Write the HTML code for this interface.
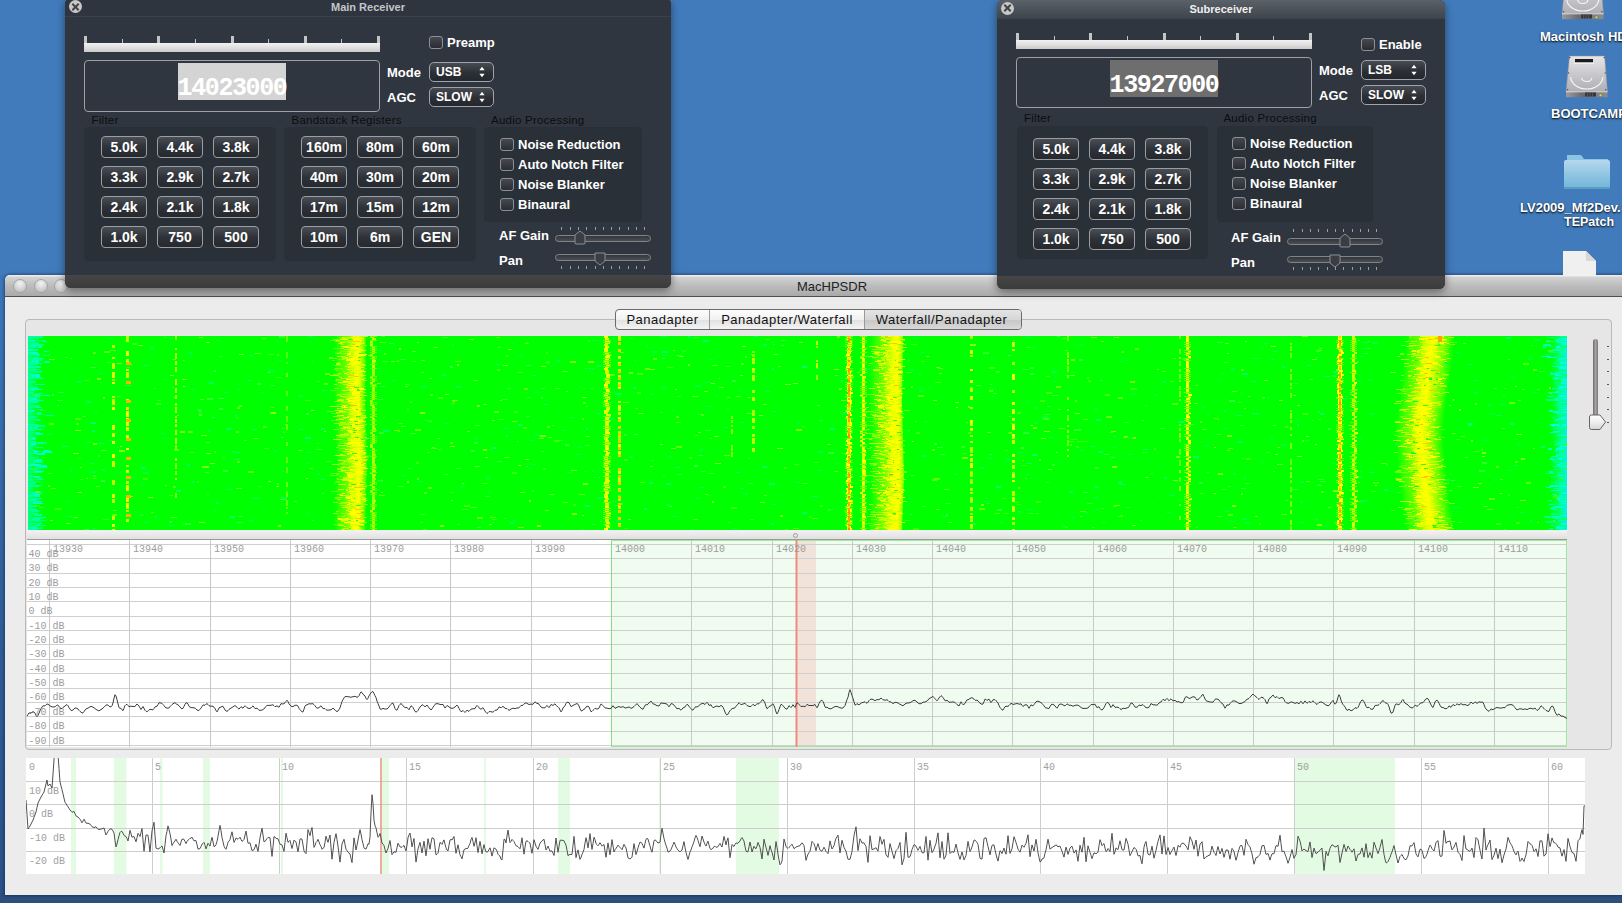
<!DOCTYPE html><html><head><meta charset="utf-8"><style>
*{box-sizing:border-box}
body{margin:0;width:1622px;height:903px;overflow:hidden;position:relative;background:#417bbb;font-family:"Liberation Sans",sans-serif}
.a{position:absolute}
.hud{position:absolute;background:#30363f;border-radius:6px;overflow:hidden;box-shadow:0 3px 8px rgba(0,0,0,.45)}
.hud .tb{position:absolute;left:0;right:0;top:0;height:19px;border-bottom:1px solid #3b424b}
.hud .ttl{position:absolute;left:0;right:0;top:2px;text-align:center;font-size:11px;font-weight:bold;color:#c9ccd0}
.hud .bstrip{position:absolute;left:0;right:0;bottom:0;height:13px;background:linear-gradient(#464646,#3b3b3b)}
.cls{position:absolute;width:13px;height:13px;border-radius:50%;background:#c8c8c8;}
.cls:before,.cls:after{content:"";position:absolute;left:2px;top:5.5px;width:9px;height:2px;background:#444;transform:rotate(45deg)}
.cls:after{transform:rotate(-45deg)}
.lbl{position:absolute;font-size:11.5px;color:#0b0d10;white-space:nowrap;letter-spacing:0.25px}
.grp{position:absolute;background:#2a3038;border-radius:4px;border:1px solid #283037}
.btn{position:absolute;width:46px;height:22px;border:1px solid #9a9ea3;border-radius:4px;background:linear-gradient(#4a4e55,#2f3339 50%,#25282d);color:#fff;font-weight:bold;font-size:14px;text-align:center;line-height:20px}
.chk{position:absolute;width:14px;height:13px;border:1px solid #8c9096;border-radius:3px;background:linear-gradient(#45494f,#2a2d32)}
.ctext{position:absolute;font-size:13px;font-weight:bold;color:#fff;white-space:nowrap}
.pop{position:absolute;border:1px solid #a0a4a9;border-radius:5px;background:linear-gradient(#474b52,#2c3036 55%,#24272c);color:#fff;font-weight:bold;font-size:12px;}
.freq{position:absolute;border:1px solid #9da1a6;border-radius:4px;}
.track{position:absolute;height:9px;background:linear-gradient(#f2f2f2,#dcdcdc 60%,#c9c9c9)}
.tick{position:absolute;background:#c4c4c4}
.strk{position:absolute;height:7px;border:1px solid #80848a;border-radius:4px;background:linear-gradient(#33363b,#4a4d52)}
.stick{position:absolute;width:1px;height:3px;background:#9a9ea3}
</style></head><body>

<div class="a" style="left:0;top:275px;width:6px;height:628px;background:linear-gradient(#3d77b8,#2f5c95 60%,#2b5289)"></div>
<div class="a" style="left:0;top:893px;width:1622px;height:10px;background:#2c4f7d"></div>
<div class="a" style="left:5px;top:275px;width:1625px;height:620px;background:#ececec;border-radius:5px 5px 0 0;overflow:hidden;box-shadow:0 0 3px 1px rgba(0,20,60,.45)">
<div class="a" style="left:0;top:0;width:1625px;height:22px;background:linear-gradient(#f0ecec,#f0ecec 1px,#d3d3d3 2px,#bdbdbd 50%,#a9a9a9);border-bottom:1px solid #4f4f4f"></div>
<div class="a" style="left:8px;top:4px;width:14px;height:14px;border-radius:50%;border:1px solid #a5a5a5;background:radial-gradient(circle at 50% 30%,#f4f4f4,#c9c9c9 70%,#b9b9b9)"></div>
<div class="a" style="left:29px;top:4px;width:14px;height:14px;border-radius:50%;border:1px solid #a5a5a5;background:radial-gradient(circle at 50% 30%,#f4f4f4,#c9c9c9 70%,#b9b9b9)"></div>
<div class="a" style="left:49px;top:4px;width:14px;height:14px;border-radius:50%;border:1px solid #a5a5a5;background:radial-gradient(circle at 50% 30%,#f4f4f4,#c9c9c9 70%,#b9b9b9)"></div>
<div class="a" style="left:0;width:1617px;top:4px;text-align:center;font-size:13px;color:#222;padding-left:37px">MacHPSDR</div>
</div>
<div class="a" style="left:25px;top:319px;width:1587px;height:431px;border:1px solid #b9b9b9;border-radius:4px;background:#e6e6e6"></div>
<div class="a" style="left:615px;top:309px;width:407px;height:21px;border:1px solid #6b6b6b;border-radius:4px;overflow:hidden;background:linear-gradient(#fdfdfd,#f1f1f1 50%,#e2e2e2 55%,#f4f4f4);font-size:13px;color:#111;letter-spacing:0.5px">
<div class="a" style="left:0;top:0;width:93px;height:19px;text-align:center;line-height:19px">Panadapter</div>
<div class="a" style="left:93px;top:0;width:1px;height:19px;background:#9a9a9a"></div>
<div class="a" style="left:94px;top:0;width:154px;height:19px;text-align:center;line-height:19px">Panadapter/Waterfall</div>
<div class="a" style="left:248px;top:0;width:1px;height:19px;background:#9a9a9a"></div>
<div class="a" style="left:249px;top:0;width:157px;height:19px;text-align:center;line-height:19px;padding-right:4px;background:linear-gradient(#e4e4e4,#d6d6d6 50%,#c8c8c8 55%,#d8d8d8)">Waterfall/Panadapter</div>
</div>
<div class="a" style="left:1593px;top:339px;width:5px;height:82px;border-radius:3px;background:linear-gradient(90deg,#6f6a6a,#a9a3a3 50%,#777)"></div>
<div class="a" style="left:1607px;top:346px;width:2px;height:1px;background:#555"></div>
<div class="a" style="left:1607px;top:359px;width:2px;height:1px;background:#555"></div>
<div class="a" style="left:1607px;top:371px;width:2px;height:1px;background:#555"></div>
<div class="a" style="left:1607px;top:384px;width:2px;height:1px;background:#555"></div>
<div class="a" style="left:1607px;top:397px;width:2px;height:1px;background:#555"></div>
<div class="a" style="left:1607px;top:409px;width:2px;height:1px;background:#555"></div>
<div class="a" style="left:1607px;top:422px;width:2px;height:1px;background:#555"></div>
<svg class="a" style="left:1588px;top:414px" width="20" height="17"><path d="M1.5 3 Q1.5 1 3.5 1 L12 1 L17.5 8 L12 15.5 L3.5 15.5 Q1.5 15.5 1.5 13.5 Z" fill="url(#thg)" stroke="#666" stroke-width="1"/><defs><linearGradient id="thg" x1="0" y1="0" x2="0" y2="1"><stop offset="0" stop-color="#fff"/><stop offset=".5" stop-color="#eee"/><stop offset="1" stop-color="#d5d5d5"/></linearGradient></defs></svg>
<div class="a" style="left:27px;top:530px;width:1540px;height:10px;background:linear-gradient(#f3f3f3,#dedede)"></div>
<div class="a" style="left:793px;top:533px;width:5px;height:5px;border-radius:50%;border:1px solid #999"></div>
<svg class="a" style="left:28px;top:336px" width="1539" height="194"><defs><linearGradient id="cyl" x1="0" x2="1" y1="0" y2="0"><stop offset="0" stop-color="#00ffc0" stop-opacity=".75"/><stop offset=".35" stop-color="#00ff90" stop-opacity=".4"/><stop offset="1" stop-color="#00ff00" stop-opacity="0"/></linearGradient><linearGradient id="cyr" x1="0" x2="1" y1="0" y2="0"><stop offset="0" stop-color="#00ff00" stop-opacity="0"/><stop offset=".6" stop-color="#00ffa0" stop-opacity=".6"/><stop offset="1" stop-color="#00f0ff"/></linearGradient><linearGradient id="bnd" x1="0" x2="1" y1="0" y2="0"><stop offset="0" stop-color="#ffff00" stop-opacity="0"/><stop offset=".5" stop-color="#ffff00" stop-opacity=".85"/><stop offset="1" stop-color="#ffff00" stop-opacity="0"/></linearGradient></defs><rect width="1539" height="194" fill="#00ff00"/><rect width="14" height="194" fill="url(#cyl)"/><rect x="1519" width="20" height="194" fill="url(#cyr)"/><defs><linearGradient id="bg0" x1="0" x2="1" y1="0" y2="0"><stop offset="0" stop-color="#ffff00" stop-opacity="0"/><stop offset="0.39" stop-color="#c8ff00" stop-opacity=".5"/><stop offset="0.62" stop-color="#f0ff00" stop-opacity=".9"/><stop offset="0.77" stop-color="#ffff00" stop-opacity="1"/><stop offset="1" stop-color="#ffff00" stop-opacity="0.2"/></linearGradient><linearGradient id="bg1" x1="0" x2="1" y1="0" y2="0"><stop offset="0" stop-color="#ffff00" stop-opacity="0"/><stop offset="0.42" stop-color="#c8ff00" stop-opacity=".5"/><stop offset="0.68" stop-color="#f0ff00" stop-opacity=".9"/><stop offset="0.85" stop-color="#ffff00" stop-opacity="1"/><stop offset="1" stop-color="#ffff00" stop-opacity="0.5"/></linearGradient><linearGradient id="bg2" x1="0" x2="1" y1="0" y2="0"><stop offset="0" stop-color="#ffff00" stop-opacity="0"/><stop offset="0.27" stop-color="#c8ff00" stop-opacity=".5"/><stop offset="0.43" stop-color="#f0ff00" stop-opacity=".9"/><stop offset="0.54" stop-color="#ffff00" stop-opacity="1"/><stop offset="1" stop-color="#ffff00" stop-opacity="0.0"/></linearGradient></defs><rect x="307.0" y="0" width="31" height="4" fill="url(#bg0)"/><rect x="306.9" y="4" width="31" height="4" fill="url(#bg0)"/><rect x="306.8" y="8" width="31" height="4" fill="url(#bg0)"/><rect x="306.8" y="12" width="31" height="4" fill="url(#bg0)"/><rect x="306.7" y="16" width="31" height="4" fill="url(#bg0)"/><rect x="306.6" y="20" width="31" height="4" fill="url(#bg0)"/><rect x="306.6" y="24" width="31" height="4" fill="url(#bg0)"/><rect x="306.5" y="28" width="31" height="4" fill="url(#bg0)"/><rect x="306.4" y="32" width="31" height="4" fill="url(#bg0)"/><rect x="306.4" y="36" width="31" height="4" fill="url(#bg0)"/><rect x="306.3" y="40" width="31" height="4" fill="url(#bg0)"/><rect x="306.2" y="44" width="31" height="4" fill="url(#bg0)"/><rect x="306.2" y="48" width="31" height="4" fill="url(#bg0)"/><rect x="306.1" y="52" width="31" height="4" fill="url(#bg0)"/><rect x="306.0" y="56" width="31" height="4" fill="url(#bg0)"/><rect x="306.1" y="60" width="31" height="4" fill="url(#bg0)"/><rect x="306.2" y="64" width="31" height="4" fill="url(#bg0)"/><rect x="306.3" y="68" width="31" height="4" fill="url(#bg0)"/><rect x="306.4" y="72" width="31" height="4" fill="url(#bg0)"/><rect x="306.5" y="76" width="31" height="4" fill="url(#bg0)"/><rect x="306.6" y="80" width="31" height="4" fill="url(#bg0)"/><rect x="306.7" y="84" width="31" height="4" fill="url(#bg0)"/><rect x="306.9" y="88" width="31" height="4" fill="url(#bg0)"/><rect x="307.0" y="92" width="31" height="4" fill="url(#bg0)"/><rect x="307.1" y="96" width="31" height="4" fill="url(#bg0)"/><rect x="307.2" y="100" width="31" height="4" fill="url(#bg0)"/><rect x="307.3" y="104" width="31" height="4" fill="url(#bg0)"/><rect x="307.4" y="108" width="31" height="4" fill="url(#bg0)"/><rect x="307.5" y="112" width="31" height="4" fill="url(#bg0)"/><rect x="307.7" y="116" width="31" height="4" fill="url(#bg0)"/><rect x="307.8" y="120" width="31" height="4" fill="url(#bg0)"/><rect x="307.9" y="124" width="31" height="4" fill="url(#bg0)"/><rect x="308.0" y="128" width="31" height="4" fill="url(#bg0)"/><rect x="307.9" y="132" width="31" height="4" fill="url(#bg0)"/><rect x="307.8" y="136" width="31" height="4" fill="url(#bg0)"/><rect x="307.6" y="140" width="31" height="4" fill="url(#bg0)"/><rect x="307.5" y="144" width="31" height="4" fill="url(#bg0)"/><rect x="307.4" y="148" width="31" height="4" fill="url(#bg0)"/><rect x="307.2" y="152" width="31" height="4" fill="url(#bg0)"/><rect x="307.1" y="156" width="31" height="4" fill="url(#bg0)"/><rect x="307.0" y="160" width="31" height="4" fill="url(#bg0)"/><rect x="306.9" y="164" width="31" height="4" fill="url(#bg0)"/><rect x="306.8" y="168" width="31" height="4" fill="url(#bg0)"/><rect x="306.6" y="172" width="31" height="4" fill="url(#bg0)"/><rect x="306.5" y="176" width="31" height="4" fill="url(#bg0)"/><rect x="306.4" y="180" width="31" height="4" fill="url(#bg0)"/><rect x="306.2" y="184" width="31" height="4" fill="url(#bg0)"/><rect x="306.1" y="188" width="31" height="4" fill="url(#bg0)"/><rect x="306.0" y="192" width="31" height="4" fill="url(#bg0)"/><rect x="842.0" y="0" width="33" height="4" fill="url(#bg1)"/><rect x="841.9" y="4" width="33" height="4" fill="url(#bg1)"/><rect x="841.9" y="8" width="33" height="4" fill="url(#bg1)"/><rect x="841.8" y="12" width="33" height="4" fill="url(#bg1)"/><rect x="841.7" y="16" width="33" height="4" fill="url(#bg1)"/><rect x="841.7" y="20" width="33" height="4" fill="url(#bg1)"/><rect x="841.6" y="24" width="33" height="4" fill="url(#bg1)"/><rect x="841.6" y="28" width="33" height="4" fill="url(#bg1)"/><rect x="841.5" y="32" width="33" height="4" fill="url(#bg1)"/><rect x="841.5" y="36" width="33" height="4" fill="url(#bg1)"/><rect x="841.4" y="40" width="33" height="4" fill="url(#bg1)"/><rect x="841.3" y="44" width="33" height="4" fill="url(#bg1)"/><rect x="841.3" y="48" width="33" height="4" fill="url(#bg1)"/><rect x="841.2" y="52" width="33" height="4" fill="url(#bg1)"/><rect x="841.2" y="56" width="33" height="4" fill="url(#bg1)"/><rect x="841.1" y="60" width="33" height="4" fill="url(#bg1)"/><rect x="841.1" y="64" width="33" height="4" fill="url(#bg1)"/><rect x="841.0" y="68" width="33" height="4" fill="url(#bg1)"/><rect x="841.1" y="72" width="33" height="4" fill="url(#bg1)"/><rect x="841.2" y="76" width="33" height="4" fill="url(#bg1)"/><rect x="841.3" y="80" width="33" height="4" fill="url(#bg1)"/><rect x="841.5" y="84" width="33" height="4" fill="url(#bg1)"/><rect x="841.6" y="88" width="33" height="4" fill="url(#bg1)"/><rect x="841.7" y="92" width="33" height="4" fill="url(#bg1)"/><rect x="841.8" y="96" width="33" height="4" fill="url(#bg1)"/><rect x="841.9" y="100" width="33" height="4" fill="url(#bg1)"/><rect x="842.0" y="104" width="33" height="4" fill="url(#bg1)"/><rect x="842.1" y="108" width="33" height="4" fill="url(#bg1)"/><rect x="842.3" y="112" width="33" height="4" fill="url(#bg1)"/><rect x="842.4" y="116" width="33" height="4" fill="url(#bg1)"/><rect x="842.5" y="120" width="33" height="4" fill="url(#bg1)"/><rect x="842.6" y="124" width="33" height="4" fill="url(#bg1)"/><rect x="842.7" y="128" width="33" height="4" fill="url(#bg1)"/><rect x="842.8" y="132" width="33" height="4" fill="url(#bg1)"/><rect x="842.9" y="136" width="33" height="4" fill="url(#bg1)"/><rect x="842.9" y="140" width="33" height="4" fill="url(#bg1)"/><rect x="842.8" y="144" width="33" height="4" fill="url(#bg1)"/><rect x="842.6" y="148" width="33" height="4" fill="url(#bg1)"/><rect x="842.5" y="152" width="33" height="4" fill="url(#bg1)"/><rect x="842.3" y="156" width="33" height="4" fill="url(#bg1)"/><rect x="842.2" y="160" width="33" height="4" fill="url(#bg1)"/><rect x="842.0" y="164" width="33" height="4" fill="url(#bg1)"/><rect x="841.9" y="168" width="33" height="4" fill="url(#bg1)"/><rect x="841.7" y="172" width="33" height="4" fill="url(#bg1)"/><rect x="841.6" y="176" width="33" height="4" fill="url(#bg1)"/><rect x="841.4" y="180" width="33" height="4" fill="url(#bg1)"/><rect x="841.3" y="184" width="33" height="4" fill="url(#bg1)"/><rect x="841.1" y="188" width="33" height="4" fill="url(#bg1)"/><rect x="841.0" y="192" width="33" height="4" fill="url(#bg1)"/><rect x="1378.8" y="0" width="48" height="4" fill="url(#bg2)"/><rect x="1378.3" y="4" width="48" height="4" fill="url(#bg2)"/><rect x="1377.9" y="8" width="48" height="4" fill="url(#bg2)"/><rect x="1377.4" y="12" width="48" height="4" fill="url(#bg2)"/><rect x="1377.0" y="16" width="48" height="4" fill="url(#bg2)"/><rect x="1376.5" y="20" width="48" height="4" fill="url(#bg2)"/><rect x="1376.0" y="24" width="48" height="4" fill="url(#bg2)"/><rect x="1375.6" y="28" width="48" height="4" fill="url(#bg2)"/><rect x="1375.1" y="32" width="48" height="4" fill="url(#bg2)"/><rect x="1374.7" y="36" width="48" height="4" fill="url(#bg2)"/><rect x="1374.2" y="40" width="48" height="4" fill="url(#bg2)"/><rect x="1373.7" y="44" width="48" height="4" fill="url(#bg2)"/><rect x="1373.2" y="48" width="48" height="4" fill="url(#bg2)"/><rect x="1372.6" y="52" width="48" height="4" fill="url(#bg2)"/><rect x="1372.0" y="56" width="48" height="4" fill="url(#bg2)"/><rect x="1371.5" y="60" width="48" height="4" fill="url(#bg2)"/><rect x="1370.9" y="64" width="48" height="4" fill="url(#bg2)"/><rect x="1370.4" y="68" width="48" height="4" fill="url(#bg2)"/><rect x="1369.8" y="72" width="48" height="4" fill="url(#bg2)"/><rect x="1369.2" y="76" width="48" height="4" fill="url(#bg2)"/><rect x="1368.7" y="80" width="48" height="4" fill="url(#bg2)"/><rect x="1368.1" y="84" width="48" height="4" fill="url(#bg2)"/><rect x="1367.6" y="88" width="48" height="4" fill="url(#bg2)"/><rect x="1367.0" y="92" width="48" height="4" fill="url(#bg2)"/><rect x="1367.3" y="96" width="48" height="4" fill="url(#bg2)"/><rect x="1367.6" y="100" width="48" height="4" fill="url(#bg2)"/><rect x="1368.0" y="104" width="48" height="4" fill="url(#bg2)"/><rect x="1368.3" y="108" width="48" height="4" fill="url(#bg2)"/><rect x="1368.6" y="112" width="48" height="4" fill="url(#bg2)"/><rect x="1368.9" y="116" width="48" height="4" fill="url(#bg2)"/><rect x="1369.2" y="120" width="48" height="4" fill="url(#bg2)"/><rect x="1369.6" y="124" width="48" height="4" fill="url(#bg2)"/><rect x="1369.9" y="128" width="48" height="4" fill="url(#bg2)"/><rect x="1370.2" y="132" width="48" height="4" fill="url(#bg2)"/><rect x="1370.5" y="136" width="48" height="4" fill="url(#bg2)"/><rect x="1370.8" y="140" width="48" height="4" fill="url(#bg2)"/><rect x="1371.3" y="144" width="48" height="4" fill="url(#bg2)"/><rect x="1371.8" y="148" width="48" height="4" fill="url(#bg2)"/><rect x="1372.4" y="152" width="48" height="4" fill="url(#bg2)"/><rect x="1373.0" y="156" width="48" height="4" fill="url(#bg2)"/><rect x="1373.5" y="160" width="48" height="4" fill="url(#bg2)"/><rect x="1374.1" y="164" width="48" height="4" fill="url(#bg2)"/><rect x="1374.6" y="168" width="48" height="4" fill="url(#bg2)"/><rect x="1375.2" y="172" width="48" height="4" fill="url(#bg2)"/><rect x="1375.8" y="176" width="48" height="4" fill="url(#bg2)"/><rect x="1376.3" y="180" width="48" height="4" fill="url(#bg2)"/><rect x="1376.9" y="184" width="48" height="4" fill="url(#bg2)"/><rect x="1377.4" y="188" width="48" height="4" fill="url(#bg2)"/><rect x="1378.0" y="192" width="48" height="4" fill="url(#bg2)"/><path fill="#00ff80" d="M2 166h3v1h-3zM7 57h3v2h-3zM1 146h7v2h-7zM4 134h10v1h-10zM14 19h8v1h-8zM2 69h10v2h-10zM1 16h3v2h-3zM3 174h10v1h-10zM6 42h10v1h-10zM4 71h5v1h-5zM1 1h5v1h-5zM5 32h3v1h-3zM9 132h3v1h-3zM1 92h5v2h-5zM0 132h10v1h-10zM1 52h10v2h-10zM1 169h4v1h-4zM4 5h3v2h-3zM2 64h6v1h-6zM4 61h8v1h-8zM3 189h8v1h-8zM7 4h10v1h-10zM10 142h3v1h-3zM2 132h10v1h-10zM4 109h4v1h-4zM8 77h4v1h-4zM5 141h10v1h-10zM0 22h7v1h-7zM5 141h9v1h-9zM2 33h3v2h-3zM4 58h8v1h-8zM0 22h5v1h-5zM1 77h6v1h-6zM0 135h5v2h-5zM8 185h5v1h-5zM7 187h5v2h-5zM5 145h3v2h-3zM11 191h4v2h-4zM2 193h6v1h-6zM12 73h3v2h-3zM6 164h6v1h-6zM3 190h7v2h-7zM5 92h5v2h-5zM6 130h7v1h-7zM1 7h9v2h-9zM6 52h4v1h-4zM4 65h7v1h-7zM2 61h7v1h-7zM7 145h6v1h-6zM3 63h9v1h-9zM9 184h10v1h-10zM2 183h7v1h-7zM3 57h3v1h-3zM2 80h6v1h-6zM1 5h6v1h-6zM4 1h7v2h-7zM10 194h7v1h-7zM4 57h10v1h-10zM4 36h9v1h-9zM7 84h6v1h-6zM9 8h7v2h-7zM1 110h4v1h-4zM5 121h6v1h-6zM3 93h10v1h-10zM4 157h3v1h-3zM2 127h5v1h-5zM0 166h3v1h-3zM9 106h10v2h-10zM15 131h5v1h-5zM1 1h4v2h-4zM2 52h7v1h-7zM3 101h5v2h-5zM1 23h5v1h-5zM10 93h6v1h-6zM3 101h4v2h-4zM1 123h8v1h-8zM2 162h9v1h-9zM1 31h5v1h-5zM8 78h9v1h-9zM3 63h9v1h-9zM5 45h3v1h-3zM2 113h3v1h-3zM7 6h4v2h-4zM1531 65h10v1h-10zM1526 46h9v1h-9zM1526 133h4v1h-4zM1521 75h7v1h-7zM1534 74h9v1h-9zM1533 5h3v1h-3zM1524 90h7v1h-7zM1530 2h3v2h-3zM1531 89h10v2h-10zM1533 0h3v1h-3zM1526 26h3v2h-3zM1518 185h10v2h-10zM1518 1h9v1h-9zM1532 26h7v1h-7zM1532 68h9v2h-9zM1533 43h7v1h-7zM1530 153h6v1h-6zM1517 137h10v1h-10zM1529 78h6v1h-6zM1526 16h8v1h-8zM1521 192h4v2h-4zM1534 183h8v1h-8zM1528 128h10v1h-10zM1526 125h5v1h-5zM1529 28h4v1h-4zM1533 101h4v1h-4zM1529 67h9v2h-9zM1531 152h3v1h-3zM1533 83h5v1h-5zM1532 83h6v1h-6zM1534 38h5v1h-5zM1524 177h6v2h-6zM1533 1h6v1h-6zM1523 146h9v1h-9zM1526 105h10v1h-10zM1533 27h6v1h-6zM1524 42h5v1h-5zM1533 39h6v1h-6zM1528 42h4v2h-4zM1531 35h10v1h-10zM1531 165h3v1h-3zM1528 11h8v1h-8zM1522 36h3v1h-3zM1529 87h9v1h-9zM1532 182h7v1h-7zM1531 10h9v2h-9zM1532 121h3v2h-3zM1530 9h9v1h-9zM1532 81h3v1h-3zM1524 13h10v2h-10zM1521 10h4v1h-4zM1531 120h6v1h-6zM1531 120h3v1h-3zM1533 79h5v1h-5zM1528 147h10v1h-10zM1516 180h8v2h-8zM1517 63h9v1h-9zM1532 68h9v1h-9zM1528 10h7v1h-7zM1523 140h10v1h-10zM1523 173h9v1h-9zM1532 179h7v1h-7zM1530 144h8v1h-8zM1532 52h10v2h-10zM1521 16h9v1h-9zM1533 23h7v1h-7zM1531 40h8v1h-8zM1534 65h8v1h-8zM1532 7h3v1h-3zM1524 81h3v1h-3zM1529 112h6v1h-6zM1531 56h3v1h-3zM1533 39h3v1h-3zM1528 123h4v1h-4zM1529 36h3v1h-3zM1530 50h4v1h-4zM1533 44h6v1h-6zM1534 93h3v1h-3zM1525 95h3v1h-3zM1517 18h4v1h-4zM1527 114h3v2h-3zM1518 4h4v2h-4zM1528 49h7v1h-7zM1528 31h9v1h-9zM1528 144h8v1h-8zM1518 63h9v2h-9zM1530 2h8v1h-8zM1528 107h9v1h-9zM1515 10h3v2h-3zM1528 68h7v2h-7zM1533 25h7v1h-7zM1532 189h7v1h-7zM1528 14h3v1h-3z"/><path fill="#00ffd0" d="M3 24h8v2h-8zM4 22h9v1h-9zM3 101h3v1h-3zM3 107h5v2h-5zM3 163h6v1h-6zM7 140h4v2h-4zM1 91h9v1h-9zM6 21h5v1h-5zM5 102h3v1h-3zM4 53h10v1h-10zM1 0h5v2h-5zM2 93h3v1h-3zM7 123h7v1h-7zM1 128h8v2h-8zM9 93h4v1h-4zM2 192h6v1h-6zM3 190h4v2h-4zM2 38h10v2h-10zM6 26h5v1h-5zM2 149h9v2h-9zM1 1h5v1h-5zM14 115h10v2h-10zM4 66h6v1h-6zM4 64h5v1h-5zM5 159h7v2h-7zM1 28h6v1h-6zM2 173h7v1h-7zM2 14h5v1h-5zM1 56h4v1h-4zM0 41h7v1h-7zM1 4h7v1h-7zM12 129h7v2h-7zM0 88h3v1h-3zM3 18h7v1h-7zM8 97h7v2h-7zM4 140h8v1h-8zM3 177h6v1h-6zM6 115h3v2h-3zM0 16h10v1h-10zM4 34h3v1h-3zM3 140h6v1h-6zM6 115h7v1h-7zM3 53h4v2h-4zM5 124h9v1h-9zM0 30h6v2h-6zM7 35h7v1h-7zM1 164h5v1h-5zM3 128h10v2h-10zM5 194h10v1h-10zM2 140h6v1h-6zM6 135h10v1h-10zM0 27h6v1h-6zM1 10h3v1h-3zM1 64h9v2h-9zM1 94h6v1h-6zM5 17h6v1h-6zM0 14h5v1h-5zM10 187h4v1h-4zM2 16h3v1h-3zM10 162h4v1h-4zM6 64h9v1h-9zM9 117h8v2h-8zM6 40h6v1h-6zM1 159h4v1h-4zM16 114h5v1h-5zM0 63h5v1h-5zM4 39h7v2h-7zM3 62h6v2h-6zM5 167h10v1h-10zM12 59h10v1h-10zM0 75h6v1h-6zM10 181h8v1h-8zM5 158h7v1h-7zM2 170h7v1h-7zM4 117h5v1h-5zM7 192h6v1h-6zM8 157h6v1h-6zM1 13h9v2h-9zM1 33h10v1h-10z"/><path fill="#00ffa0" d="M2 61h4v2h-4zM5 136h9v1h-9zM5 149h10v1h-10zM0 62h4v2h-4zM8 18h4v2h-4zM3 42h8v1h-8zM7 89h10v2h-10zM7 98h8v1h-8zM5 126h3v1h-3zM6 33h6v1h-6zM1 150h5v1h-5zM6 143h9v1h-9zM3 64h8v2h-8zM2 121h4v1h-4zM0 26h8v2h-8zM9 76h4v2h-4zM5 132h8v1h-8zM7 156h6v1h-6zM4 7h3v1h-3zM1 88h10v2h-10zM4 0h10v2h-10zM8 22h9v1h-9zM3 156h10v2h-10zM4 10h4v2h-4zM1 143h3v1h-3zM7 155h6v2h-6zM12 106h4v1h-4zM4 191h4v1h-4zM5 57h5v2h-5zM8 131h9v1h-9zM2 184h8v1h-8zM0 46h7v1h-7zM7 126h8v1h-8zM3 51h7v2h-7zM4 114h5v1h-5zM7 48h10v1h-10zM1 27h9v2h-9zM3 177h7v1h-7zM2 0h7v1h-7zM5 91h5v1h-5zM1 97h4v1h-4zM4 129h3v1h-3zM2 83h10v1h-10zM9 10h5v2h-5zM1 160h6v1h-6zM4 166h10v1h-10zM16 25h6v2h-6zM1 74h7v1h-7zM1 121h3v1h-3zM5 0h10v2h-10zM8 106h8v1h-8zM5 30h8v1h-8zM11 189h7v1h-7zM5 150h4v1h-4zM2 193h7v1h-7zM9 73h5v1h-5zM7 111h8v1h-8zM4 140h5v1h-5zM3 81h6v1h-6zM4 190h6v1h-6zM4 86h3v1h-3zM5 175h6v1h-6zM14 5h5v1h-5zM5 181h10v2h-10zM4 149h6v1h-6zM6 60h6v1h-6zM5 165h9v1h-9zM6 178h8v2h-8zM4 59h10v1h-10zM16 15h5v1h-5zM4 96h8v1h-8zM0 71h4v1h-4zM0 31h6v1h-6zM2 105h6v2h-6zM0 191h4v2h-4zM4 183h8v1h-8zM0 27h10v2h-10zM3 38h6v1h-6zM3 109h4v1h-4zM1 170h4v1h-4zM7 71h7v1h-7zM6 149h6v1h-6zM2 187h6v1h-6zM3 8h10v2h-10zM18 79h8v1h-8zM1 103h6v1h-6zM5 23h9v2h-9zM1 94h5v1h-5zM2 17h4v1h-4zM8 41h6v2h-6zM2 132h5v1h-5zM2 143h3v2h-3zM4 30h9v2h-9zM5 125h10v1h-10zM1 117h5v1h-5zM10 27h4v1h-4zM1 33h4v2h-4zM3 175h6v1h-6z"/><path fill="#00ffe0" d="M1530 82h7v1h-7zM1533 81h8v1h-8zM1524 96h5v1h-5zM1513 20h10v1h-10zM1522 149h8v2h-8zM1531 149h7v2h-7zM1533 62h5v1h-5zM1529 6h9v1h-9zM1531 129h9v2h-9zM1532 167h10v1h-10zM1528 191h7v2h-7zM1528 55h4v2h-4zM1533 149h4v2h-4zM1533 27h5v1h-5zM1533 179h3v1h-3zM1528 10h4v2h-4zM1532 193h9v1h-9zM1532 52h6v1h-6zM1531 73h10v1h-10zM1534 7h9v2h-9zM1522 88h10v2h-10zM1533 0h6v1h-6zM1534 88h7v2h-7zM1533 179h6v1h-6zM1533 43h9v2h-9zM1531 193h5v2h-5zM1523 154h8v1h-8zM1532 27h4v1h-4zM1529 99h10v1h-10zM1527 75h10v1h-10zM1531 164h6v2h-6zM1534 2h9v1h-9zM1532 25h10v2h-10zM1531 31h8v2h-8zM1520 56h9v1h-9zM1527 39h7v1h-7zM1529 162h3v2h-3zM1533 75h7v2h-7zM1531 148h5v1h-5zM1531 50h10v2h-10zM1532 30h7v1h-7zM1532 109h9v2h-9zM1533 106h5v1h-5zM1533 156h9v2h-9zM1526 152h4v1h-4zM1526 170h10v2h-10zM1529 77h5v1h-5zM1533 3h9v1h-9zM1533 22h6v1h-6zM1531 191h5v2h-5zM1525 13h3v1h-3zM1519 21h10v1h-10zM1531 59h7v2h-7zM1529 122h6v1h-6zM1530 161h10v1h-10zM1533 71h3v1h-3zM1518 151h5v1h-5zM1522 96h4v1h-4zM1531 123h3v1h-3zM1525 95h7v1h-7zM1529 3h10v2h-10zM1530 191h5v1h-5zM1531 82h6v1h-6zM1531 115h5v1h-5zM1531 66h6v1h-6zM1531 111h3v1h-3zM1533 46h6v2h-6zM1533 187h9v2h-9zM1531 22h6v2h-6zM1528 128h7v1h-7zM1531 154h3v1h-3zM1525 92h8v1h-8zM1525 13h8v2h-8zM1532 51h3v1h-3zM1532 3h9v1h-9zM1533 165h5v1h-5zM1520 112h4v2h-4zM1523 120h7v1h-7zM1530 3h8v1h-8zM1528 112h8v2h-8z"/><path fill="#00ffb0" d="M1530 135h3v2h-3zM1532 161h9v2h-9zM1532 147h5v1h-5zM1529 93h3v1h-3zM1530 52h8v2h-8zM1533 16h5v2h-5zM1521 168h6v1h-6zM1525 130h7v1h-7zM1533 83h6v1h-6zM1525 178h3v1h-3zM1524 52h7v1h-7zM1527 108h7v1h-7zM1529 23h7v1h-7zM1531 83h8v1h-8zM1528 118h10v2h-10zM1532 148h6v1h-6zM1520 60h6v1h-6zM1530 168h4v1h-4zM1520 164h4v1h-4zM1530 25h9v1h-9zM1525 182h5v1h-5zM1533 104h5v2h-5zM1525 41h6v2h-6zM1532 163h8v2h-8zM1526 64h7v1h-7zM1531 107h8v2h-8zM1530 184h6v1h-6zM1525 170h9v1h-9zM1533 120h8v1h-8zM1524 180h9v2h-9zM1524 123h3v2h-3zM1533 91h6v2h-6zM1531 159h4v2h-4zM1526 83h5v2h-5zM1521 135h4v2h-4zM1527 36h10v1h-10zM1531 42h3v1h-3zM1525 170h7v1h-7zM1530 121h6v1h-6zM1529 90h10v1h-10zM1532 128h7v2h-7zM1524 30h8v1h-8zM1533 103h3v1h-3zM1531 3h8v1h-8zM1532 17h3v2h-3zM1527 152h5v1h-5zM1527 190h5v1h-5zM1532 127h10v2h-10zM1524 158h4v1h-4zM1532 42h5v1h-5zM1530 106h10v1h-10zM1533 69h8v1h-8zM1527 3h5v2h-5zM1524 96h6v1h-6zM1533 192h3v1h-3zM1529 138h4v2h-4zM1533 148h7v2h-7zM1531 126h8v1h-8zM1530 71h9v1h-9zM1515 8h8v2h-8zM1534 171h9v1h-9zM1534 112h4v1h-4zM1533 56h4v2h-4zM1528 5h4v1h-4zM1527 75h8v1h-8zM1534 14h6v2h-6zM1532 193h6v1h-6zM1528 41h3v2h-3zM1532 0h7v1h-7zM1522 171h6v2h-6zM1532 132h8v1h-8zM1526 126h4v1h-4zM1522 122h5v2h-5zM1526 62h8v2h-8zM1521 74h4v2h-4zM1530 42h4v1h-4zM1529 61h10v1h-10zM1528 24h5v1h-5zM1522 37h10v2h-10zM1526 42h3v2h-3zM1528 152h7v1h-7zM1525 75h9v2h-9zM1523 177h6v2h-6zM1531 117h7v2h-7zM1532 139h9v2h-9zM1531 69h7v1h-7zM1521 112h3v2h-3z"/><path fill="#00ff60" d="M802 173h3v1h-3zM1066 73h4v1h-4zM998 1h5v1h-5zM1271 186h5v1h-5zM170 75h4v2h-4zM1367 107h3v2h-3zM634 15h6v2h-6zM164 145h2v2h-2zM943 15h2v2h-2zM1239 61h3v1h-3zM478 99h2v2h-2zM348 32h5v1h-5zM548 118h3v1h-3zM271 93h4v1h-4zM39 180h5v1h-5zM1425 171h6v1h-6zM1440 28h4v1h-4zM774 176h5v2h-5zM634 51h4v1h-4zM1440 89h4v1h-4zM1279 29h4v1h-4zM468 28h4v1h-4zM944 187h4v2h-4zM379 35h2v1h-2zM1481 134h3v1h-3zM1208 79h6v1h-6zM738 55h4v1h-4zM1025 45h3v1h-3zM709 136h3v1h-3zM1041 155h4v2h-4zM1332 135h2v1h-2zM817 64h5v1h-5zM853 74h5v1h-5zM955 165h6v1h-6zM1297 40h5v1h-5zM971 186h3v1h-3zM1482 87h4v2h-4zM625 15h4v2h-4zM964 60h2v1h-2zM290 137h2v2h-2zM1335 6h5v1h-5zM1225 22h6v1h-6zM735 8h4v2h-4zM1135 45h3v2h-3zM1242 102h4v1h-4zM891 53h4v1h-4zM1531 76h2v1h-2zM901 51h2v1h-2zM832 162h6v2h-6zM1068 83h5v2h-5zM1037 39h5v1h-5zM1070 115h5v2h-5zM893 16h3v1h-3zM809 127h2v1h-2zM1328 140h5v2h-5zM1004 118h5v2h-5zM1415 142h2v2h-2zM89 111h2v1h-2zM340 184h4v1h-4zM653 14h3v1h-3zM504 39h4v1h-4zM117 186h3v1h-3zM1214 37h6v2h-6zM1398 175h2v1h-2zM1021 101h4v1h-4zM186 174h2v1h-2zM557 169h5v2h-5zM1245 15h5v1h-5zM999 173h5v1h-5zM1196 92h3v1h-3zM1165 120h6v2h-6zM148 154h5v2h-5zM1341 136h6v1h-6zM621 146h4v2h-4zM1383 190h5v1h-5zM202 180h5v2h-5zM476 92h6v1h-6zM744 75h4v1h-4zM206 116h6v1h-6zM1290 75h2v2h-2zM316 3h6v1h-6zM880 162h5v1h-5zM616 172h3v2h-3zM1213 57h2v1h-2zM1310 142h2v2h-2zM188 166h3v2h-3zM115 29h6v1h-6zM998 194h2v1h-2zM1288 183h2v2h-2zM817 166h6v1h-6zM1057 176h4v1h-4zM203 115h4v1h-4zM784 160h6v1h-6zM990 175h2v2h-2zM998 127h6v1h-6zM64 94h3v2h-3zM1292 77h4v2h-4zM734 130h5v2h-5zM390 145h3v1h-3zM1473 68h5v1h-5zM815 76h6v2h-6zM1141 159h5v1h-5zM1043 181h3v1h-3zM196 56h3v1h-3zM1067 173h3v1h-3zM314 63h6v1h-6zM568 77h4v1h-4zM1288 21h3v1h-3zM803 84h2v1h-2zM325 183h5v2h-5zM712 86h4v1h-4zM364 44h3v1h-3zM802 92h5v2h-5zM606 24h2v1h-2zM1177 109h4v1h-4zM141 189h5v1h-5zM605 51h3v2h-3zM482 186h4v2h-4zM1400 105h6v1h-6zM1305 35h6v2h-6zM947 127h2v1h-2zM1468 79h6v1h-6zM490 88h4v2h-4zM558 92h2v2h-2zM1387 182h3v2h-3zM647 131h5v1h-5zM1502 184h2v2h-2zM712 152h3v1h-3zM1085 100h3v1h-3zM459 141h2v2h-2zM224 93h5v1h-5zM846 103h3v1h-3zM61 127h5v1h-5zM743 6h3v1h-3zM1356 153h4v2h-4zM219 44h5v1h-5zM294 54h6v1h-6zM1329 102h5v1h-5zM71 37h4v1h-4zM926 138h3v1h-3zM1254 30h3v2h-3zM1197 175h4v1h-4zM1487 103h2v1h-2zM1523 188h3v2h-3zM74 133h3v2h-3zM622 58h3v1h-3zM5 57h5v1h-5zM516 68h4v1h-4zM58 106h5v1h-5zM744 32h2v2h-2zM1277 104h4v1h-4zM1243 23h3v1h-3zM34 110h6v1h-6zM447 102h2v1h-2zM743 187h3v2h-3zM696 91h4v1h-4zM1513 110h4v2h-4zM519 27h3v1h-3zM584 2h4v1h-4zM711 54h2v1h-2zM535 94h3v1h-3zM504 84h2v1h-2zM704 95h2v1h-2zM580 82h5v2h-5zM206 123h6v1h-6zM850 144h3v2h-3zM1196 74h2v2h-2zM670 78h6v1h-6zM1446 44h4v1h-4zM161 16h3v2h-3zM112 131h5v2h-5zM1331 20h4v1h-4zM668 162h3v1h-3zM277 101h6v2h-6zM233 56h2v1h-2zM1067 150h4v2h-4zM1092 148h6v1h-6zM968 150h5v2h-5zM1090 146h4v2h-4zM59 65h4v2h-4zM1322 125h5v1h-5zM19 98h4v1h-4zM70 107h6v1h-6zM587 57h6v2h-6zM81 104h5v1h-5zM644 74h2v1h-2zM159 128h3v2h-3zM638 147h5v2h-5zM1325 103h4v1h-4zM279 116h4v1h-4zM293 92h4v2h-4zM1063 110h4v1h-4zM768 146h3v1h-3zM1066 161h4v1h-4zM726 0h4v1h-4zM1024 35h5v2h-5zM1363 155h2v1h-2zM1325 95h2v1h-2zM813 44h2v2h-2zM774 30h5v2h-5zM293 143h4v1h-4zM127 180h2v2h-2zM210 53h3v1h-3zM225 162h6v1h-6zM745 168h3v1h-3zM464 186h3v1h-3zM1151 85h6v2h-6zM891 37h2v2h-2zM914 180h5v1h-5zM1490 108h3v1h-3zM1115 113h6v1h-6zM677 46h6v1h-6zM1052 114h3v1h-3zM198 92h5v2h-5zM1269 88h2v2h-2zM1147 144h2v2h-2zM253 161h6v2h-6zM1486 129h3v1h-3zM998 138h4v1h-4zM1091 25h4v1h-4zM1416 26h3v2h-3zM680 159h2v1h-2zM80 2h3v1h-3zM560 32h6v1h-6zM199 153h6v1h-6zM1478 1h5v2h-5zM1324 7h5v1h-5zM355 94h6v2h-6zM221 19h5v1h-5zM1223 45h6v1h-6zM1440 87h5v2h-5zM660 0h2v2h-2zM284 25h2v1h-2zM343 161h3v1h-3zM181 46h5v2h-5zM42 134h3v1h-3zM460 156h2v1h-2zM675 4h6v2h-6zM254 135h2v1h-2zM317 115h3v1h-3zM63 86h5v2h-5zM414 38h4v2h-4zM741 147h6v2h-6zM1528 188h3v1h-3zM1203 56h2v1h-2zM1210 105h4v2h-4zM464 111h4v2h-4zM1030 126h2v1h-2z"/><path fill="#60ff00" d="M519 90h3v2h-3zM1090 180h5v1h-5zM612 146h5v1h-5zM864 146h3v1h-3zM446 130h6v1h-6zM1028 50h5v2h-5zM1186 82h3v1h-3zM677 158h3v1h-3zM68 150h4v1h-4zM302 139h6v1h-6zM719 61h4v1h-4zM1321 172h4v2h-4zM622 130h3v1h-3zM84 178h5v2h-5zM252 163h6v1h-6zM384 15h4v1h-4zM876 74h6v1h-6zM123 176h3v1h-3zM402 58h3v2h-3zM867 23h4v2h-4zM23 152h5v1h-5zM373 90h5v1h-5zM21 87h5v2h-5zM961 54h4v2h-4zM1220 60h2v1h-2zM1245 89h3v1h-3zM610 77h6v1h-6zM73 114h6v1h-6zM497 7h4v1h-4zM938 86h2v1h-2zM1114 84h2v1h-2zM906 142h6v2h-6zM45 181h5v1h-5zM404 111h3v1h-3zM1353 127h6v1h-6zM735 68h4v1h-4zM1200 112h5v1h-5zM234 2h4v1h-4zM208 152h6v1h-6zM809 0h3v2h-3zM538 55h2v1h-2zM940 96h3v2h-3zM841 97h5v1h-5zM806 135h4v1h-4zM389 142h2v2h-2zM400 151h4v2h-4zM765 192h6v1h-6zM85 174h4v1h-4zM449 181h6v2h-6zM823 40h3v2h-3zM155 24h2v1h-2zM1455 170h5v1h-5zM832 22h3v1h-3zM313 32h6v2h-6zM1145 22h3v1h-3zM890 59h6v2h-6zM1094 15h2v2h-2zM257 88h3v1h-3zM1490 64h3v1h-3zM904 143h5v2h-5zM625 22h4v2h-4zM1474 92h3v1h-3zM211 69h3v2h-3zM534 35h6v1h-6zM476 121h6v1h-6zM1447 67h2v2h-2zM171 78h3v2h-3zM1030 73h3v1h-3zM1311 170h6v1h-6zM1213 33h3v2h-3zM1291 83h2v1h-2zM817 58h6v1h-6zM294 157h2v1h-2zM255 194h2v2h-2zM1144 67h6v2h-6zM858 160h6v2h-6zM1249 111h3v1h-3zM910 32h5v1h-5zM75 61h2v2h-2zM220 135h6v2h-6zM466 75h5v2h-5zM887 85h2v1h-2zM146 113h5v2h-5zM990 151h2v2h-2zM405 11h5v1h-5zM137 149h2v1h-2zM455 68h4v1h-4zM834 45h4v2h-4zM387 93h6v2h-6zM172 63h4v1h-4zM1435 7h3v1h-3zM1174 93h5v1h-5zM1526 159h3v1h-3zM1274 0h6v1h-6zM595 66h6v1h-6zM422 106h3v2h-3zM445 44h5v1h-5zM835 102h3v1h-3zM174 130h5v2h-5zM145 150h3v2h-3zM696 119h6v1h-6zM20 149h2v2h-2zM352 6h6v1h-6zM296 47h4v2h-4zM1383 33h2v1h-2zM58 142h2v1h-2zM443 171h6v1h-6zM1078 80h6v2h-6zM1282 43h3v1h-3zM1253 178h6v1h-6zM1384 83h4v1h-4zM673 78h3v2h-3zM1205 191h4v1h-4zM1390 6h4v1h-4zM641 170h3v1h-3zM665 183h5v1h-5zM1472 143h3v1h-3zM82 14h6v1h-6zM377 50h3v1h-3zM908 173h4v1h-4zM581 19h3v1h-3zM1134 35h4v1h-4zM1495 27h6v2h-6zM1419 22h5v1h-5zM143 181h6v1h-6zM713 27h3v2h-3zM1471 157h4v1h-4zM980 96h4v2h-4zM1310 8h5v2h-5zM1293 155h3v2h-3zM401 42h3v1h-3zM1481 66h6v2h-6zM1461 162h6v2h-6zM1031 92h6v1h-6zM462 181h6v1h-6zM1373 131h5v1h-5zM1117 141h4v1h-4zM393 36h3v1h-3zM1421 154h3v1h-3zM1199 114h3v1h-3zM1047 64h2v2h-2zM1437 121h3v1h-3zM1505 112h2v1h-2zM648 80h3v2h-3zM1172 85h2v2h-2zM1090 61h5v2h-5zM708 60h5v1h-5zM511 102h5v1h-5zM351 159h6v1h-6zM844 99h2v1h-2zM144 23h4v1h-4zM1325 53h5v1h-5zM6 169h6v1h-6zM555 66h3v2h-3zM266 165h3v1h-3zM1249 128h6v1h-6zM1498 146h5v2h-5zM1278 145h4v1h-4zM227 17h6v1h-6zM699 61h3v1h-3zM1107 12h4v2h-4zM1468 130h3v2h-3zM470 11h2v1h-2zM1494 53h3v1h-3zM1380 81h5v1h-5zM427 25h6v1h-6zM1291 12h3v1h-3zM1073 5h3v1h-3zM1433 100h4v1h-4zM1274 104h2v2h-2zM332 147h6v2h-6zM356 17h2v2h-2zM1424 97h4v1h-4zM691 51h5v1h-5zM799 108h4v1h-4zM916 153h5v1h-5zM396 156h3v2h-3zM717 20h2v2h-2zM1300 171h3v1h-3zM379 73h2v1h-2zM225 102h6v1h-6zM409 102h3v1h-3zM1052 180h3v1h-3zM1289 14h5v1h-5zM934 110h3v1h-3zM750 30h3v1h-3zM1505 33h4v2h-4zM1052 175h6v1h-6zM208 95h3v2h-3zM617 32h5v2h-5zM48 87h3v2h-3zM736 159h3v1h-3zM1204 55h5v1h-5zM65 16h3v2h-3zM920 186h4v1h-4zM297 37h5v2h-5zM789 69h3v1h-3zM959 96h4v1h-4zM520 101h4v1h-4zM1487 125h3v2h-3zM1042 108h2v2h-2zM209 125h3v2h-3zM282 132h3v1h-3zM65 142h4v1h-4zM648 110h6v2h-6zM557 100h5v1h-5zM1037 14h3v1h-3zM1213 157h2v2h-2zM496 52h4v2h-4zM403 112h6v1h-6zM904 113h3v2h-3zM811 52h3v2h-3zM1480 23h2v1h-2zM270 114h5v1h-5zM393 24h4v1h-4zM535 166h5v1h-5zM558 70h2v1h-2zM967 177h5v1h-5zM581 38h6v2h-6zM784 182h6v1h-6zM1415 170h3v1h-3zM160 95h5v2h-5zM76 15h6v2h-6zM1326 183h2v1h-2zM664 60h6v1h-6zM370 94h2v2h-2zM1531 142h4v1h-4zM829 36h3v1h-3zM551 158h6v1h-6zM311 1h4v2h-4zM271 59h3v1h-3zM468 1h4v1h-4zM317 184h6v2h-6zM718 77h6v1h-6zM1509 186h2v1h-2zM1055 83h5v1h-5zM554 82h2v2h-2zM1011 123h2v2h-2zM951 172h6v2h-6zM684 29h6v1h-6zM178 106h4v1h-4zM209 71h3v2h-3zM1200 178h5v2h-5zM1466 52h3v1h-3zM862 177h6v2h-6zM745 18h5v1h-5zM521 158h5v1h-5zM306 147h2v1h-2zM1381 1h8v1h-8zM1420 6h9v1h-9zM258 176h2v2h-2z"/><path fill="#80ff00" d="M940 70h2v2h-2zM7 140h2v1h-2zM543 134h6v1h-6zM683 47h4v1h-4zM670 96h3v1h-3zM1190 137h5v2h-5zM714 10h4v1h-4zM152 95h5v2h-5zM749 112h6v1h-6zM873 165h6v1h-6zM884 105h2v1h-2zM241 194h2v1h-2zM154 43h5v1h-5zM600 183h3v1h-3zM457 121h3v1h-3zM1043 23h4v2h-4zM1372 17h4v2h-4zM449 69h3v2h-3zM1347 149h2v1h-2zM1086 1h5v1h-5zM1362 36h6v1h-6zM513 30h5v1h-5zM1042 39h5v1h-5zM1104 189h4v1h-4zM89 27h5v1h-5zM242 76h6v2h-6zM49 156h5v1h-5zM455 113h4v2h-4zM301 21h4v2h-4zM1016 95h6v1h-6zM554 61h5v1h-5zM853 57h6v2h-6zM174 131h6v1h-6zM1329 140h2v2h-2zM1525 184h2v1h-2zM1278 100h3v1h-3zM1521 51h2v2h-2zM905 64h4v1h-4zM353 156h2v1h-2zM484 85h5v1h-5zM592 16h4v1h-4zM876 135h3v2h-3zM497 123h4v1h-4zM898 20h3v1h-3zM425 65h2v1h-2zM1129 33h2v1h-2zM240 36h2v1h-2zM509 189h4v2h-4zM492 156h5v1h-5zM1487 50h2v1h-2zM8 155h4v2h-4zM1028 116h2v1h-2zM1148 120h4v2h-4zM1096 100h4v2h-4zM1320 89h6v1h-6zM1020 133h4v1h-4zM1229 194h3v1h-3zM366 94h4v1h-4zM1284 23h5v1h-5zM1308 33h3v2h-3zM340 19h2v1h-2zM392 76h5v2h-5zM211 18h5v1h-5zM22 184h3v1h-3zM1227 180h3v1h-3zM1403 83h3v1h-3zM1421 167h6v1h-6zM417 58h4v1h-4zM52 131h2v1h-2zM379 145h2v2h-2zM752 179h3v2h-3zM1247 118h3v1h-3zM1199 17h2v1h-2zM1002 89h3v1h-3zM1151 151h2v1h-2zM490 129h3v1h-3zM1454 116h4v2h-4zM542 25h6v2h-6zM580 79h3v2h-3zM250 189h3v2h-3zM480 13h4v1h-4zM1104 101h4v2h-4zM1308 61h2v1h-2zM1269 69h3v1h-3zM554 179h2v1h-2zM91 114h6v2h-6zM1243 10h5v1h-5zM434 147h2v1h-2zM1197 7h4v1h-4zM173 99h6v1h-6zM813 64h5v1h-5zM171 186h6v1h-6zM182 127h5v1h-5zM864 156h6v1h-6zM1086 169h6v1h-6zM321 47h5v1h-5zM660 28h2v2h-2zM1369 20h3v1h-3zM1443 104h2v2h-2zM1102 45h5v2h-5zM1204 169h4v2h-4zM178 117h5v1h-5zM854 18h3v1h-3zM1145 144h5v1h-5zM92 110h2v1h-2zM934 121h6v2h-6zM651 20h5v1h-5zM1046 94h6v1h-6zM1450 147h4v1h-4zM305 3h6v1h-6zM723 18h4v1h-4zM757 48h6v1h-6zM1269 120h5v1h-5zM1186 111h2v1h-2zM349 47h4v1h-4zM1251 64h4v1h-4zM283 74h4v1h-4zM342 190h2v1h-2zM464 84h3v1h-3zM712 39h3v1h-3zM927 66h4v1h-4zM1265 59h3v1h-3zM1287 108h2v1h-2zM908 31h4v1h-4zM643 112h5v1h-5zM1454 120h3v1h-3zM911 37h3v1h-3zM1330 146h2v1h-2zM178 6h4v1h-4zM512 99h6v2h-6zM103 160h2v1h-2zM1063 1h6v1h-6zM1166 67h4v1h-4zM1488 98h6v1h-6zM647 53h2v1h-2zM412 189h4v2h-4zM1216 72h2v1h-2zM305 22h4v1h-4zM490 191h6v1h-6zM1492 164h6v1h-6zM575 130h6v1h-6zM953 168h3v2h-3zM1083 95h5v1h-5zM1084 130h5v2h-5zM296 95h2v1h-2zM1389 112h5v2h-5zM501 164h2v2h-2zM1305 154h6v2h-6zM942 8h6v2h-6zM1383 86h2v1h-2zM928 71h2v1h-2zM850 156h3v1h-3zM771 6h4v1h-4zM248 150h3v1h-3zM684 165h2v2h-2zM472 64h2v1h-2zM429 28h2v2h-2zM851 154h2v1h-2zM371 12h2v2h-2zM765 47h5v1h-5zM423 164h2v1h-2zM177 130h4v2h-4zM732 166h5v1h-5zM577 178h4v1h-4zM1013 102h5v1h-5zM601 36h4v2h-4zM731 79h4v1h-4zM240 145h3v1h-3zM518 26h3v1h-3zM389 6h2v1h-2zM422 110h5v1h-5zM711 194h4v1h-4zM38 187h5v1h-5zM45 117h6v1h-6zM1185 157h3v1h-3zM1236 44h4v1h-4zM424 64h6v1h-6zM579 31h2v1h-2zM475 29h5v1h-5zM1445 151h6v1h-6zM687 127h6v1h-6zM142 39h4v1h-4zM363 25h4v1h-4zM320 166h6v1h-6zM439 95h3v1h-3zM467 194h5v1h-5zM768 93h6v2h-6zM65 107h4v2h-4zM806 33h5v1h-5zM1421 69h2v1h-2zM645 14h2v1h-2zM622 33h5v1h-5zM560 25h6v2h-6zM676 55h4v1h-4zM517 174h4v1h-4zM846 83h3v1h-3zM69 42h4v2h-4zM120 161h5v1h-5zM1005 91h4v2h-4zM155 50h4v1h-4zM47 94h6v1h-6zM853 160h2v2h-2zM1330 4h2v1h-2zM544 177h5v2h-5zM1326 194h6v2h-6zM278 142h2v1h-2zM1047 77h5v1h-5zM441 3h5v1h-5zM461 188h3v1h-3zM171 1h4v1h-4zM1217 5h2v1h-2zM555 147h5v2h-5zM1431 73h2v2h-2zM686 100h5v1h-5zM110 9h5v1h-5zM1199 99h5v2h-5zM1390 1h5v1h-5zM21 23h6v1h-6zM149 79h2v1h-2zM1289 188h5v2h-5zM632 108h3v1h-3zM1493 122h4v2h-4zM845 114h8v1h-8zM1380 45h9v1h-9zM1151 63h2v2h-2z"/><path fill="#30ff30" d="M1318 194h4v2h-4zM1476 52h2v1h-2zM73 144h4v2h-4zM97 49h6v1h-6zM30 56h6v1h-6zM476 182h2v1h-2zM12 74h6v1h-6zM177 136h4v1h-4zM1002 31h4v2h-4zM377 48h4v1h-4zM333 103h6v1h-6zM1292 145h6v1h-6zM1154 22h5v2h-5zM537 108h4v2h-4zM788 32h3v1h-3zM210 180h5v1h-5zM70 119h2v2h-2zM993 111h3v2h-3zM1454 126h5v2h-5zM879 94h3v1h-3zM342 189h2v1h-2zM186 34h2v2h-2zM1290 148h2v1h-2zM720 147h5v1h-5zM349 63h6v1h-6zM11 171h5v1h-5zM1336 17h4v1h-4zM1194 153h4v1h-4zM1520 14h6v2h-6zM1189 180h6v1h-6zM1523 58h2v1h-2zM328 88h5v1h-5zM351 96h5v2h-5zM313 194h4v1h-4zM136 1h3v1h-3zM1051 23h4v2h-4zM1414 183h4v1h-4zM1059 167h6v1h-6zM845 176h4v1h-4zM649 138h5v1h-5zM596 98h3v2h-3zM1019 70h4v1h-4zM1047 93h6v2h-6zM1417 183h5v1h-5zM1324 20h5v1h-5zM912 118h5v1h-5zM508 99h2v1h-2zM382 97h6v1h-6zM700 186h3v1h-3zM229 47h4v2h-4zM513 115h3v1h-3zM1213 152h5v1h-5zM995 33h6v1h-6zM1536 108h6v2h-6zM489 105h2v1h-2zM1035 190h3v1h-3zM909 111h6v1h-6zM632 76h3v1h-3zM288 113h6v1h-6zM1266 47h4v1h-4zM1369 156h4v1h-4zM791 84h4v1h-4zM1189 6h6v1h-6zM249 147h2v2h-2zM606 98h4v1h-4zM314 159h6v1h-6zM968 35h4v2h-4zM1381 4h3v2h-3zM1321 93h5v1h-5zM1403 81h3v1h-3zM428 132h5v1h-5zM42 22h2v1h-2zM961 118h3v1h-3zM375 90h2v1h-2zM1000 177h6v1h-6zM498 130h2v1h-2zM800 116h6v2h-6zM54 80h4v1h-4zM99 31h3v1h-3zM1072 44h2v1h-2zM1288 14h4v2h-4zM361 7h5v1h-5zM623 124h3v1h-3zM410 113h3v1h-3zM128 67h5v2h-5zM1083 121h4v1h-4zM1002 37h4v2h-4zM349 153h2v1h-2zM307 16h2v2h-2zM254 92h3v1h-3zM179 62h6v2h-6zM1034 2h5v1h-5zM1475 59h2v1h-2zM1132 92h5v1h-5zM648 19h6v1h-6zM1264 153h6v1h-6zM449 191h4v1h-4zM1156 177h5v1h-5zM190 62h6v1h-6zM1402 140h4v1h-4zM1323 163h4v1h-4zM1407 8h6v2h-6zM564 188h3v1h-3zM980 19h3v1h-3zM113 179h2v1h-2zM155 187h4v1h-4zM1307 186h4v2h-4zM969 173h5v2h-5zM1372 73h3v2h-3zM1300 92h3v2h-3zM586 169h4v1h-4zM883 139h4v1h-4zM1171 146h4v2h-4zM1196 26h4v1h-4zM933 111h4v1h-4zM1451 134h6v2h-6zM590 159h3v1h-3zM590 167h5v2h-5zM184 81h3v1h-3zM1383 120h4v2h-4zM566 141h6v1h-6zM1511 35h6v1h-6zM191 72h4v2h-4zM1067 131h4v2h-4zM918 178h2v2h-2zM959 167h3v1h-3zM372 23h6v1h-6zM1528 12h6v1h-6zM1423 144h4v1h-4zM141 185h3v2h-3zM479 52h4v1h-4zM1096 86h5v1h-5zM1521 5h5v1h-5zM513 61h2v2h-2zM1168 191h2v1h-2zM666 129h4v2h-4zM65 139h3v2h-3zM24 58h2v2h-2zM1076 118h5v1h-5zM677 94h6v1h-6zM323 88h5v1h-5zM807 39h3v1h-3zM670 119h5v1h-5zM1305 39h3v2h-3zM572 185h2v1h-2zM56 193h5v2h-5zM673 135h4v1h-4zM243 49h3v1h-3zM462 113h2v1h-2zM995 96h6v2h-6zM189 4h2v1h-2zM446 106h4v2h-4zM1329 25h2v2h-2zM474 63h6v1h-6zM948 49h5v1h-5zM1379 100h5v1h-5zM126 52h2v1h-2zM1534 114h2v2h-2zM634 22h3v1h-3zM1200 150h3v1h-3zM469 125h5v1h-5zM1288 149h6v1h-6zM955 16h6v2h-6zM157 187h6v2h-6zM1029 0h3v1h-3zM836 145h6v2h-6zM380 132h4v1h-4zM29 69h2v1h-2zM251 0h6v2h-6zM62 31h6v1h-6zM1383 46h6v1h-6zM434 173h6v1h-6zM557 32h2v1h-2zM1224 77h6v1h-6zM1327 65h4v1h-4zM666 1h5v1h-5zM1016 78h6v1h-6zM443 114h4v2h-4zM985 4h2v1h-2zM1158 119h3v2h-3zM1018 146h3v1h-3zM680 137h6v1h-6zM191 20h4v1h-4zM917 167h6v1h-6zM882 178h2v1h-2zM753 9h3v1h-3zM353 50h4v1h-4zM1024 59h6v1h-6zM422 30h3v2h-3zM897 85h2v1h-2zM457 160h5v1h-5zM195 134h5v2h-5zM854 152h5v1h-5zM414 1h6v1h-6zM498 29h5v1h-5zM392 178h5v1h-5zM906 107h3v2h-3zM29 64h6v1h-6zM513 52h4v1h-4zM1037 191h3v1h-3zM209 186h6v1h-6zM278 77h3v2h-3zM499 61h4v1h-4zM815 155h2v2h-2zM1290 143h6v1h-6zM1415 143h6v2h-6zM699 73h2v1h-2zM1201 64h6v2h-6zM529 104h6v1h-6zM354 25h6v1h-6zM499 80h3v1h-3zM1041 105h5v1h-5zM1055 156h5v1h-5zM1489 171h2v1h-2zM1163 88h4v1h-4zM1179 136h2v1h-2zM3 132h6v2h-6zM1024 128h3v2h-3zM353 145h2v1h-2zM350 144h5v1h-5zM704 44h4v2h-4zM563 52h2v1h-2zM370 150h6v1h-6zM576 186h6v1h-6zM253 101h3v1h-3z"/><path fill="#40ff00" d="M1343 155h5v1h-5zM1459 173h6v1h-6zM1064 191h3v1h-3zM1411 101h6v1h-6zM388 126h3v2h-3zM1188 98h6v1h-6zM1167 49h4v1h-4zM1043 103h6v1h-6zM555 52h2v1h-2zM495 91h4v2h-4zM682 102h2v1h-2zM436 169h6v2h-6zM648 86h5v1h-5zM1480 158h2v2h-2zM1311 173h5v1h-5zM89 60h4v1h-4zM1047 65h3v1h-3zM1257 90h4v2h-4zM504 154h2v2h-2zM745 8h2v1h-2zM52 143h3v1h-3zM974 162h4v1h-4zM1330 165h3v1h-3zM14 121h4v1h-4zM961 31h6v2h-6zM498 6h2v1h-2zM965 57h4v1h-4zM774 90h3v1h-3zM1075 186h2v1h-2zM99 28h5v1h-5zM179 158h2v1h-2zM1015 82h6v2h-6zM878 36h6v1h-6zM986 166h4v1h-4zM557 109h5v1h-5zM1081 96h4v1h-4zM1531 45h5v1h-5zM756 131h3v2h-3zM308 138h4v2h-4zM216 104h3v1h-3zM515 132h3v2h-3zM423 67h4v1h-4zM1363 174h4v1h-4zM469 33h3v2h-3zM484 136h5v2h-5zM1008 177h3v1h-3zM447 89h5v1h-5zM893 25h4v1h-4zM1142 45h4v1h-4zM1114 116h6v1h-6zM145 61h3v1h-3zM416 138h4v1h-4zM369 24h2v1h-2zM169 145h2v2h-2zM519 25h3v2h-3zM1218 122h5v2h-5zM1275 77h5v2h-5zM753 4h5v1h-5zM602 2h3v1h-3zM560 4h2v2h-2zM934 117h4v1h-4zM1413 130h5v1h-5zM1428 103h4v1h-4zM981 80h3v1h-3zM186 115h2v2h-2zM976 177h5v1h-5zM1049 105h6v1h-6zM1379 182h6v2h-6zM1012 64h5v2h-5zM1112 184h2v1h-2zM1238 116h4v1h-4zM545 168h3v2h-3zM1368 136h4v1h-4zM877 184h5v1h-5zM1077 58h5v2h-5zM144 51h2v1h-2zM720 122h2v1h-2zM703 171h6v2h-6zM800 173h2v2h-2zM368 25h4v1h-4zM1048 110h3v2h-3zM1212 89h4v1h-4zM20 137h4v1h-4zM327 73h4v1h-4zM382 65h2v2h-2zM1123 137h2v1h-2zM115 142h5v2h-5zM527 52h5v1h-5zM962 48h2v1h-2zM1338 12h5v1h-5zM655 15h3v1h-3zM208 82h3v1h-3zM79 26h4v1h-4zM1117 69h2v1h-2zM37 21h3v1h-3zM141 159h4v1h-4zM486 75h4v2h-4zM47 82h6v2h-6zM478 19h2v2h-2zM596 123h4v2h-4zM162 116h4v1h-4zM298 125h6v1h-6zM289 107h2v1h-2zM607 72h3v1h-3zM1257 164h3v1h-3zM1098 171h4v1h-4zM384 25h4v1h-4zM1345 146h6v2h-6zM1536 132h5v1h-5zM842 128h3v2h-3zM1401 141h6v1h-6zM236 112h5v1h-5zM1453 113h2v2h-2zM977 114h3v1h-3zM1210 66h4v1h-4zM1503 9h2v1h-2zM816 174h5v2h-5zM1217 147h5v1h-5zM609 37h6v2h-6zM757 193h3v1h-3zM781 180h2v2h-2zM51 122h2v1h-2zM722 183h4v1h-4zM792 169h3v2h-3zM170 73h3v2h-3zM894 170h4v1h-4zM907 46h6v1h-6zM1521 57h3v1h-3zM1340 5h2v1h-2zM230 150h3v1h-3zM774 147h6v1h-6zM635 139h2v1h-2zM650 60h3v1h-3zM661 121h3v2h-3zM400 84h4v2h-4zM470 83h6v1h-6zM1429 150h5v1h-5zM399 116h3v1h-3zM240 18h6v1h-6zM1525 160h5v2h-5zM284 184h2v1h-2zM1234 61h3v2h-3zM235 90h4v2h-4zM526 104h5v2h-5zM243 71h3v1h-3zM56 44h5v1h-5zM1103 52h6v2h-6zM1189 82h2v2h-2zM1528 92h3v1h-3zM737 3h5v1h-5zM786 126h4v1h-4zM422 194h6v2h-6zM690 42h2v1h-2zM518 16h2v2h-2zM429 188h3v1h-3zM994 124h2v1h-2zM129 64h4v1h-4zM989 168h4v1h-4zM1059 41h2v2h-2zM989 76h4v2h-4zM639 31h6v1h-6zM1093 16h2v1h-2zM464 183h5v1h-5zM195 121h2v1h-2zM997 142h2v1h-2zM338 119h5v2h-5zM577 0h3v1h-3zM883 8h6v1h-6zM1060 44h3v2h-3zM104 7h5v2h-5zM994 129h4v1h-4zM1519 6h2v1h-2zM578 125h5v2h-5zM888 96h4v2h-4zM1172 157h4v1h-4zM1085 170h3v1h-3zM1092 179h3v1h-3zM353 0h4v1h-4zM1073 172h3v1h-3zM249 18h2v2h-2zM1446 115h6v1h-6zM1231 187h2v2h-2zM667 99h3v1h-3zM1018 40h4v1h-4zM355 81h2v1h-2zM885 192h6v2h-6zM392 186h3v1h-3zM277 64h6v1h-6zM1424 63h3v2h-3zM1054 105h6v1h-6zM289 45h3v1h-3zM1468 187h5v2h-5zM410 61h5v2h-5zM72 46h2v1h-2zM1126 112h2v2h-2zM572 155h5v1h-5zM870 38h4v1h-4zM1429 186h6v1h-6zM1488 186h4v2h-4zM982 87h5v1h-5zM422 156h3v1h-3zM454 147h6v1h-6zM255 95h2v2h-2zM489 36h6v1h-6zM1308 38h4v1h-4zM998 11h5v1h-5zM1008 165h5v2h-5zM334 110h5v1h-5zM370 87h5v1h-5zM596 192h4v1h-4zM395 193h4v1h-4zM814 117h6v1h-6zM883 50h2v2h-2zM827 147h3v1h-3zM1509 53h3v1h-3zM864 126h2v2h-2zM1284 84h2v1h-2zM1358 128h2v2h-2zM695 150h3v2h-3zM524 89h2v1h-2zM1214 122h2v1h-2zM609 56h4v2h-4zM1536 100h4v1h-4zM75 183h6v1h-6zM248 41h6v1h-6zM4 59h5v1h-5zM698 30h4v1h-4zM1245 135h2v1h-2zM1289 76h2v1h-2zM1018 56h6v2h-6zM27 172h6v2h-6zM1476 193h2v1h-2zM766 128h5v1h-5z"/><path fill="#00ff40" d="M1265 84h6v1h-6zM490 19h6v1h-6zM633 0h6v1h-6zM424 8h2v2h-2zM1383 116h5v2h-5zM135 43h5v1h-5zM365 8h2v1h-2zM1385 150h6v1h-6zM272 59h3v2h-3zM1539 102h2v1h-2zM663 193h3v1h-3zM1136 141h3v2h-3zM1048 9h3v1h-3zM947 56h6v1h-6zM1466 143h3v2h-3zM1482 41h5v1h-5zM1192 37h4v1h-4zM584 165h4v1h-4zM567 141h4v1h-4zM1154 56h2v1h-2zM1340 43h4v2h-4zM790 134h5v1h-5zM751 18h3v1h-3zM507 55h3v2h-3zM1313 62h6v2h-6zM221 184h4v2h-4zM880 168h2v1h-2zM893 119h5v2h-5zM113 147h3v1h-3zM1344 6h6v2h-6zM1253 108h6v2h-6zM556 135h3v1h-3zM315 46h6v1h-6zM1529 135h5v1h-5zM1083 3h4v1h-4zM1215 92h2v1h-2zM344 156h4v1h-4zM838 82h3v1h-3zM310 108h6v1h-6zM64 192h5v1h-5zM998 65h3v1h-3zM898 93h3v1h-3zM1267 9h3v1h-3zM638 168h5v2h-5zM246 114h3v2h-3zM618 9h2v2h-2zM309 71h6v2h-6zM1453 168h2v1h-2zM261 23h2v2h-2zM1344 122h3v1h-3zM394 50h5v2h-5zM1189 44h4v1h-4zM1423 175h2v1h-2zM1334 12h5v1h-5zM915 109h2v1h-2zM839 21h5v1h-5zM953 74h2v1h-2zM580 192h5v1h-5zM1150 164h3v1h-3zM1482 181h4v1h-4zM634 19h5v1h-5zM1272 145h4v2h-4zM1295 190h5v1h-5zM769 86h3v2h-3zM576 161h2v2h-2zM348 14h6v1h-6zM486 90h2v1h-2zM1138 176h5v1h-5zM983 105h2v1h-2zM1451 113h3v1h-3zM1288 192h4v1h-4zM837 91h2v1h-2zM1333 164h6v2h-6zM105 100h2v1h-2zM1492 176h5v1h-5zM1385 65h5v1h-5zM164 53h4v1h-4zM803 130h3v1h-3zM316 169h2v1h-2zM334 9h5v1h-5zM311 116h3v1h-3zM49 45h5v2h-5zM1091 145h3v1h-3zM671 151h6v1h-6zM279 177h3v1h-3zM564 134h2v2h-2zM1084 111h3v1h-3zM569 161h6v2h-6zM267 44h3v1h-3zM85 21h3v1h-3zM1218 186h4v2h-4zM1103 58h2v1h-2zM704 192h6v1h-6zM485 184h2v2h-2zM790 115h5v2h-5zM644 180h6v1h-6zM1200 185h6v1h-6zM1053 8h2v2h-2zM1235 7h6v1h-6zM885 2h6v1h-6zM1461 77h6v1h-6zM142 1h3v2h-3zM1205 137h3v2h-3zM1043 36h5v1h-5zM983 139h5v2h-5zM549 111h4v1h-4zM678 70h6v1h-6zM538 136h5v1h-5zM337 111h2v2h-2zM191 5h3v1h-3zM551 50h2v1h-2zM501 104h5v1h-5zM277 38h2v1h-2zM1525 176h4v2h-4zM1124 166h2v1h-2zM760 184h3v1h-3zM1007 71h3v2h-3zM1244 194h5v2h-5zM1320 57h4v1h-4zM340 156h2v2h-2zM641 120h2v2h-2zM250 24h5v1h-5zM483 7h3v1h-3zM1500 22h4v2h-4zM121 193h2v2h-2zM1460 68h3v2h-3zM1396 168h2v1h-2zM67 75h2v2h-2zM553 193h3v1h-3zM564 4h6v1h-6zM808 171h3v1h-3zM157 50h5v1h-5zM881 59h2v1h-2zM1226 77h5v2h-5zM568 29h6v2h-6zM248 5h3v1h-3zM1014 80h6v2h-6zM207 79h3v2h-3zM1127 58h2v2h-2zM1446 56h4v2h-4zM879 24h4v1h-4zM978 123h5v2h-5zM891 55h5v1h-5zM1343 77h3v2h-3zM281 0h5v1h-5zM1329 29h2v1h-2zM1506 3h5v2h-5zM588 184h6v2h-6zM122 11h4v2h-4zM1174 70h3v2h-3zM945 169h6v1h-6zM1454 104h6v1h-6zM433 149h4v2h-4zM1233 126h3v1h-3zM1329 44h4v2h-4zM1098 24h2v1h-2zM859 44h4v1h-4zM1104 57h4v1h-4zM667 49h6v2h-6zM502 128h6v1h-6zM322 170h3v1h-3zM959 122h6v1h-6zM1401 42h3v2h-3zM1428 16h4v1h-4zM240 34h6v2h-6zM1179 78h2v2h-2zM681 23h5v1h-5zM1214 182h5v2h-5zM672 113h3v2h-3zM1305 127h3v1h-3zM1505 56h5v1h-5zM507 98h5v2h-5zM103 141h5v1h-5zM686 59h3v1h-3zM321 162h6v1h-6zM961 52h6v1h-6zM528 24h4v2h-4zM989 116h6v1h-6zM37 165h4v1h-4zM180 94h2v2h-2zM279 127h3v1h-3zM289 182h2v1h-2zM345 25h3v1h-3zM416 87h6v1h-6zM1017 64h2v1h-2zM202 105h2v1h-2zM142 59h3v1h-3zM881 33h5v2h-5zM269 30h2v1h-2zM180 47h2v1h-2zM952 131h4v2h-4zM511 101h5v1h-5zM1509 39h2v1h-2zM1272 165h3v2h-3zM373 139h5v1h-5zM1306 78h2v1h-2zM131 97h6v1h-6zM1007 86h3v2h-3zM1203 32h4v2h-4zM277 107h4v1h-4zM224 194h2v1h-2zM1004 11h4v1h-4zM62 135h6v2h-6zM887 122h2v1h-2zM1099 101h6v1h-6zM136 102h3v1h-3zM816 138h5v2h-5zM717 157h3v2h-3zM1398 84h3v1h-3zM836 187h3v2h-3zM397 84h6v1h-6zM115 136h6v2h-6zM38 75h2v1h-2zM110 178h4v1h-4zM838 32h5v2h-5zM922 93h2v1h-2zM725 40h5v1h-5zM1099 118h6v1h-6zM1216 141h2v2h-2zM428 50h5v2h-5zM601 120h4v2h-4zM1233 11h3v1h-3zM819 78h2v1h-2zM963 22h4v1h-4zM541 81h5v1h-5z"/><path fill="#e9ff00" d="M327 0h2v1h-2zM331 4h5v1h-5zM323 11h8v1h-8zM330 56h4v1h-4zM324 73h4v1h-4zM309 79h7v1h-7zM330 85h8v1h-8zM331 124h8v1h-8zM856 20h9v1h-9zM869 47h3v1h-3zM866 83h5v1h-5zM865 94h3v1h-3zM847 110h4v1h-4zM868 192h3v1h-3zM1384 17h4v1h-4zM1388 122h5v1h-5zM1402 137h4v1h-4zM84 188h3v3h-3zM577 88h4v2h-4zM1324 128h3v2h-3zM1326 140h4v2h-4zM1324 148h3v2h-3z"/><path fill="#e6ff00" d="M331 0h5v1h-5zM323 6h3v1h-3zM309 17h9v1h-9zM322 62h6v1h-6zM320 173h8v1h-8zM330 184h7v1h-7zM861 32h7v1h-7zM854 105h2v1h-2zM863 164h7v1h-7zM1392 46h2v1h-2zM1387 79h6v1h-6zM1408 103h5v1h-5zM1377 104h8v1h-8zM1388 105h9v1h-9zM1385 113h7v1h-7zM1402 191h6v1h-6zM577 10h4v2h-4zM577 82h4v2h-4zM577 142h4v2h-4zM590 115h3v6h-3zM834 50h3v2h-3zM834 78h4v2h-4zM834 162h3v2h-3zM1324 108h3v2h-3z"/><path fill="#cbff00" d="M331 0h9v1h-9zM335 6h2v1h-2zM318 23h7v1h-7zM332 68h3v1h-3zM320 144h3v1h-3zM328 176h8v1h-8zM857 58h6v1h-6zM861 58h6v1h-6zM870 128h5v1h-5zM1381 9h6v1h-6zM1405 40h6v1h-6zM1377 65h7v1h-7zM1373 96h8v1h-8zM1407 101h5v1h-5zM1396 106h5v1h-5zM1380 150h6v1h-6zM1403 160h3v1h-3zM1410 176h4v1h-4zM98 183h3v3h-3zM984 6h3v5h-3zM984 104h3v4h-3zM1324 38h3v2h-3zM1324 40h3v2h-3zM1324 62h3v2h-3z"/><path fill="#ffff00" d="M325 0h2v1h-2zM320 1h2v1h-2zM324 2h3v1h-3zM328 2h8v1h-8zM322 3h6v1h-6zM326 4h3v1h-3zM331 5h2v1h-2zM331 7h5v1h-5zM324 8h3v1h-3zM330 8h3v1h-3zM326 9h9v1h-9zM327 9h2v1h-2zM326 11h2v1h-2zM323 12h9v1h-9zM329 14h6v1h-6zM323 15h9v1h-9zM328 15h3v1h-3zM326 16h2v1h-2zM319 17h4v1h-4zM327 17h5v1h-5zM330 18h9v1h-9zM319 18h4v1h-4zM330 18h4v1h-4zM326 18h5v1h-5zM329 20h2v1h-2zM321 20h5v1h-5zM327 20h4v1h-4zM325 21h2v1h-2zM329 21h4v1h-4zM323 22h6v1h-6zM324 23h3v1h-3zM319 23h6v1h-6zM324 24h8v1h-8zM318 24h7v1h-7zM327 25h2v1h-2zM323 25h4v1h-4zM329 25h4v1h-4zM329 26h4v1h-4zM327 26h4v1h-4zM321 27h9v1h-9zM322 27h9v1h-9zM324 27h3v1h-3zM323 28h3v1h-3zM319 28h8v1h-8zM331 29h5v1h-5zM326 30h6v1h-6zM320 31h9v1h-9zM330 32h3v1h-3zM330 32h9v1h-9zM319 33h6v1h-6zM319 33h8v1h-8zM329 34h6v1h-6zM327 35h2v1h-2zM326 36h8v1h-8zM316 37h3v1h-3zM327 38h3v1h-3zM326 39h9v1h-9zM327 41h3v1h-3zM326 41h3v1h-3zM328 41h4v1h-4zM320 42h5v1h-5zM327 43h9v1h-9zM318 43h6v1h-6zM325 45h4v1h-4zM315 45h9v1h-9zM324 45h2v1h-2zM326 46h7v1h-7zM328 47h4v1h-4zM326 47h5v1h-5zM329 49h3v1h-3zM319 49h5v1h-5zM329 49h2v1h-2zM320 50h9v1h-9zM323 50h6v1h-6zM318 51h2v1h-2zM328 51h3v1h-3zM321 51h6v1h-6zM321 51h4v1h-4zM330 52h3v1h-3zM329 52h7v1h-7zM324 52h8v1h-8zM328 53h6v1h-6zM325 53h2v1h-2zM315 54h8v1h-8zM320 54h7v1h-7zM326 55h7v1h-7zM328 55h2v1h-2zM325 55h7v1h-7zM326 55h9v1h-9zM324 56h3v1h-3zM330 56h2v1h-2zM324 57h7v1h-7zM328 57h3v1h-3zM327 57h3v1h-3zM325 57h7v1h-7zM324 58h2v1h-2zM329 59h7v1h-7zM324 59h4v1h-4zM331 60h2v1h-2zM322 61h8v1h-8zM329 61h5v1h-5zM319 62h8v1h-8zM326 62h5v1h-5zM328 62h2v1h-2zM331 63h2v1h-2zM317 63h5v1h-5zM319 65h8v1h-8zM325 66h5v1h-5zM319 66h2v1h-2zM314 66h6v1h-6zM321 67h4v1h-4zM327 67h5v1h-5zM327 67h4v1h-4zM327 68h5v1h-5zM324 69h4v1h-4zM321 71h9v1h-9zM326 72h8v1h-8zM324 72h9v1h-9zM326 73h4v1h-4zM326 73h6v1h-6zM316 73h8v1h-8zM325 74h3v1h-3zM322 75h8v1h-8zM325 77h2v1h-2zM322 77h7v1h-7zM329 78h4v1h-4zM322 78h6v1h-6zM329 79h2v1h-2zM326 79h3v1h-3zM322 82h7v1h-7zM321 83h8v1h-8zM324 83h4v1h-4zM329 84h3v1h-3zM322 84h5v1h-5zM328 85h7v1h-7zM330 85h3v1h-3zM327 85h3v1h-3zM324 86h4v1h-4zM322 88h5v1h-5zM334 89h2v1h-2zM329 89h6v1h-6zM324 89h7v1h-7zM326 90h5v1h-5zM323 90h6v1h-6zM325 91h8v1h-8zM330 91h6v1h-6zM320 92h3v1h-3zM326 92h4v1h-4zM319 94h5v1h-5zM326 94h4v1h-4zM325 95h2v1h-2zM324 95h7v1h-7zM320 95h6v1h-6zM321 96h7v1h-7zM326 96h8v1h-8zM327 96h3v1h-3zM323 97h7v1h-7zM326 97h3v1h-3zM323 97h6v1h-6zM323 99h6v1h-6zM327 101h7v1h-7zM329 103h4v1h-4zM326 104h7v1h-7zM328 104h9v1h-9zM326 104h9v1h-9zM329 105h3v1h-3zM323 105h2v1h-2zM324 105h5v1h-5zM327 106h8v1h-8zM325 106h4v1h-4zM322 106h7v1h-7zM320 106h9v1h-9zM324 108h5v1h-5zM329 108h7v1h-7zM324 109h6v1h-6zM327 109h9v1h-9zM324 111h8v1h-8zM325 112h4v1h-4zM331 112h4v1h-4zM328 113h4v1h-4zM319 113h6v1h-6zM328 113h4v1h-4zM332 114h2v1h-2zM325 114h7v1h-7zM322 114h8v1h-8zM315 115h7v1h-7zM326 115h9v1h-9zM323 116h5v1h-5zM322 116h8v1h-8zM325 116h9v1h-9zM319 117h9v1h-9zM319 117h2v1h-2zM321 117h3v1h-3zM326 118h9v1h-9zM328 119h5v1h-5zM324 120h2v1h-2zM323 121h7v1h-7zM327 121h9v1h-9zM326 122h3v1h-3zM320 122h9v1h-9zM326 123h8v1h-8zM319 124h6v1h-6zM321 125h5v1h-5zM323 125h4v1h-4zM330 126h4v1h-4zM324 127h9v1h-9zM329 127h9v1h-9zM327 128h9v1h-9zM329 128h3v1h-3zM327 129h7v1h-7zM327 129h6v1h-6zM323 130h4v1h-4zM331 131h5v1h-5zM329 131h9v1h-9zM331 132h9v1h-9zM324 133h5v1h-5zM327 133h2v1h-2zM322 133h8v1h-8zM321 134h7v1h-7zM327 135h3v1h-3zM327 135h9v1h-9zM328 136h4v1h-4zM318 136h4v1h-4zM332 136h3v1h-3zM332 137h4v1h-4zM325 137h4v1h-4zM326 138h3v1h-3zM328 138h7v1h-7zM319 138h9v1h-9zM328 139h6v1h-6zM329 139h2v1h-2zM319 140h4v1h-4zM321 140h5v1h-5zM320 141h5v1h-5zM329 142h5v1h-5zM319 143h5v1h-5zM319 144h9v1h-9zM325 145h9v1h-9zM321 145h6v1h-6zM325 146h6v1h-6zM325 147h6v1h-6zM328 148h8v1h-8zM320 149h5v1h-5zM322 149h7v1h-7zM324 150h5v1h-5zM328 150h2v1h-2zM320 151h3v1h-3zM320 151h8v1h-8zM320 151h5v1h-5zM331 152h2v1h-2zM328 152h9v1h-9zM325 153h9v1h-9zM323 153h6v1h-6zM316 154h9v1h-9zM330 154h2v1h-2zM326 155h3v1h-3zM320 155h9v1h-9zM320 155h2v1h-2zM319 156h4v1h-4zM324 156h4v1h-4zM327 157h7v1h-7zM329 158h5v1h-5zM328 158h3v1h-3zM322 159h4v1h-4zM328 159h6v1h-6zM322 160h5v1h-5zM320 161h4v1h-4zM317 161h4v1h-4zM318 162h7v1h-7zM325 164h9v1h-9zM328 164h8v1h-8zM326 165h5v1h-5zM325 165h6v1h-6zM316 166h6v1h-6zM326 167h7v1h-7zM321 167h5v1h-5zM324 168h5v1h-5zM319 168h3v1h-3zM329 170h6v1h-6zM329 172h2v1h-2zM325 173h5v1h-5zM329 173h4v1h-4zM324 174h5v1h-5zM318 174h2v1h-2zM328 174h8v1h-8zM320 175h8v1h-8zM324 175h5v1h-5zM325 176h9v1h-9zM330 176h8v1h-8zM322 176h8v1h-8zM319 177h8v1h-8zM328 178h5v1h-5zM320 178h5v1h-5zM325 178h5v1h-5zM326 178h8v1h-8zM323 179h7v1h-7zM330 180h3v1h-3zM328 181h5v1h-5zM327 181h7v1h-7zM317 182h4v1h-4zM325 183h6v1h-6zM330 184h2v1h-2zM323 184h5v1h-5zM331 185h5v1h-5zM320 185h2v1h-2zM327 186h5v1h-5zM316 186h8v1h-8zM324 186h7v1h-7zM325 187h7v1h-7zM321 187h9v1h-9zM331 188h5v1h-5zM323 189h8v1h-8zM328 190h6v1h-6zM325 190h9v1h-9zM325 190h4v1h-4zM330 191h2v1h-2zM322 191h9v1h-9zM322 192h3v1h-3zM320 192h9v1h-9zM325 192h5v1h-5zM326 193h5v1h-5zM860 0h7v1h-7zM863 0h8v1h-8zM852 1h8v1h-8zM857 1h2v1h-2zM864 2h5v1h-5zM853 3h3v1h-3zM867 4h3v1h-3zM853 4h7v1h-7zM858 5h9v1h-9zM867 5h6v1h-6zM869 5h3v1h-3zM866 6h5v1h-5zM868 6h5v1h-5zM860 6h6v1h-6zM855 7h4v1h-4zM867 7h9v1h-9zM865 7h3v1h-3zM855 8h4v1h-4zM862 8h3v1h-3zM861 9h3v1h-3zM858 9h8v1h-8zM856 9h6v1h-6zM864 10h8v1h-8zM862 10h9v1h-9zM864 11h8v1h-8zM861 12h8v1h-8zM852 13h3v1h-3zM857 14h7v1h-7zM860 14h7v1h-7zM867 17h5v1h-5zM858 18h2v1h-2zM857 19h2v1h-2zM859 19h3v1h-3zM864 22h2v1h-2zM857 23h6v1h-6zM868 24h3v1h-3zM867 25h2v1h-2zM856 26h8v1h-8zM864 26h4v1h-4zM850 27h8v1h-8zM854 28h4v1h-4zM862 29h4v1h-4zM869 29h3v1h-3zM868 30h4v1h-4zM868 30h3v1h-3zM864 31h8v1h-8zM854 32h2v1h-2zM867 33h4v1h-4zM863 35h4v1h-4zM868 36h7v1h-7zM858 36h8v1h-8zM863 37h6v1h-6zM857 38h5v1h-5zM858 38h5v1h-5zM867 39h4v1h-4zM865 39h4v1h-4zM867 39h5v1h-5zM855 39h7v1h-7zM868 40h3v1h-3zM862 40h5v1h-5zM867 41h5v1h-5zM863 41h6v1h-6zM865 42h5v1h-5zM870 42h2v1h-2zM865 42h2v1h-2zM856 42h3v1h-3zM862 43h4v1h-4zM870 44h2v1h-2zM864 45h8v1h-8zM859 45h7v1h-7zM864 45h2v1h-2zM865 46h7v1h-7zM863 48h5v1h-5zM867 49h4v1h-4zM859 49h8v1h-8zM858 50h7v1h-7zM859 51h6v1h-6zM858 52h7v1h-7zM862 53h8v1h-8zM867 53h2v1h-2zM868 54h5v1h-5zM866 55h4v1h-4zM867 55h6v1h-6zM863 55h6v1h-6zM853 56h5v1h-5zM864 57h5v1h-5zM866 57h9v1h-9zM862 57h2v1h-2zM858 58h9v1h-9zM862 59h3v1h-3zM866 59h2v1h-2zM867 60h3v1h-3zM855 60h8v1h-8zM857 61h9v1h-9zM865 61h9v1h-9zM862 61h7v1h-7zM859 62h4v1h-4zM864 62h2v1h-2zM865 62h7v1h-7zM867 62h6v1h-6zM859 63h7v1h-7zM860 64h5v1h-5zM858 65h5v1h-5zM867 66h6v1h-6zM862 67h6v1h-6zM861 67h6v1h-6zM867 68h2v1h-2zM857 69h4v1h-4zM863 69h7v1h-7zM867 70h5v1h-5zM864 70h9v1h-9zM857 71h8v1h-8zM863 71h5v1h-5zM863 72h8v1h-8zM855 73h2v1h-2zM868 73h4v1h-4zM862 73h9v1h-9zM866 74h4v1h-4zM865 74h8v1h-8zM866 74h2v1h-2zM865 75h6v1h-6zM866 75h9v1h-9zM860 76h4v1h-4zM853 77h9v1h-9zM868 78h5v1h-5zM860 78h5v1h-5zM857 79h8v1h-8zM868 79h2v1h-2zM868 80h5v1h-5zM856 81h2v1h-2zM865 83h3v1h-3zM866 83h8v1h-8zM870 84h2v1h-2zM867 84h6v1h-6zM862 84h4v1h-4zM858 84h9v1h-9zM868 85h4v1h-4zM861 85h8v1h-8zM860 86h2v1h-2zM864 86h4v1h-4zM863 86h3v1h-3zM858 87h5v1h-5zM862 87h5v1h-5zM866 88h7v1h-7zM862 89h5v1h-5zM850 90h8v1h-8zM857 91h7v1h-7zM857 91h8v1h-8zM859 92h9v1h-9zM857 92h5v1h-5zM864 92h4v1h-4zM867 92h6v1h-6zM857 93h6v1h-6zM857 93h9v1h-9zM858 94h7v1h-7zM861 94h7v1h-7zM861 95h9v1h-9zM861 95h8v1h-8zM863 96h8v1h-8zM862 96h4v1h-4zM862 97h5v1h-5zM855 97h3v1h-3zM861 98h5v1h-5zM855 100h8v1h-8zM859 102h5v1h-5zM858 103h2v1h-2zM867 103h5v1h-5zM860 104h6v1h-6zM862 104h2v1h-2zM865 104h8v1h-8zM857 105h9v1h-9zM863 106h3v1h-3zM865 106h9v1h-9zM867 106h8v1h-8zM855 107h8v1h-8zM854 107h5v1h-5zM862 108h8v1h-8zM864 108h3v1h-3zM859 108h6v1h-6zM862 109h3v1h-3zM859 110h4v1h-4zM862 112h9v1h-9zM868 112h6v1h-6zM870 112h4v1h-4zM867 113h7v1h-7zM866 113h9v1h-9zM863 113h9v1h-9zM856 114h4v1h-4zM863 115h5v1h-5zM868 116h7v1h-7zM865 116h6v1h-6zM864 117h3v1h-3zM866 117h6v1h-6zM860 117h7v1h-7zM862 119h2v1h-2zM865 119h2v1h-2zM859 120h4v1h-4zM860 120h7v1h-7zM870 122h4v1h-4zM862 122h4v1h-4zM869 122h3v1h-3zM868 123h4v1h-4zM864 123h5v1h-5zM863 124h9v1h-9zM859 124h7v1h-7zM865 125h7v1h-7zM868 126h3v1h-3zM862 127h9v1h-9zM860 129h8v1h-8zM854 129h6v1h-6zM867 130h2v1h-2zM860 131h9v1h-9zM866 131h6v1h-6zM850 131h9v1h-9zM866 132h9v1h-9zM868 132h6v1h-6zM864 133h5v1h-5zM870 133h3v1h-3zM867 133h6v1h-6zM863 134h5v1h-5zM851 136h6v1h-6zM860 138h4v1h-4zM863 139h9v1h-9zM868 140h5v1h-5zM862 141h8v1h-8zM865 141h5v1h-5zM863 141h9v1h-9zM858 142h6v1h-6zM864 142h6v1h-6zM860 143h8v1h-8zM863 144h2v1h-2zM859 144h5v1h-5zM864 145h3v1h-3zM872 146h2v1h-2zM867 146h2v1h-2zM868 147h2v1h-2zM863 147h2v1h-2zM868 147h4v1h-4zM865 148h3v1h-3zM854 149h4v1h-4zM869 149h5v1h-5zM866 150h3v1h-3zM865 150h8v1h-8zM867 150h2v1h-2zM868 151h2v1h-2zM859 151h8v1h-8zM864 152h7v1h-7zM858 152h7v1h-7zM865 153h9v1h-9zM860 153h5v1h-5zM862 154h5v1h-5zM867 154h5v1h-5zM864 155h4v1h-4zM857 155h5v1h-5zM866 155h9v1h-9zM869 156h2v1h-2zM855 156h9v1h-9zM865 157h9v1h-9zM854 158h8v1h-8zM871 158h3v1h-3zM865 159h9v1h-9zM866 159h3v1h-3zM865 160h8v1h-8zM862 160h8v1h-8zM859 161h2v1h-2zM868 161h9v1h-9zM863 163h9v1h-9zM851 163h7v1h-7zM860 164h9v1h-9zM852 164h5v1h-5zM869 166h3v1h-3zM870 166h4v1h-4zM862 166h6v1h-6zM865 166h7v1h-7zM856 168h5v1h-5zM849 169h8v1h-8zM857 169h4v1h-4zM858 169h2v1h-2zM853 169h9v1h-9zM863 170h6v1h-6zM862 170h8v1h-8zM859 171h4v1h-4zM857 172h7v1h-7zM859 172h4v1h-4zM859 173h2v1h-2zM865 173h3v1h-3zM865 175h3v1h-3zM865 175h7v1h-7zM868 176h5v1h-5zM868 177h7v1h-7zM860 178h5v1h-5zM861 179h9v1h-9zM864 179h3v1h-3zM858 179h8v1h-8zM864 180h8v1h-8zM865 180h5v1h-5zM868 181h3v1h-3zM851 182h8v1h-8zM865 185h4v1h-4zM864 185h8v1h-8zM857 186h8v1h-8zM866 186h5v1h-5zM868 188h5v1h-5zM865 188h8v1h-8zM859 189h6v1h-6zM861 190h6v1h-6zM857 191h3v1h-3zM866 191h4v1h-4zM858 192h9v1h-9zM860 193h8v1h-8zM868 193h2v1h-2zM1406 1h3v1h-3zM1391 2h9v1h-9zM1411 3h8v1h-8zM1391 3h5v1h-5zM1406 4h6v1h-6zM1408 4h6v1h-6zM1407 5h2v1h-2zM1398 5h7v1h-7zM1412 7h4v1h-4zM1396 10h8v1h-8zM1407 10h3v1h-3zM1399 11h5v1h-5zM1400 11h8v1h-8zM1404 12h4v1h-4zM1392 13h6v1h-6zM1393 13h8v1h-8zM1399 13h2v1h-2zM1400 14h5v1h-5zM1402 15h9v1h-9zM1398 16h7v1h-7zM1389 16h5v1h-5zM1393 17h9v1h-9zM1398 18h9v1h-9zM1407 19h2v1h-2zM1397 19h6v1h-6zM1400 20h3v1h-3zM1407 21h6v1h-6zM1393 21h7v1h-7zM1398 22h3v1h-3zM1394 23h7v1h-7zM1389 24h8v1h-8zM1405 24h9v1h-9zM1402 26h8v1h-8zM1400 26h2v1h-2zM1393 26h4v1h-4zM1407 27h2v1h-2zM1401 27h9v1h-9zM1395 29h4v1h-4zM1396 30h4v1h-4zM1396 31h8v1h-8zM1397 31h9v1h-9zM1388 32h8v1h-8zM1392 34h5v1h-5zM1400 34h2v1h-2zM1396 35h4v1h-4zM1410 36h2v1h-2zM1392 36h8v1h-8zM1394 37h4v1h-4zM1392 37h7v1h-7zM1398 38h2v1h-2zM1401 39h4v1h-4zM1385 40h2v1h-2zM1397 41h7v1h-7zM1391 41h6v1h-6zM1407 43h7v1h-7zM1388 43h5v1h-5zM1388 44h7v1h-7zM1397 44h5v1h-5zM1404 45h9v1h-9zM1390 46h2v1h-2zM1404 46h5v1h-5zM1394 48h7v1h-7zM1398 48h8v1h-8zM1396 49h2v1h-2zM1393 50h5v1h-5zM1386 51h3v1h-3zM1388 51h8v1h-8zM1397 52h6v1h-6zM1396 54h5v1h-5zM1393 55h8v1h-8zM1394 57h5v1h-5zM1395 58h5v1h-5zM1395 58h3v1h-3zM1386 59h2v1h-2zM1385 59h4v1h-4zM1405 60h4v1h-4zM1394 61h8v1h-8zM1394 61h5v1h-5zM1386 62h9v1h-9zM1385 63h6v1h-6zM1398 64h5v1h-5zM1395 64h3v1h-3zM1392 65h8v1h-8zM1399 66h3v1h-3zM1400 67h7v1h-7zM1390 68h7v1h-7zM1391 68h4v1h-4zM1395 69h5v1h-5zM1401 69h7v1h-7zM1388 70h3v1h-3zM1388 71h7v1h-7zM1389 71h7v1h-7zM1396 72h5v1h-5zM1396 72h8v1h-8zM1387 72h7v1h-7zM1384 72h3v1h-3zM1390 73h9v1h-9zM1394 73h9v1h-9zM1395 73h7v1h-7zM1390 74h9v1h-9zM1391 74h7v1h-7zM1393 74h3v1h-3zM1383 75h7v1h-7zM1387 76h4v1h-4zM1390 76h3v1h-3zM1391 76h6v1h-6zM1395 76h6v1h-6zM1391 77h7v1h-7zM1390 77h2v1h-2zM1395 77h7v1h-7zM1400 77h4v1h-4zM1383 78h8v1h-8zM1392 78h6v1h-6zM1396 79h6v1h-6zM1399 80h6v1h-6zM1384 80h9v1h-9zM1384 83h9v1h-9zM1397 84h2v1h-2zM1381 84h7v1h-7zM1386 85h6v1h-6zM1386 86h8v1h-8zM1393 87h6v1h-6zM1393 87h6v1h-6zM1381 89h4v1h-4zM1394 89h7v1h-7zM1387 89h7v1h-7zM1385 91h8v1h-8zM1393 92h5v1h-5zM1387 93h4v1h-4zM1391 93h5v1h-5zM1384 94h3v1h-3zM1388 94h5v1h-5zM1393 95h5v1h-5zM1389 95h7v1h-7zM1397 96h4v1h-4zM1388 96h5v1h-5zM1399 97h2v1h-2zM1392 97h2v1h-2zM1400 97h3v1h-3zM1397 98h4v1h-4zM1387 100h9v1h-9zM1398 101h4v1h-4zM1387 101h7v1h-7zM1394 102h5v1h-5zM1397 102h6v1h-6zM1388 103h3v1h-3zM1396 104h6v1h-6zM1396 104h2v1h-2zM1387 105h2v1h-2zM1398 105h7v1h-7zM1379 106h8v1h-8zM1385 106h3v1h-3zM1386 108h5v1h-5zM1390 108h9v1h-9zM1384 108h2v1h-2zM1388 109h8v1h-8zM1390 109h3v1h-3zM1397 111h7v1h-7zM1391 112h8v1h-8zM1388 112h8v1h-8zM1392 112h7v1h-7zM1387 112h4v1h-4zM1391 113h8v1h-8zM1395 114h2v1h-2zM1388 114h6v1h-6zM1387 114h6v1h-6zM1393 115h6v1h-6zM1392 115h3v1h-3zM1394 115h6v1h-6zM1399 116h6v1h-6zM1386 116h6v1h-6zM1398 117h4v1h-4zM1403 119h2v1h-2zM1400 119h3v1h-3zM1394 119h5v1h-5zM1385 120h4v1h-4zM1403 120h9v1h-9zM1381 121h5v1h-5zM1396 121h8v1h-8zM1402 121h6v1h-6zM1398 121h2v1h-2zM1400 122h2v1h-2zM1392 124h7v1h-7zM1389 124h5v1h-5zM1390 124h6v1h-6zM1396 125h2v1h-2zM1396 126h7v1h-7zM1390 126h6v1h-6zM1387 127h9v1h-9zM1389 127h4v1h-4zM1385 127h9v1h-9zM1393 128h3v1h-3zM1400 128h7v1h-7zM1393 129h8v1h-8zM1395 130h2v1h-2zM1395 131h5v1h-5zM1397 131h3v1h-3zM1402 132h4v1h-4zM1398 133h3v1h-3zM1388 134h8v1h-8zM1393 134h3v1h-3zM1398 134h5v1h-5zM1403 135h3v1h-3zM1391 135h4v1h-4zM1392 136h7v1h-7zM1386 137h3v1h-3zM1392 137h9v1h-9zM1395 137h2v1h-2zM1399 138h7v1h-7zM1392 138h9v1h-9zM1389 138h2v1h-2zM1397 139h7v1h-7zM1385 139h7v1h-7zM1401 139h2v1h-2zM1401 140h6v1h-6zM1392 140h4v1h-4zM1393 140h7v1h-7zM1381 141h9v1h-9zM1399 141h4v1h-4zM1391 142h8v1h-8zM1397 145h9v1h-9zM1406 147h2v1h-2zM1393 147h3v1h-3zM1383 147h9v1h-9zM1387 148h4v1h-4zM1394 149h6v1h-6zM1402 151h7v1h-7zM1387 151h8v1h-8zM1397 151h9v1h-9zM1399 152h5v1h-5zM1395 152h9v1h-9zM1386 153h3v1h-3zM1386 154h8v1h-8zM1395 154h5v1h-5zM1397 155h8v1h-8zM1393 156h6v1h-6zM1405 156h5v1h-5zM1393 157h6v1h-6zM1389 158h8v1h-8zM1389 159h9v1h-9zM1397 159h4v1h-4zM1399 159h2v1h-2zM1388 160h7v1h-7zM1395 160h5v1h-5zM1401 160h4v1h-4zM1388 161h9v1h-9zM1386 161h6v1h-6zM1393 161h3v1h-3zM1389 161h3v1h-3zM1402 162h4v1h-4zM1397 162h9v1h-9zM1394 163h8v1h-8zM1396 164h6v1h-6zM1388 166h9v1h-9zM1393 167h6v1h-6zM1398 167h2v1h-2zM1396 168h4v1h-4zM1396 168h7v1h-7zM1394 169h3v1h-3zM1404 170h2v1h-2zM1390 170h6v1h-6zM1401 170h3v1h-3zM1392 172h2v1h-2zM1399 173h2v1h-2zM1404 173h2v1h-2zM1392 174h5v1h-5zM1403 175h9v1h-9zM1395 175h8v1h-8zM1400 175h3v1h-3zM1398 176h8v1h-8zM1392 176h2v1h-2zM1407 177h7v1h-7zM1401 178h4v1h-4zM1388 178h5v1h-5zM1403 179h5v1h-5zM1396 179h4v1h-4zM1392 179h3v1h-3zM1412 181h3v1h-3zM1400 182h8v1h-8zM1397 182h4v1h-4zM1403 183h6v1h-6zM1388 183h5v1h-5zM1398 183h3v1h-3zM1401 184h5v1h-5zM1398 185h8v1h-8zM1393 186h7v1h-7zM1400 187h2v1h-2zM1387 187h8v1h-8zM1392 188h8v1h-8zM1385 189h5v1h-5zM1402 189h4v1h-4zM1403 190h7v1h-7zM1405 191h3v1h-3zM1402 192h9v1h-9zM576 0h4v2h-4zM578 18h4v2h-4zM577 30h4v2h-4zM576 32h4v2h-4zM576 48h4v2h-4zM576 58h4v2h-4zM577 96h5v2h-5zM577 108h4v2h-4zM577 112h4v2h-4zM576 126h5v2h-5zM577 132h4v2h-4zM577 150h5v2h-5zM577 156h4v2h-4zM577 170h4v2h-4zM577 174h4v2h-4zM576 192h4v2h-4zM819 0h4v2h-4zM818 2h4v2h-4zM820 4h4v2h-4zM820 6h4v2h-4zM819 8h5v2h-5zM820 10h4v2h-4zM819 12h4v2h-4zM819 14h5v2h-5zM819 16h4v2h-4zM818 18h4v2h-4zM819 20h4v2h-4zM819 22h4v2h-4zM819 24h5v2h-5zM819 26h4v2h-4zM819 28h4v2h-4zM818 30h4v2h-4zM818 32h4v2h-4zM820 38h5v2h-5zM819 40h4v2h-4zM820 42h4v2h-4zM820 44h4v2h-4zM819 46h4v2h-4zM819 48h4v2h-4zM819 50h4v2h-4zM819 52h5v2h-5zM819 54h4v2h-4zM820 56h5v2h-5zM819 60h4v2h-4zM819 62h4v2h-4zM819 64h5v2h-5zM819 68h4v2h-4zM819 70h4v2h-4zM819 72h4v2h-4zM819 76h4v2h-4zM820 78h4v2h-4zM819 82h4v2h-4zM819 84h4v2h-4zM819 86h5v2h-5zM819 90h4v2h-4zM819 92h4v2h-4zM820 94h4v2h-4zM819 96h4v2h-4zM820 100h4v2h-4zM819 102h4v2h-4zM818 104h4v2h-4zM818 108h4v2h-4zM820 110h4v2h-4zM819 114h5v2h-5zM818 116h5v2h-5zM819 118h4v2h-4zM819 120h4v2h-4zM818 122h4v2h-4zM819 124h4v2h-4zM818 126h4v2h-4zM818 128h4v2h-4zM818 130h4v2h-4zM819 132h5v2h-5zM819 134h4v2h-4zM819 136h4v2h-4zM819 138h4v2h-4zM820 140h4v2h-4zM819 142h4v2h-4zM818 144h5v2h-5zM818 146h4v2h-4zM819 148h4v2h-4zM820 150h5v2h-5zM818 152h4v2h-4zM819 154h5v2h-5zM818 156h5v2h-5zM819 158h4v2h-4zM819 160h4v2h-4zM818 162h4v2h-4zM820 164h5v2h-5zM820 166h5v2h-5zM819 168h4v2h-4zM818 170h4v2h-4zM819 172h5v2h-5zM819 174h5v2h-5zM819 178h5v2h-5zM819 180h5v2h-5zM818 182h4v2h-4zM820 184h4v2h-4zM818 188h4v2h-4zM819 190h4v2h-4zM819 192h5v2h-5zM834 4h3v2h-3zM834 10h3v2h-3zM832 58h3v2h-3zM834 64h3v2h-3zM834 72h4v2h-4zM834 92h3v2h-3zM834 102h3v2h-3zM834 106h3v2h-3zM834 112h3v2h-3zM834 124h4v2h-4zM834 132h3v2h-3zM834 134h4v2h-4zM834 180h4v2h-4zM834 192h3v2h-3zM1158 0h3v2h-3zM1158 2h3v2h-3zM1158 4h3v2h-3zM1158 6h3v2h-3zM1158 8h3v2h-3zM1158 10h4v2h-4zM1158 12h3v2h-3zM1160 14h3v2h-3zM1158 16h4v2h-4zM1158 22h3v2h-3zM1158 24h3v2h-3zM1158 26h3v2h-3zM1158 28h3v2h-3zM1158 30h3v2h-3zM1158 32h3v2h-3zM1158 36h3v2h-3zM1158 38h3v2h-3zM1158 40h3v2h-3zM1158 42h3v2h-3zM1158 44h4v2h-4zM1158 48h3v2h-3zM1158 52h3v2h-3zM1160 58h4v2h-4zM1160 60h3v2h-3zM1158 64h4v2h-4zM1160 76h3v2h-3zM1158 80h4v2h-4zM1158 82h3v2h-3zM1158 88h3v2h-3zM1158 92h3v2h-3zM1158 96h3v2h-3zM1158 100h3v2h-3zM1160 104h3v2h-3zM1158 110h3v2h-3zM1158 112h3v2h-3zM1158 114h3v2h-3zM1158 118h3v2h-3zM1160 130h3v2h-3zM1160 134h3v2h-3zM1160 142h3v2h-3zM1158 146h3v2h-3zM1158 148h3v2h-3zM1158 154h3v2h-3zM1158 158h3v2h-3zM1158 164h3v2h-3zM1158 170h3v2h-3zM1158 176h3v2h-3zM1158 178h3v2h-3zM1158 186h3v2h-3zM1158 190h3v2h-3zM1158 192h3v2h-3zM1310 0h4v2h-4zM1310 2h4v2h-4zM1310 4h4v2h-4zM1310 6h5v2h-5zM1309 10h4v2h-4zM1310 12h4v2h-4zM1311 14h4v2h-4zM1310 18h4v2h-4zM1309 20h4v2h-4zM1310 22h5v2h-5zM1309 24h5v2h-5zM1309 26h5v2h-5zM1310 28h4v2h-4zM1310 30h4v2h-4zM1310 32h4v2h-4zM1310 36h4v2h-4zM1311 38h5v2h-5zM1310 40h4v2h-4zM1309 42h4v2h-4zM1311 44h4v2h-4zM1309 48h4v2h-4zM1309 50h4v2h-4zM1310 52h4v2h-4zM1309 54h4v2h-4zM1310 60h5v2h-5zM1310 62h4v2h-4zM1310 64h4v2h-4zM1310 68h4v2h-4zM1310 70h4v2h-4zM1310 72h4v2h-4zM1311 74h4v2h-4zM1310 76h5v2h-5zM1310 78h4v2h-4zM1309 80h4v2h-4zM1310 82h4v2h-4zM1310 84h4v2h-4zM1310 86h4v2h-4zM1310 88h4v2h-4zM1310 90h4v2h-4zM1310 92h4v2h-4zM1309 94h4v2h-4zM1310 96h5v2h-5zM1310 98h4v2h-4zM1310 100h5v2h-5zM1311 102h5v2h-5zM1309 104h4v2h-4zM1311 106h4v2h-4zM1310 108h4v2h-4zM1310 110h4v2h-4zM1309 112h5v2h-5zM1311 114h4v2h-4zM1309 116h4v2h-4zM1310 118h4v2h-4zM1310 120h4v2h-4zM1309 122h4v2h-4zM1310 124h4v2h-4zM1310 126h4v2h-4zM1310 128h5v2h-5zM1309 132h4v2h-4zM1311 134h5v2h-5zM1310 136h4v2h-4zM1310 138h4v2h-4zM1310 140h4v2h-4zM1311 142h4v2h-4zM1310 146h4v2h-4zM1311 148h4v2h-4zM1310 150h4v2h-4zM1310 152h4v2h-4zM1311 156h5v2h-5zM1309 158h4v2h-4zM1309 160h4v2h-4zM1311 162h4v2h-4zM1311 164h4v2h-4zM1311 166h4v2h-4zM1309 168h4v2h-4zM1310 170h4v2h-4zM1310 174h4v2h-4zM1310 176h4v2h-4zM1310 178h5v2h-5zM1310 180h4v2h-4zM1311 182h4v2h-4zM1309 184h5v2h-5zM1309 186h4v2h-4zM1309 188h4v2h-4zM1310 190h4v2h-4zM1310 192h4v2h-4z"/><path fill="#f1ff00" d="M314 1h3v1h-3zM327 45h4v1h-4zM322 71h5v1h-5zM309 182h9v1h-9zM850 37h7v1h-7zM856 87h6v1h-6zM848 94h5v1h-5zM869 177h4v1h-4zM1385 55h5v1h-5zM1401 113h7v1h-7zM1390 120h9v1h-9zM1380 150h6v1h-6zM98 33h3v2h-3zM577 2h4v2h-4zM578 116h4v2h-4zM834 148h3v2h-3zM942 44h3v3h-3zM942 127h3v5h-3z"/><path fill="#f8ff00" d="M317 1h8v1h-8zM329 77h4v1h-4zM320 104h7v1h-7zM323 179h7v1h-7zM868 16h6v1h-6zM865 145h9v1h-9zM856 173h4v1h-4zM1413 30h2v1h-2zM1393 88h8v1h-8zM1379 103h2v1h-2zM1398 191h3v1h-3zM577 166h4v2h-4zM818 74h4v2h-4zM818 80h4v2h-4zM819 186h5v2h-5zM834 28h3v2h-3zM832 156h3v2h-3zM1160 20h3v2h-3zM1158 68h3v2h-3zM1158 116h3v2h-3zM1309 8h5v2h-5zM1309 56h4v2h-4z"/><path fill="#b3ff00" d="M316 1h7v1h-7zM319 36h7v1h-7zM320 103h2v1h-2zM329 189h7v1h-7zM854 11h8v1h-8zM845 33h7v1h-7zM870 138h6v1h-6zM847 149h2v1h-2zM1391 16h6v1h-6zM344 52h3v2h-3zM344 122h3v2h-3zM344 144h3v2h-3zM1324 82h3v2h-3zM1326 138h3v2h-3zM1326 154h4v2h-4z"/><path fill="#b1ff00" d="M314 2h9v1h-9zM318 19h8v1h-8zM330 29h8v1h-8zM318 93h9v1h-9zM334 138h5v1h-5zM869 99h5v1h-5zM852 123h9v1h-9zM869 175h5v1h-5zM1373 23h8v1h-8zM1406 56h6v1h-6zM1415 164h5v1h-5zM1381 175h6v1h-6zM344 20h3v2h-3zM942 177h3v2h-3z"/><path fill="#a1ff00" d="M318 2h3v1h-3zM315 35h2v1h-2zM317 86h7v1h-7zM311 89h4v1h-4zM851 28h8v1h-8zM853 44h9v1h-9zM852 68h5v1h-5zM1383 5h6v1h-6zM1405 66h7v1h-7zM1369 94h6v1h-6zM1378 133h2v1h-2zM344 76h3v2h-3zM342 80h4v2h-4zM344 180h3v2h-3zM1039 113h2v2h-2z"/><path fill="#eaff00" d="M319 3h5v1h-5zM328 146h9v1h-9zM323 163h8v1h-8zM320 164h5v1h-5zM314 171h4v1h-4zM323 180h3v1h-3zM310 183h5v1h-5zM324 189h6v1h-6zM870 41h4v1h-4zM869 96h6v1h-6zM857 115h2v1h-2zM859 177h7v1h-7zM1397 22h6v1h-6zM1393 25h6v1h-6zM1406 28h6v1h-6zM1381 193h8v1h-8zM577 6h5v2h-5zM576 64h4v2h-4zM577 86h4v2h-4zM577 124h5v2h-5zM834 186h3v2h-3zM984 66h3v3h-3zM984 124h3v3h-3zM1160 168h3v2h-3z"/><path fill="#cfff00" d="M312 3h4v1h-4zM333 59h6v1h-6zM841 10h9v1h-9zM852 148h4v1h-4zM851 174h7v1h-7zM1387 66h3v1h-3zM1410 130h2v1h-2zM577 184h4v2h-4zM590 39h3v4h-3zM590 187h3v4h-3zM834 82h3v2h-3zM942 171h3v4h-3zM1326 26h3v2h-3zM1326 146h3v2h-3z"/><path fill="#feff00" d="M313 3h9v1h-9zM323 12h5v1h-5zM325 30h7v1h-7zM329 53h9v1h-9zM323 61h9v1h-9zM329 69h3v1h-3zM323 102h9v1h-9zM866 25h4v1h-4zM863 40h4v1h-4zM858 52h7v1h-7zM865 134h8v1h-8zM861 137h9v1h-9zM861 163h9v1h-9zM860 193h5v1h-5zM1392 0h8v1h-8zM1397 3h5v1h-5zM1397 34h2v1h-2zM1391 61h5v1h-5zM1388 164h9v1h-9zM576 12h4v2h-4zM576 160h4v2h-4zM819 36h4v2h-4zM834 86h3v2h-3zM1160 144h3v2h-3z"/><path fill="#30ff00" d="M320 3h5v1h-5zM329 5h2v1h-2zM324 8h2v1h-2zM323 9h3v1h-3zM328 10h4v1h-4zM320 11h3v1h-3zM316 12h3v1h-3zM319 15h2v1h-2zM331 17h5v1h-5zM330 21h3v1h-3zM313 22h2v1h-2zM327 24h5v1h-5zM326 35h2v1h-2zM323 37h3v1h-3zM310 41h5v1h-5zM314 43h4v1h-4zM309 49h2v1h-2zM326 51h5v1h-5zM329 53h2v1h-2zM329 54h3v1h-3zM319 55h2v1h-2zM332 60h2v1h-2zM319 69h4v1h-4zM328 73h2v1h-2zM333 75h3v1h-3zM328 80h5v1h-5zM313 83h4v1h-4zM326 85h4v1h-4zM315 86h4v1h-4zM322 89h2v1h-2zM325 92h2v1h-2zM325 94h4v1h-4zM325 96h3v1h-3zM327 101h4v1h-4zM315 102h4v1h-4zM317 103h2v1h-2zM316 112h3v1h-3zM324 117h5v1h-5zM327 124h3v1h-3zM330 144h4v1h-4zM323 148h5v1h-5zM316 154h5v1h-5zM332 155h2v1h-2zM328 169h5v1h-5zM333 176h5v1h-5zM307 184h5v1h-5zM331 190h5v1h-5zM318 192h5v1h-5zM855 0h2v1h-2zM858 4h4v1h-4zM857 5h2v1h-2zM855 7h4v1h-4zM843 9h3v1h-3zM854 14h3v1h-3zM857 16h2v1h-2zM856 23h2v1h-2zM853 25h3v1h-3zM870 26h4v1h-4zM870 33h4v1h-4zM863 34h3v1h-3zM847 36h2v1h-2zM848 37h3v1h-3zM842 38h3v1h-3zM849 40h3v1h-3zM852 47h4v1h-4zM844 50h2v1h-2zM872 51h4v1h-4zM849 55h2v1h-2zM849 56h4v1h-4zM865 61h4v1h-4zM846 63h4v1h-4zM870 68h3v1h-3zM842 77h2v1h-2zM872 78h5v1h-5zM847 80h3v1h-3zM868 81h4v1h-4zM865 84h4v1h-4zM868 89h4v1h-4zM856 91h3v1h-3zM845 93h3v1h-3zM862 95h3v1h-3zM869 96h5v1h-5zM846 98h5v1h-5zM861 100h3v1h-3zM869 113h2v1h-2zM861 114h2v1h-2zM846 118h4v1h-4zM857 122h3v1h-3zM865 124h4v1h-4zM869 133h2v1h-2zM861 138h4v1h-4zM846 140h5v1h-5zM848 141h5v1h-5zM869 143h5v1h-5zM869 147h3v1h-3zM867 148h2v1h-2zM860 151h4v1h-4zM866 154h4v1h-4zM844 155h4v1h-4zM843 156h3v1h-3zM856 157h2v1h-2zM855 158h3v1h-3zM853 161h2v1h-2zM869 162h2v1h-2zM848 165h4v1h-4zM856 169h2v1h-2zM850 171h2v1h-2zM851 174h2v1h-2zM864 177h4v1h-4zM842 191h3v1h-3zM1384 2h2v1h-2zM1381 3h3v1h-3zM1394 15h3v1h-3zM1385 18h3v1h-3zM1387 24h4v1h-4zM1396 32h5v1h-5zM1403 34h4v1h-4zM1400 35h2v1h-2zM1408 37h3v1h-3zM1383 39h3v1h-3zM1413 41h2v1h-2zM1395 42h2v1h-2zM1408 43h2v1h-2zM1381 44h3v1h-3zM1405 48h4v1h-4zM1396 49h2v1h-2zM1376 50h2v1h-2zM1380 51h3v1h-3zM1407 59h2v1h-2zM1409 65h3v1h-3zM1395 69h5v1h-5zM1389 83h3v1h-3zM1375 84h4v1h-4zM1382 86h4v1h-4zM1387 89h4v1h-4zM1388 90h2v1h-2zM1383 91h2v1h-2zM1378 99h5v1h-5zM1375 100h5v1h-5zM1406 101h5v1h-5zM1398 102h3v1h-3zM1398 103h5v1h-5zM1385 105h2v1h-2zM1385 106h5v1h-5zM1373 109h5v1h-5zM1389 112h3v1h-3zM1401 114h5v1h-5zM1370 121h2v1h-2zM1378 125h3v1h-3zM1393 128h5v1h-5zM1392 129h3v1h-3zM1395 132h5v1h-5zM1385 134h5v1h-5zM1379 135h4v1h-4zM1384 136h3v1h-3zM1377 138h5v1h-5zM1400 148h5v1h-5zM1409 152h2v1h-2zM1384 154h4v1h-4zM1391 171h5v1h-5zM1376 173h3v1h-3zM1381 175h3v1h-3zM1384 176h3v1h-3zM1410 177h4v1h-4zM1406 182h5v1h-5zM1392 183h2v1h-2zM1411 184h2v1h-2zM1409 186h2v1h-2zM1409 187h5v1h-5zM1404 189h5v1h-5zM1405 190h3v1h-3zM1405 191h5v1h-5z"/><path fill="#5fff00" d="M302 4h8v1h-8zM336 25h2v1h-2zM306 29h7v1h-7zM333 32h6v1h-6zM306 33h4v1h-4zM305 38h9v1h-9zM302 54h6v1h-6zM299 75h8v1h-8zM303 77h9v1h-9zM309 101h6v1h-6zM337 121h4v1h-4zM308 142h3v1h-3zM307 145h5v1h-5zM308 146h4v1h-4zM335 149h7v1h-7zM306 162h7v1h-7zM305 188h8v1h-8zM839 20h6v1h-6zM840 29h2v1h-2zM845 50h2v1h-2zM839 81h8v1h-8zM841 85h7v1h-7zM872 98h3v1h-3zM846 101h2v1h-2zM841 102h8v1h-8zM839 112h4v1h-4zM841 114h2v1h-2zM838 123h9v1h-9zM844 132h3v1h-3zM842 135h8v1h-8zM837 187h9v1h-9zM840 187h2v1h-2zM1381 2h2v1h-2zM1373 9h5v1h-5zM1372 54h5v1h-5zM1369 57h8v1h-8zM1410 93h7v1h-7zM1367 135h7v1h-7zM1414 139h4v1h-4zM1367 142h8v1h-8zM1415 147h6v1h-6zM1416 154h3v1h-3zM1377 174h3v1h-3zM1421 185h6v1h-6zM1376 187h8v1h-8zM1422 187h2v1h-2zM258 70h2v5h-2z"/><path fill="#cdff00" d="M308 4h4v1h-4zM315 142h8v1h-8zM323 171h2v1h-2zM312 182h6v1h-6zM322 193h3v1h-3zM860 144h8v1h-8zM1398 84h2v1h-2zM1382 133h8v1h-8zM578 70h4v2h-4zM590 142h3v6h-3zM832 38h3v2h-3zM1324 156h3v2h-3z"/><path fill="#ffc300" d="M323 5h9v1h-9zM324 8h3v1h-3zM321 39h5v1h-5zM326 40h8v1h-8zM320 50h7v1h-7zM322 69h7v1h-7zM328 81h9v1h-9zM333 127h2v1h-2zM326 151h8v1h-8zM322 152h2v1h-2zM325 156h3v1h-3zM319 160h6v1h-6zM319 170h7v1h-7zM327 173h6v1h-6zM329 177h7v1h-7zM327 182h8v1h-8zM857 1h6v1h-6zM864 7h5v1h-5zM866 31h5v1h-5zM869 37h3v1h-3zM866 49h5v1h-5zM862 63h3v1h-3zM860 139h5v1h-5zM861 151h9v1h-9zM1408 2h7v1h-7zM1406 2h5v1h-5zM1400 3h5v1h-5zM1392 21h9v1h-9zM1397 27h7v1h-7zM1399 28h4v1h-4zM1407 34h5v1h-5zM1396 37h4v1h-4zM1397 41h7v1h-7zM1386 54h7v1h-7zM1401 54h9v1h-9zM1395 79h3v1h-3zM1388 83h3v1h-3zM1389 86h2v1h-2zM1392 88h3v1h-3zM1391 96h2v1h-2zM1380 102h8v1h-8zM1395 107h6v1h-6zM1397 107h7v1h-7zM1396 113h8v1h-8zM1388 125h3v1h-3zM1396 140h8v1h-8zM1393 141h6v1h-6zM1393 170h5v1h-5zM1311 92h2v2h-2z"/><path fill="#b0ff00" d="M314 5h7v1h-7zM312 12h4v1h-4zM305 80h7v1h-7zM316 97h4v1h-4zM1415 18h3v1h-3zM1400 102h9v1h-9zM1384 157h7v1h-7zM1389 163h2v1h-2zM344 10h3v2h-3zM590 95h3v2h-3z"/><path fill="#78ff00" d="M307 5h8v1h-8zM310 16h4v1h-4zM841 67h7v1h-7zM1378 53h4v1h-4zM1373 92h3v1h-3zM1410 146h5v1h-5zM1262 74h2v2h-2z"/><path fill="#eeff00" d="M312 6h5v1h-5zM317 21h3v1h-3zM328 100h2v1h-2zM313 134h9v1h-9zM328 174h3v1h-3zM857 14h8v1h-8zM858 66h8v1h-8zM853 111h5v1h-5zM860 130h4v1h-4zM855 142h8v1h-8zM1401 45h5v1h-5zM1400 149h7v1h-7zM1413 190h3v1h-3zM834 48h3v2h-3zM834 90h3v2h-3zM834 136h4v2h-4zM1158 78h3v2h-3zM1160 98h3v2h-3zM1158 102h3v2h-3zM1158 140h3v2h-3zM1158 150h3v2h-3zM1160 184h3v2h-3z"/><path fill="#c6ff00" d="M320 6h4v1h-4zM309 72h5v1h-5zM310 148h8v1h-8zM857 100h5v1h-5zM849 101h3v1h-3zM1393 15h4v1h-4zM344 58h3v2h-3zM84 144h3v5h-3zM724 61h3v4h-3zM942 188h3v5h-3zM1324 66h3v2h-3z"/><path fill="#8fff00" d="M310 7h3v1h-3zM1379 100h2v1h-2zM1262 7h2v2h-2z"/><path fill="#69ff00" d="M311 7h5v1h-5zM841 27h4v1h-4zM1381 0h3v1h-3zM1414 56h5v1h-5zM1366 99h4v1h-4zM1372 109h3v1h-3z"/><path fill="#caff00" d="M311 7h3v1h-3zM308 27h4v1h-4zM330 64h8v1h-8zM321 102h5v1h-5zM321 154h8v1h-8zM855 12h9v1h-9zM855 17h7v1h-7zM858 46h9v1h-9zM841 107h9v1h-9zM1414 4h5v1h-5zM1381 62h8v1h-8zM1399 81h4v1h-4zM1376 82h8v1h-8zM1324 102h3v2h-3z"/><path fill="#99ff00" d="M313 8h3v1h-3zM333 164h7v1h-7zM1411 130h7v1h-7zM342 96h3v2h-3zM147 0h2v4h-2z"/><path fill="#85ff00" d="M332 9h7v1h-7zM313 101h4v1h-4zM316 112h3v1h-3zM1413 11h8v1h-8zM1411 173h6v1h-6zM1262 174h2v4h-2z"/><path fill="#dfff00" d="M322 9h5v1h-5zM312 46h7v1h-7zM312 86h6v1h-6zM312 98h9v1h-9zM325 105h8v1h-8zM327 167h4v1h-4zM861 46h4v1h-4zM868 97h6v1h-6zM1419 22h3v1h-3zM1383 110h9v1h-9zM1403 146h9v1h-9zM1395 193h9v1h-9zM578 134h4v2h-4zM590 81h3v5h-3zM984 13h3v2h-3zM1158 126h3v2h-3zM1324 18h3v2h-3zM1324 36h4v2h-4zM1324 180h3v2h-3z"/><path fill="#d3ff00" d="M331 10h3v1h-3zM324 10h3v1h-3zM315 42h9v1h-9zM310 109h9v1h-9zM332 116h6v1h-6zM319 123h4v1h-4zM857 3h5v1h-5zM857 41h8v1h-8zM858 53h4v1h-4zM859 59h6v1h-6zM858 65h4v1h-4zM868 68h6v1h-6zM860 153h4v1h-4zM870 181h2v1h-2zM1386 9h3v1h-3zM1416 25h3v1h-3zM1384 145h8v1h-8zM577 16h4v2h-4zM590 65h3v2h-3zM834 138h4v2h-4zM834 164h3v2h-3zM942 105h3v2h-3z"/><path fill="#a6ff00" d="M317 10h2v1h-2zM313 71h9v1h-9zM337 101h2v1h-2zM313 185h5v1h-5zM869 8h9v1h-9zM854 116h9v1h-9zM854 119h8v1h-8zM1379 119h4v1h-4zM1405 146h4v1h-4zM344 90h3v2h-3zM342 108h3v2h-3zM342 148h3v2h-3z"/><path fill="#efff00" d="M313 10h8v1h-8zM321 147h3v1h-3zM849 86h9v1h-9zM866 124h4v1h-4zM855 141h5v1h-5zM855 157h8v1h-8zM853 170h8v1h-8zM847 192h4v1h-4zM1384 24h2v1h-2zM1390 33h6v1h-6zM1393 92h7v1h-7zM1380 98h8v1h-8zM1406 144h4v1h-4zM577 68h4v2h-4zM834 176h3v2h-3zM984 144h3v2h-3zM1158 18h3v2h-3z"/><path fill="#ddff00" d="M315 11h8v1h-8zM319 118h2v1h-2zM852 70h4v1h-4zM866 118h4v1h-4zM1405 8h5v1h-5zM1408 69h3v1h-3zM1407 117h2v1h-2zM1407 117h5v1h-5zM1395 177h3v1h-3zM576 130h5v2h-5zM576 158h4v2h-4zM578 190h4v2h-4zM832 108h3v2h-3zM834 144h3v2h-3zM834 166h4v2h-4zM942 92h3v3h-3zM1158 34h4v2h-4zM1158 152h3v2h-3z"/><path fill="#faff00" d="M321 11h2v1h-2zM328 13h7v1h-7zM321 86h6v1h-6zM323 163h2v1h-2zM853 31h2v1h-2zM847 69h9v1h-9zM866 120h4v1h-4zM858 143h9v1h-9zM864 167h9v1h-9zM1389 188h2v1h-2zM578 176h5v2h-5zM819 106h5v2h-5zM1158 62h4v2h-4zM1160 138h3v2h-3zM1158 182h3v2h-3zM1310 58h4v2h-4zM1310 66h4v2h-4zM1310 144h4v2h-4z"/><path fill="#63ff00" d="M305 12h6v1h-6zM308 34h3v1h-3z"/><path fill="#dbff00" d="M327 13h2v1h-2zM324 31h6v1h-6zM310 74h3v1h-3zM332 108h4v1h-4zM334 129h3v1h-3zM320 149h9v1h-9zM310 180h7v1h-7zM869 101h5v1h-5zM863 118h2v1h-2zM860 140h4v1h-4zM1393 10h8v1h-8zM1389 31h7v1h-7zM1381 98h9v1h-9zM1406 148h6v1h-6zM577 118h4v2h-4zM576 122h4v2h-4zM834 16h3v2h-3zM834 118h4v2h-4zM834 158h4v2h-4zM1160 86h3v2h-3zM1160 162h4v2h-4zM1326 60h3v2h-3zM1324 152h3v2h-3zM1326 184h4v2h-4z"/><path fill="#c0ff00" d="M316 13h9v1h-9zM321 130h2v1h-2zM855 2h6v1h-6zM868 15h8v1h-8zM855 187h8v1h-8zM1380 39h4v1h-4zM1414 123h2v1h-2zM1402 149h6v1h-6zM1385 159h3v1h-3zM1387 165h8v1h-8zM1388 172h6v1h-6zM1377 172h9v1h-9zM1419 192h3v1h-3zM344 70h3v2h-3zM98 36h3v6h-3zM1324 70h3v2h-3zM1326 134h4v2h-4zM1324 166h4v2h-4z"/><path fill="#ceff00" d="M316 13h8v1h-8zM321 31h7v1h-7zM321 78h8v1h-8zM320 78h5v1h-5zM333 117h5v1h-5zM322 147h7v1h-7zM869 46h3v1h-3zM1395 8h9v1h-9zM1408 22h2v1h-2zM1402 46h5v1h-5zM1384 55h7v1h-7zM577 60h5v2h-5zM578 62h4v2h-4zM576 76h4v2h-4zM834 26h3v2h-3zM834 42h3v2h-3zM834 142h3v2h-3zM834 172h4v2h-4zM942 122h3v4h-3zM984 82h3v3h-3zM1324 6h3v2h-3z"/><path fill="#f0ff00" d="M327 14h3v1h-3zM324 29h3v1h-3zM327 36h2v1h-2zM317 58h4v1h-4zM310 70h8v1h-8zM324 122h4v1h-4zM319 139h9v1h-9zM853 9h2v1h-2zM869 35h6v1h-6zM857 172h4v1h-4zM1397 23h6v1h-6zM1375 82h6v1h-6zM1389 129h6v1h-6zM1383 144h3v1h-3zM1389 177h4v1h-4zM1402 192h4v1h-4zM98 86h3v4h-3zM577 26h4v2h-4zM576 74h5v2h-5zM577 84h5v2h-5zM984 98h3v5h-3zM1160 106h3v2h-3z"/><path fill="#e2ff00" d="M330 14h8v1h-8zM333 28h4v1h-4zM317 30h8v1h-8zM324 34h7v1h-7zM325 67h5v1h-5zM325 115h5v1h-5zM326 123h6v1h-6zM326 150h4v1h-4zM322 162h4v1h-4zM868 3h9v1h-9zM1410 42h8v1h-8zM1396 85h8v1h-8zM1377 88h4v1h-4zM1390 118h6v1h-6zM1401 155h8v1h-8zM1406 169h7v1h-7zM1389 190h9v1h-9zM577 42h4v2h-4zM590 69h3v6h-3zM834 12h4v2h-4zM1158 128h3v2h-3zM1324 58h3v2h-3z"/><path fill="#c9ff00" d="M323 14h6v1h-6zM330 40h5v1h-5zM312 92h6v1h-6zM320 125h3v1h-3zM314 144h6v1h-6zM310 153h6v1h-6zM317 169h2v1h-2zM856 28h5v1h-5zM853 33h2v1h-2zM850 83h5v1h-5zM861 174h3v1h-3zM1391 48h3v1h-3zM1405 136h3v1h-3zM1393 180h6v1h-6zM590 46h3v2h-3zM942 118h3v2h-3zM1324 24h3v2h-3zM1324 44h3v2h-3z"/><path fill="#e1ff00" d="M319 15h7v1h-7zM322 103h8v1h-8zM334 121h4v1h-4zM314 157h3v1h-3zM863 37h8v1h-8zM859 56h9v1h-9zM851 88h7v1h-7zM848 110h2v1h-2zM860 118h7v1h-7zM863 160h9v1h-9zM1401 32h5v1h-5zM1393 36h5v1h-5zM1407 49h9v1h-9zM577 56h4v2h-4zM577 144h5v2h-5zM834 126h4v2h-4zM834 128h3v2h-3zM942 84h3v6h-3zM1324 12h3v2h-3zM1324 158h3v2h-3z"/><path fill="#7aff00" d="M312 15h8v1h-8zM1374 53h8v1h-8zM1409 155h8v1h-8zM1039 0h2v5h-2zM1151 88h2v2h-2zM1262 33h2v3h-2zM1262 84h2v3h-2z"/><path fill="#fcff00" d="M330 16h3v1h-3zM320 47h7v1h-7zM320 64h8v1h-8zM853 22h5v1h-5zM863 27h6v1h-6zM856 43h4v1h-4zM849 51h3v1h-3zM863 91h7v1h-7zM869 105h3v1h-3zM864 125h7v1h-7zM859 126h6v1h-6zM857 130h8v1h-8zM851 136h2v1h-2zM868 148h4v1h-4zM861 161h7v1h-7zM1401 7h8v1h-8zM1403 20h9v1h-9zM1392 36h6v1h-6zM1392 58h2v1h-2zM1386 80h7v1h-7zM1386 163h7v1h-7zM577 94h4v2h-4zM834 22h3v2h-3zM834 68h3v2h-3zM834 146h3v2h-3zM1158 50h3v2h-3zM1158 136h3v2h-3zM1158 160h3v2h-3zM1311 34h4v2h-4zM1310 154h4v2h-4z"/><path fill="#ccff00" d="M321 16h4v1h-4zM331 34h5v1h-5zM330 48h4v1h-4zM331 74h7v1h-7zM333 110h7v1h-7zM321 143h2v1h-2zM864 135h2v1h-2zM870 186h7v1h-7zM1404 153h8v1h-8zM834 54h3v2h-3zM834 62h3v2h-3zM834 150h3v2h-3zM984 170h3v6h-3zM1324 64h4v2h-4z"/><path fill="#7dff00" d="M310 17h7v1h-7zM307 32h7v1h-7zM308 175h3v1h-3zM872 99h3v1h-3zM838 139h8v1h-8zM840 173h3v1h-3zM1366 116h4v1h-4zM1371 150h7v1h-7zM1039 39h2v3h-2zM1262 165h2v6h-2z"/><path fill="#fbff00" d="M327 19h5v1h-5zM315 81h6v1h-6zM865 36h4v1h-4zM859 38h2v1h-2zM867 48h3v1h-3zM863 66h2v1h-2zM850 88h9v1h-9zM859 127h6v1h-6zM861 181h5v1h-5zM1395 25h6v1h-6zM1377 98h7v1h-7zM1386 115h8v1h-8zM1399 186h3v1h-3zM577 52h4v2h-4zM576 114h4v2h-4zM577 180h4v2h-4zM819 98h4v2h-4zM834 160h3v2h-3zM1158 46h3v2h-3zM1158 156h3v2h-3zM1158 166h3v2h-3zM1310 46h4v2h-4zM1310 172h4v2h-4z"/><path fill="#edff00" d="M332 19h6v1h-6zM327 31h9v1h-9zM862 15h5v1h-5zM870 32h4v1h-4zM860 33h4v1h-4zM853 50h5v1h-5zM851 55h2v1h-2zM849 157h3v1h-3zM1388 33h6v1h-6zM1394 47h6v1h-6zM1389 81h3v1h-3zM1379 118h8v1h-8zM1394 132h2v1h-2zM1414 188h6v1h-6zM84 193h3v5h-3zM98 167h3v6h-3zM578 44h4v2h-4zM984 38h3v6h-3z"/><path fill="#e4ff00" d="M326 19h3v1h-3zM314 69h6v1h-6zM330 81h9v1h-9zM315 91h4v1h-4zM319 108h8v1h-8zM319 110h2v1h-2zM333 163h5v1h-5zM324 168h8v1h-8zM319 172h6v1h-6zM319 185h5v1h-5zM850 71h6v1h-6zM857 102h9v1h-9zM861 111h5v1h-5zM866 113h3v1h-3zM859 126h2v1h-2zM869 129h7v1h-7zM858 162h6v1h-6zM855 176h6v1h-6zM1390 14h3v1h-3zM1403 128h8v1h-8zM1383 142h2v1h-2zM1398 146h5v1h-5zM1394 174h9v1h-9zM1393 184h6v1h-6zM577 92h5v2h-5zM576 152h4v2h-4zM832 100h3v2h-3zM834 110h3v2h-3zM1160 120h3v2h-3zM1160 174h3v2h-3zM1158 180h3v2h-3zM1324 68h3v2h-3z"/><path fill="#adff00" d="M309 20h9v1h-9zM868 14h9v1h-9zM858 24h2v1h-2zM845 140h7v1h-7zM842 152h8v1h-8zM1415 38h6v1h-6zM1380 60h4v1h-4zM1379 123h7v1h-7zM1412 158h4v1h-4zM1387 171h9v1h-9zM344 60h3v2h-3zM344 118h4v2h-4zM344 134h4v2h-4zM344 162h3v2h-3zM942 135h3v6h-3zM942 156h3v2h-3z"/><path fill="#9eff00" d="M313 21h5v1h-5zM313 193h4v1h-4zM841 10h3v1h-3zM854 21h4v1h-4zM853 162h7v1h-7zM1374 100h9v1h-9zM1408 116h3v1h-3z"/><path fill="#c4ff00" d="M315 22h8v1h-8zM308 76h9v1h-9zM308 83h8v1h-8zM312 148h4v1h-4zM848 48h3v1h-3zM850 161h5v1h-5zM1390 19h6v1h-6zM1375 108h2v1h-2zM344 72h3v2h-3z"/><path fill="#c5ff00" d="M331 22h3v1h-3zM314 54h8v1h-8zM330 95h7v1h-7zM315 119h3v1h-3zM310 124h9v1h-9zM852 13h4v1h-4zM846 47h4v1h-4zM871 52h6v1h-6zM859 152h3v1h-3zM847 171h9v1h-9zM1389 40h5v1h-5zM1382 56h6v1h-6zM1382 70h6v1h-6zM1389 181h6v1h-6zM342 0h4v2h-4zM344 24h4v2h-4zM344 156h3v2h-3zM344 188h3v2h-3zM147 83h2v4h-2zM590 152h3v4h-3zM724 82h3v5h-3zM1324 162h4v2h-4zM1324 186h3v2h-3z"/><path fill="#b9ff00" d="M314 22h2v1h-2zM310 76h6v1h-6zM316 125h3v1h-3zM851 72h7v1h-7zM856 90h3v1h-3zM854 132h3v1h-3zM845 156h9v1h-9zM846 176h9v1h-9zM853 187h7v1h-7zM1401 126h6v1h-6zM1372 165h7v1h-7zM84 9h3v3h-3zM724 22h3v6h-3zM942 19h3v2h-3zM1324 30h3v2h-3zM1326 84h3v2h-3zM1324 130h3v2h-3z"/><path fill="#8cff00" d="M310 23h7v1h-7zM312 140h2v1h-2zM850 65h8v1h-8zM838 75h8v1h-8zM846 87h6v1h-6zM1386 29h3v1h-3zM1376 93h7v1h-7z"/><path fill="#dcff00" d="M325 24h5v1h-5zM323 48h3v1h-3zM863 0h2v1h-2zM847 99h5v1h-5zM870 124h3v1h-3zM1381 49h3v1h-3zM1377 123h6v1h-6zM1399 143h2v1h-2zM1404 178h6v1h-6zM577 98h4v2h-4zM577 138h4v2h-4zM576 148h5v2h-5zM834 122h3v2h-3zM834 140h3v2h-3zM834 182h3v2h-3zM1158 188h3v2h-3zM1326 96h4v2h-4zM1326 164h4v2h-4zM1324 172h3v2h-3z"/><path fill="#70ff00" d="M304 24h3v1h-3zM258 37h2v4h-2zM1151 50h2v4h-2z"/><path fill="#e8ff00" d="M322 26h5v1h-5zM326 98h7v1h-7zM861 27h5v1h-5zM868 30h4v1h-4zM852 47h8v1h-8zM861 82h8v1h-8zM846 114h5v1h-5zM852 115h6v1h-6zM867 192h6v1h-6zM1419 7h2v1h-2zM1411 23h7v1h-7zM1398 35h9v1h-9zM1388 43h4v1h-4zM1384 63h7v1h-7zM1395 83h3v1h-3zM1406 125h7v1h-7zM1403 167h3v1h-3zM577 136h4v2h-4zM834 24h3v2h-3zM834 56h3v2h-3zM1324 34h4v2h-4zM1326 46h3v2h-3zM1326 178h3v2h-3z"/><path fill="#91ff00" d="M310 26h2v1h-2zM311 88h9v1h-9zM311 112h6v1h-6zM312 169h9v1h-9zM846 16h4v1h-4zM851 40h7v1h-7zM1375 178h9v1h-9zM788 39h2v5h-2z"/><path fill="#b5ff00" d="M308 28h5v1h-5zM317 46h9v1h-9zM855 5h7v1h-7zM870 11h9v1h-9zM842 20h3v1h-3zM857 26h7v1h-7zM841 52h6v1h-6zM869 60h5v1h-5zM851 60h6v1h-6zM871 155h2v1h-2zM841 168h4v1h-4zM1385 19h6v1h-6zM1376 27h5v1h-5zM1409 49h9v1h-9zM1378 64h8v1h-8zM1400 110h4v1h-4zM344 130h4v2h-4zM344 164h4v2h-4zM724 74h3v6h-3zM984 186h3v3h-3zM1324 32h3v2h-3zM1324 52h3v2h-3zM1326 160h3v2h-3z"/><path fill="#d9ff00" d="M321 30h7v1h-7zM322 35h7v1h-7zM316 90h3v1h-3zM319 137h9v1h-9zM850 54h3v1h-3zM870 139h5v1h-5zM849 181h7v1h-7zM1401 50h7v1h-7zM1385 61h6v1h-6zM1378 123h3v1h-3zM578 78h5v2h-5zM577 168h4v2h-4zM834 60h3v2h-3zM834 120h3v2h-3zM834 184h3v2h-3zM942 14h3v4h-3zM984 73h3v5h-3zM1158 74h3v2h-3z"/><path fill="#d2ff00" d="M322 33h5v1h-5zM319 38h2v1h-2zM322 169h5v1h-5zM852 16h8v1h-8zM859 19h2v1h-2zM1418 17h3v1h-3zM1386 38h7v1h-7zM1385 153h9v1h-9zM1394 169h2v1h-2zM576 50h4v2h-4zM984 161h3v5h-3zM1324 76h3v2h-3zM1326 104h3v2h-3zM1326 116h3v2h-3z"/><path fill="#f5ff00" d="M330 35h8v1h-8zM320 40h3v1h-3zM869 69h5v1h-5zM850 70h7v1h-7zM1411 29h2v1h-2zM1386 47h6v1h-6zM1400 51h2v1h-2zM1384 92h8v1h-8zM1384 99h6v1h-6zM1380 131h8v1h-8zM577 110h4v2h-4zM1160 66h3v2h-3zM1158 94h3v2h-3z"/><path fill="#8bff00" d="M335 36h2v1h-2zM853 128h3v1h-3zM848 168h9v1h-9zM1411 13h9v1h-9zM1375 85h9v1h-9zM1403 97h7v1h-7z"/><path fill="#deff00" d="M326 37h4v1h-4zM323 37h2v1h-2zM317 63h5v1h-5zM851 47h2v1h-2zM857 65h4v1h-4zM852 89h8v1h-8zM1410 15h6v1h-6zM1405 99h3v1h-3zM1408 143h9v1h-9zM1394 162h4v1h-4zM1393 180h6v1h-6zM84 36h3v6h-3zM577 172h4v2h-4zM578 178h4v2h-4zM834 30h3v2h-3zM834 88h3v2h-3zM1326 56h3v2h-3z"/><path fill="#94ff00" d="M310 37h3v1h-3zM332 56h6v1h-6zM311 167h9v1h-9zM316 179h6v1h-6zM838 71h3v1h-3zM841 103h3v1h-3zM843 176h8v1h-8zM1376 30h5v1h-5zM1413 177h4v1h-4z"/><path fill="#daff00" d="M330 38h5v1h-5zM314 193h2v1h-2zM849 64h8v1h-8zM862 66h5v1h-5zM1399 87h4v1h-4zM98 134h3v3h-3zM577 46h5v2h-5zM832 94h3v2h-3zM1158 70h3v2h-3zM1160 124h3v2h-3zM1324 14h3v2h-3z"/><path fill="#d4ff00" d="M331 39h7v1h-7zM308 99h4v1h-4zM327 134h3v1h-3zM316 171h9v1h-9zM854 23h3v1h-3zM856 38h9v1h-9zM849 162h9v1h-9zM1383 15h9v1h-9zM1394 32h5v1h-5zM1376 57h2v1h-2zM1387 63h9v1h-9zM84 63h3v6h-3zM84 125h3v6h-3zM576 102h4v2h-4zM577 104h4v2h-4zM576 164h4v2h-4zM577 182h4v2h-4zM834 0h3v2h-3zM834 52h3v2h-3zM832 96h3v2h-3zM834 188h3v2h-3zM1324 0h3v2h-3zM1324 110h4v2h-4z"/><path fill="#aaff00" d="M302 39h9v1h-9zM306 70h7v1h-7zM315 90h9v1h-9zM334 130h3v1h-3zM314 169h8v1h-8zM317 170h2v1h-2zM333 181h3v1h-3zM850 184h9v1h-9zM1379 18h9v1h-9zM1407 69h6v1h-6zM344 38h3v2h-3zM344 168h3v2h-3zM942 143h3v5h-3zM984 26h3v3h-3z"/><path fill="#6cff00" d="M310 40h4v1h-4zM336 98h3v1h-3zM872 4h5v1h-5zM843 175h4v1h-4z"/><path fill="#acff00" d="M311 41h3v1h-3zM855 2h2v1h-2zM1390 9h2v1h-2zM1370 100h7v1h-7zM344 48h4v2h-4zM344 114h3v2h-3zM344 192h3v2h-3zM590 100h3v6h-3zM942 0h3v3h-3z"/><path fill="#d5ff00" d="M313 42h7v1h-7zM311 87h5v1h-5zM320 160h5v1h-5zM857 49h6v1h-6zM853 91h8v1h-8zM860 121h8v1h-8zM852 159h3v1h-3zM861 184h9v1h-9zM1380 59h9v1h-9zM1401 81h2v1h-2zM84 27h3v6h-3zM576 24h5v2h-5zM577 36h4v2h-4zM577 106h5v2h-5zM832 20h4v2h-4zM834 36h3v2h-3zM834 76h3v2h-3z"/><path fill="#a5ff00" d="M333 42h5v1h-5zM850 56h6v1h-6zM849 144h2v1h-2zM1386 18h6v1h-6zM344 88h3v2h-3zM344 104h3v2h-3zM344 112h3v2h-3zM344 158h3v2h-3zM724 90h3v3h-3z"/><path fill="#84ff00" d="M308 43h5v1h-5zM1151 92h2v3h-2zM1262 77h2v6h-2z"/><path fill="#e7ff00" d="M332 43h3v1h-3zM330 114h7v1h-7zM332 142h3v1h-3zM870 77h2v1h-2zM1379 89h8v1h-8zM1373 94h2v1h-2zM84 105h3v3h-3zM98 63h3v2h-3zM834 98h3v2h-3zM834 152h3v2h-3zM834 154h3v2h-3zM1324 98h3v2h-3zM1326 114h3v2h-3z"/><path fill="#95ff00" d="M313 44h6v1h-6zM309 58h9v1h-9zM312 94h3v1h-3zM1409 16h9v1h-9zM1377 111h5v1h-5zM1151 134h2v3h-2zM1151 150h2v5h-2z"/><path fill="#afff00" d="M334 44h5v1h-5zM854 67h3v1h-3zM852 178h8v1h-8zM851 182h6v1h-6zM856 184h7v1h-7zM1392 6h5v1h-5zM1380 40h3v1h-3zM1379 107h4v1h-4zM344 62h3v2h-3zM147 67h2v3h-2z"/><path fill="#c2ff00" d="M312 44h2v1h-2zM315 58h8v1h-8zM311 65h9v1h-9zM318 134h4v1h-4zM319 156h9v1h-9zM845 34h7v1h-7zM856 53h8v1h-8zM855 76h2v1h-2zM861 85h3v1h-3zM854 159h6v1h-6zM861 164h2v1h-2zM1403 32h8v1h-8zM1409 138h3v1h-3zM84 163h3v4h-3zM84 180h3v4h-3zM98 23h3v6h-3zM724 32h3v5h-3zM788 24h2v2h-2zM788 27h2v5h-2zM984 129h3v4h-3zM1324 22h3v2h-3zM1324 122h4v2h-4z"/><path fill="#89ff00" d="M307 44h9v1h-9zM314 93h9v1h-9zM313 128h7v1h-7zM309 132h7v1h-7zM1371 136h8v1h-8zM1374 141h6v1h-6z"/><path fill="#ebff00" d="M310 46h9v1h-9zM312 60h3v1h-3zM313 100h4v1h-4zM317 113h8v1h-8zM328 141h4v1h-4zM325 144h9v1h-9zM318 154h2v1h-2zM855 81h3v1h-3zM867 121h7v1h-7zM855 133h7v1h-7zM866 138h2v1h-2zM863 183h7v1h-7zM1400 66h9v1h-9zM1387 110h4v1h-4zM1401 169h2v1h-2zM1416 191h8v1h-8zM578 186h4v2h-4zM834 46h3v2h-3zM834 74h3v2h-3zM834 190h3v2h-3zM1158 56h3v2h-3z"/><path fill="#71ff00" d="M312 47h3v1h-3zM1039 99h2v4h-2zM1039 104h2v6h-2z"/><path fill="#b7ff00" d="M315 48h5v1h-5zM320 132h9v1h-9zM321 172h4v1h-4zM853 21h6v1h-6zM847 137h8v1h-8zM855 174h7v1h-7zM858 174h2v1h-2zM1400 71h7v1h-7zM1405 152h7v1h-7zM344 152h3v2h-3zM1324 28h3v2h-3zM1324 182h3v2h-3z"/><path fill="#a7ff00" d="M306 48h3v1h-3zM317 124h8v1h-8zM304 128h8v1h-8zM317 153h9v1h-9zM844 21h6v1h-6zM853 76h3v1h-3zM856 90h2v1h-2zM854 115h8v1h-8zM854 150h2v1h-2zM1380 62h9v1h-9zM344 106h3v2h-3zM344 190h3v2h-3zM147 17h2v6h-2zM147 71h2v6h-2z"/><path fill="#e5ff00" d="M323 49h6v1h-6zM319 92h4v1h-4zM318 160h6v1h-6zM850 18h2v1h-2zM856 100h6v1h-6zM846 117h8v1h-8zM852 126h4v1h-4zM855 128h2v1h-2zM1397 28h6v1h-6zM1389 82h8v1h-8zM1402 91h9v1h-9zM1387 189h9v1h-9zM577 22h4v2h-4zM578 28h4v2h-4zM577 90h4v2h-4zM577 154h4v2h-4zM590 49h3v4h-3zM590 108h3v3h-3zM834 174h4v2h-4zM1324 188h3v2h-3z"/><path fill="#6aff00" d="M334 50h4v1h-4zM309 68h6v1h-6zM1374 55h5v1h-5zM258 121h2v6h-2zM1262 51h2v2h-2z"/><path fill="#81ff00" d="M306 52h5v1h-5zM1369 134h4v1h-4zM703 109h2v6h-2zM1262 107h2v6h-2zM1262 159h2v3h-2z"/><path fill="#f9ff00" d="M320 53h7v1h-7zM325 64h7v1h-7zM314 71h6v1h-6zM315 91h7v1h-7zM328 157h3v1h-3zM866 17h5v1h-5zM861 34h9v1h-9zM1396 70h8v1h-8zM1380 70h9v1h-9zM1405 84h2v1h-2zM1391 114h7v1h-7zM1379 118h8v1h-8zM1407 181h8v1h-8zM1406 186h4v1h-4zM820 66h4v2h-4zM834 32h3v2h-3zM834 34h3v2h-3zM834 70h3v2h-3zM1158 122h3v2h-3zM1311 16h5v2h-5z"/><path fill="#72ff00" d="M308 59h5v1h-5zM306 119h5v1h-5zM847 74h6v1h-6zM841 89h3v1h-3zM844 98h9v1h-9zM258 146h2v5h-2zM1039 89h2v2h-2z"/><path fill="#9bff00" d="M315 60h6v1h-6zM318 140h2v1h-2zM1373 39h3v1h-3zM344 128h4v2h-4z"/><path fill="#b6ff00" d="M318 60h9v1h-9zM313 131h9v1h-9zM331 150h8v1h-8zM849 19h3v1h-3zM853 88h9v1h-9zM853 105h6v1h-6zM857 188h3v1h-3zM855 190h4v1h-4zM1412 8h5v1h-5zM1374 117h9v1h-9zM1407 148h7v1h-7zM342 8h3v2h-3zM344 94h4v2h-4zM342 110h3v2h-3zM344 120h4v2h-4zM344 138h4v2h-4zM344 166h3v2h-3zM84 43h3v2h-3zM942 111h3v6h-3zM984 54h3v3h-3z"/><path fill="#8dff00" d="M315 61h4v1h-4zM310 135h8v1h-8zM307 161h8v1h-8zM855 158h2v1h-2zM1404 133h8v1h-8zM1151 55h2v6h-2zM1262 98h2v2h-2z"/><path fill="#a3ff00" d="M310 63h6v1h-6zM314 66h8v1h-8zM344 14h3v2h-3zM344 36h3v2h-3zM344 100h3v2h-3zM344 116h3v2h-3z"/><path fill="#c8ff00" d="M309 64h7v1h-7zM319 80h8v1h-8zM319 102h7v1h-7zM305 103h9v1h-9zM315 141h6v1h-6zM318 183h3v1h-3zM310 189h6v1h-6zM850 107h7v1h-7zM868 116h9v1h-9zM851 118h7v1h-7zM872 154h5v1h-5zM1407 47h4v1h-4zM1384 52h4v1h-4zM344 146h3v2h-3zM344 172h3v2h-3zM590 134h3v4h-3zM1324 54h3v2h-3zM1326 112h3v2h-3z"/><path fill="#8eff00" d="M312 65h7v1h-7zM332 80h6v1h-6zM311 82h7v1h-7zM311 100h8v1h-8zM308 111h3v1h-3zM309 143h7v1h-7zM1368 53h7v1h-7zM1366 67h7v1h-7zM1381 168h2v1h-2zM703 93h2v5h-2z"/><path fill="#7eff00" d="M306 65h7v1h-7zM1416 17h2v1h-2zM1039 30h2v6h-2zM1262 144h2v3h-2z"/><path fill="#d0ff00" d="M333 68h4v1h-4zM329 81h9v1h-9zM317 98h2v1h-2zM324 111h8v1h-8zM868 30h9v1h-9zM869 44h7v1h-7zM862 130h6v1h-6zM859 137h3v1h-3zM1388 60h9v1h-9zM1377 75h2v1h-2zM1384 88h6v1h-6zM1404 144h7v1h-7zM1379 176h5v1h-5zM1402 181h9v1h-9zM1394 190h8v1h-8zM576 120h4v2h-4zM577 162h4v2h-4zM834 80h3v2h-3zM1324 48h4v2h-4z"/><path fill="#92ff00" d="M314 70h2v1h-2zM308 175h3v1h-3zM853 168h3v1h-3zM1379 58h2v1h-2zM1406 71h7v1h-7zM724 15h3v2h-3zM1262 131h2v3h-2z"/><path fill="#a9ff00" d="M302 70h7v1h-7zM330 94h8v1h-8zM322 120h2v1h-2zM851 12h5v1h-5zM846 80h7v1h-7zM850 162h7v1h-7zM872 165h4v1h-4zM842 178h8v1h-8zM1380 35h5v1h-5zM1409 65h6v1h-6zM344 98h3v2h-3zM147 31h2v5h-2z"/><path fill="#a0ff00" d="M311 72h4v1h-4zM317 99h6v1h-6zM847 18h9v1h-9zM855 61h3v1h-3zM871 134h5v1h-5zM1378 10h7v1h-7zM1375 132h9v1h-9zM1423 189h2v1h-2zM344 22h3v2h-3zM344 50h3v2h-3zM342 154h3v2h-3zM344 160h3v2h-3z"/><path fill="#beff00" d="M307 74h8v1h-8zM315 192h6v1h-6zM860 157h4v1h-4zM1407 1h8v1h-8zM1405 51h4v1h-4zM1413 129h2v1h-2zM342 4h3v2h-3zM344 42h3v2h-3zM342 174h3v2h-3zM98 0h3v6h-3zM147 25h2v4h-2zM147 142h2v2h-2zM724 98h3v3h-3zM984 155h3v5h-3zM1326 88h3v2h-3zM1324 126h4v2h-4zM1324 132h4v2h-4z"/><path fill="#e0ff00" d="M323 75h4v1h-4zM330 118h7v1h-7zM321 152h7v1h-7zM315 183h9v1h-9zM872 3h2v1h-2zM862 35h7v1h-7zM861 54h6v1h-6zM860 77h7v1h-7zM856 142h5v1h-5zM1384 14h4v1h-4zM1404 60h2v1h-2zM1383 128h5v1h-5zM578 40h4v2h-4zM578 72h4v2h-4zM576 128h4v2h-4zM590 26h3v3h-3zM834 2h3v2h-3zM834 18h3v2h-3zM834 130h4v2h-4zM984 118h3v3h-3zM1158 84h3v2h-3zM1326 86h3v2h-3zM1326 92h3v2h-3zM1324 174h3v2h-3z"/><path fill="#f7ff00" d="M311 75h7v1h-7zM323 100h3v1h-3zM320 126h2v1h-2zM329 132h7v1h-7zM847 16h6v1h-6zM861 25h6v1h-6zM864 43h6v1h-6zM846 63h7v1h-7zM849 80h7v1h-7zM861 125h4v1h-4zM866 131h6v1h-6zM864 147h8v1h-8zM868 153h8v1h-8zM855 167h3v1h-3zM863 185h6v1h-6zM1402 0h7v1h-7zM1399 28h2v1h-2zM1412 47h4v1h-4zM1390 106h8v1h-8zM1411 162h3v1h-3zM1396 167h4v1h-4zM577 20h5v2h-5zM819 34h5v2h-5zM834 116h3v2h-3zM834 168h3v2h-3zM834 178h3v2h-3z"/><path fill="#a4ff00" d="M318 76h5v1h-5zM309 163h4v1h-4zM857 6h3v1h-3zM849 73h2v1h-2zM1409 155h4v1h-4zM1386 179h8v1h-8zM344 16h3v2h-3zM342 136h3v2h-3zM147 59h2v4h-2z"/><path fill="#9fff00" d="M311 76h5v1h-5zM312 87h9v1h-9zM331 186h8v1h-8zM316 187h6v1h-6zM856 137h5v1h-5zM870 143h8v1h-8zM849 171h9v1h-9zM1410 31h2v1h-2zM1375 173h8v1h-8zM1386 184h7v1h-7zM344 54h3v2h-3zM344 56h3v2h-3z"/><path fill="#aeff00" d="M332 79h6v1h-6zM333 162h6v1h-6zM1404 63h2v1h-2zM1398 90h9v1h-9zM1403 148h6v1h-6zM1411 151h8v1h-8zM1410 153h5v1h-5zM344 184h3v2h-3zM942 71h3v2h-3z"/><path fill="#74ff00" d="M313 80h3v1h-3zM1368 144h6v1h-6zM1151 25h2v5h-2zM1262 17h2v5h-2z"/><path fill="#bcff00" d="M316 82h2v1h-2zM848 122h9v1h-9zM1381 78h9v1h-9zM344 124h3v2h-3zM147 122h2v3h-2zM724 112h3v4h-3z"/><path fill="#c3ff00" d="M331 82h6v1h-6zM329 96h7v1h-7zM334 110h5v1h-5zM315 115h5v1h-5zM334 123h6v1h-6zM870 20h4v1h-4zM850 82h4v1h-4zM851 82h7v1h-7zM853 98h7v1h-7zM1377 105h3v1h-3zM1407 131h7v1h-7zM1371 145h6v1h-6zM1410 180h7v1h-7zM344 28h3v2h-3zM344 82h3v2h-3zM590 76h3v3h-3zM984 136h3v6h-3zM1324 176h3v2h-3zM1324 190h3v2h-3z"/><path fill="#d6ff00" d="M328 83h7v1h-7zM324 139h6v1h-6zM313 143h7v1h-7zM849 24h8v1h-8zM859 26h5v1h-5zM861 44h6v1h-6zM843 78h5v1h-5zM856 109h5v1h-5zM1395 6h8v1h-8zM1397 12h2v1h-2zM1372 73h9v1h-9zM1387 101h6v1h-6zM1378 120h6v1h-6zM1379 165h4v1h-4zM98 99h3v5h-3zM576 8h4v2h-4zM577 140h4v2h-4zM1324 10h3v2h-3zM1324 106h3v2h-3zM1324 150h3v2h-3z"/><path fill="#ecff00" d="M333 84h2v1h-2zM321 148h2v1h-2zM323 179h2v1h-2zM865 2h2v1h-2zM868 18h2v1h-2zM863 57h3v1h-3zM852 75h2v1h-2zM863 90h2v1h-2zM856 191h9v1h-9zM1413 0h3v1h-3zM1385 62h4v1h-4zM1402 68h2v1h-2zM1401 95h5v1h-5zM1370 110h9v1h-9zM1411 188h4v1h-4zM98 15h3v5h-3zM576 14h4v2h-4z"/><path fill="#67ff00" d="M303 84h7v1h-7zM303 155h8v1h-8zM1372 44h5v1h-5zM258 155h2v6h-2zM258 164h2v6h-2zM1262 151h2v5h-2z"/><path fill="#87ff00" d="M306 87h9v1h-9zM330 88h9v1h-9zM309 133h6v1h-6zM846 13h7v1h-7zM872 80h3v1h-3zM843 145h4v1h-4zM1381 7h6v1h-6zM1410 59h4v1h-4zM1367 85h5v1h-5zM147 80h2v2h-2z"/><path fill="#f4ff00" d="M328 87h4v1h-4zM328 129h4v1h-4zM862 48h7v1h-7zM854 103h3v1h-3zM851 154h8v1h-8zM1389 168h4v1h-4zM1400 174h3v1h-3zM1399 185h8v1h-8zM84 46h3v2h-3zM578 54h4v2h-4zM834 84h3v2h-3zM834 114h4v2h-4zM1158 172h3v2h-3z"/><path fill="#bbff00" d="M316 88h5v1h-5zM319 172h5v1h-5zM870 146h6v1h-6zM344 2h4v2h-4zM724 102h3v6h-3zM984 181h3v3h-3zM1324 118h3v2h-3z"/><path fill="#7fff00" d="M305 93h6v1h-6zM332 102h9v1h-9zM848 190h3v1h-3zM1371 130h3v1h-3zM1417 166h4v1h-4zM703 84h2v3h-2zM1039 16h2v6h-2zM1151 113h2v6h-2z"/><path fill="#7bff00" d="M308 93h3v1h-3zM1151 0h2v3h-2z"/><path fill="#a2ff00" d="M312 99h5v1h-5zM315 141h4v1h-4zM332 181h7v1h-7zM853 51h2v1h-2zM1373 64h2v1h-2zM1378 182h7v1h-7zM342 64h3v2h-3zM342 66h3v2h-3z"/><path fill="#b2ff00" d="M316 107h2v1h-2zM322 111h4v1h-4zM841 127h6v1h-6zM845 135h3v1h-3zM1382 42h9v1h-9zM1412 50h7v1h-7zM342 46h3v2h-3zM344 182h3v2h-3zM147 52h2v5h-2zM590 33h3v2h-3zM942 99h3v2h-3zM942 152h3v3h-3zM942 161h3v6h-3zM1326 120h3v2h-3zM1324 144h4v2h-4z"/><path fill="#fdff00" d="M324 107h7v1h-7zM318 107h9v1h-9zM312 159h6v1h-6zM323 165h5v1h-5zM324 191h6v1h-6zM863 32h3v1h-3zM854 72h8v1h-8zM867 138h5v1h-5zM861 165h2v1h-2zM866 190h4v1h-4zM1386 33h6v1h-6zM1386 38h8v1h-8zM1398 48h7v1h-7zM1389 111h3v1h-3zM1396 156h6v1h-6zM1411 193h8v1h-8zM1402 193h5v1h-5zM577 4h5v2h-5zM577 188h4v2h-4zM819 58h4v2h-4zM819 88h5v2h-5zM819 112h4v2h-4zM819 176h4v2h-4zM1310 130h4v2h-4z"/><path fill="#64ff00" d="M311 107h5v1h-5zM842 193h9v1h-9zM1372 80h8v1h-8zM258 106h2v4h-2z"/><path fill="#c1ff00" d="M310 109h3v1h-3zM315 159h6v1h-6zM856 22h6v1h-6zM857 68h8v1h-8zM847 79h8v1h-8zM859 125h4v1h-4zM849 178h9v1h-9zM851 183h8v1h-8zM1383 20h3v1h-3zM1401 45h9v1h-9zM1416 56h5v1h-5zM1405 67h8v1h-8zM1375 118h5v1h-5zM1390 158h4v1h-4zM344 12h3v2h-3zM344 140h3v2h-3zM84 60h3v2h-3zM98 145h3v3h-3zM147 43h2v6h-2zM788 5h2v4h-2zM942 180h3v6h-3zM1326 80h3v2h-3zM1326 100h3v2h-3zM1326 168h3v2h-3z"/><path fill="#f6ff00" d="M319 110h6v1h-6zM322 157h5v1h-5zM330 158h8v1h-8zM861 146h8v1h-8zM1376 107h7v1h-7zM1384 142h3v1h-3zM1397 154h9v1h-9zM578 38h4v2h-4zM834 6h3v2h-3zM832 104h3v2h-3zM834 170h4v2h-4z"/><path fill="#d1ff00" d="M312 118h3v1h-3zM308 119h7v1h-7zM316 190h2v1h-2zM851 29h4v1h-4zM867 81h9v1h-9zM851 145h6v1h-6zM856 182h8v1h-8zM861 189h2v1h-2zM1405 83h3v1h-3zM1384 166h5v1h-5zM576 100h5v2h-5zM834 8h3v2h-3zM1324 2h4v2h-4zM1324 124h3v2h-3zM1326 170h3v2h-3z"/><path fill="#baff00" d="M322 120h2v1h-2zM858 24h4v1h-4zM849 63h2v1h-2zM849 135h2v1h-2zM1414 41h2v1h-2zM1368 65h5v1h-5zM1408 67h5v1h-5zM1380 135h5v1h-5zM342 40h3v2h-3zM344 132h3v2h-3zM147 94h2v5h-2zM724 39h3v6h-3zM1324 90h3v2h-3z"/><path fill="#abff00" d="M333 120h7v1h-7zM319 126h7v1h-7zM854 22h8v1h-8zM851 72h7v1h-7zM855 165h4v1h-4zM848 191h7v1h-7zM1380 42h3v1h-3zM1409 44h2v1h-2zM1406 164h4v1h-4zM1388 171h4v1h-4z"/><path fill="#b4ff00" d="M319 122h2v1h-2zM313 166h7v1h-7zM869 34h5v1h-5zM859 136h2v1h-2zM842 180h6v1h-6zM1406 24h9v1h-9zM344 74h3v2h-3zM344 86h3v2h-3zM344 170h3v2h-3zM344 176h3v2h-3zM147 102h2v6h-2zM590 160h3v5h-3zM1324 50h3v2h-3z"/><path fill="#97ff00" d="M314 126h3v1h-3zM1414 37h2v1h-2zM1409 57h7v1h-7zM1039 119h2v2h-2z"/><path fill="#98ff00" d="M311 127h6v1h-6zM854 189h5v1h-5zM1420 192h6v1h-6zM1039 61h2v3h-2z"/><path fill="#83ff00" d="M314 130h3v1h-3zM305 166h5v1h-5zM845 76h7v1h-7zM844 100h6v1h-6zM1410 53h7v1h-7zM1039 73h2v2h-2zM1151 168h2v2h-2zM1262 38h2v6h-2z"/><path fill="#d8ff00" d="M314 131h8v1h-8zM327 146h3v1h-3zM313 184h7v1h-7zM852 4h3v1h-3zM867 23h8v1h-8zM851 31h7v1h-7zM864 45h2v1h-2zM857 54h5v1h-5zM868 64h5v1h-5zM856 106h4v1h-4zM863 108h7v1h-7zM852 140h5v1h-5zM860 160h7v1h-7zM860 185h3v1h-3zM1401 125h6v1h-6zM1413 163h2v1h-2zM84 97h3v4h-3zM84 158h3v4h-3zM98 82h3v2h-3zM590 0h3v5h-3zM942 60h3v4h-3zM1324 78h3v2h-3z"/><path fill="#79ff00" d="M337 135h2v1h-2zM870 104h7v1h-7zM1151 33h2v3h-2z"/><path fill="#f3ff00" d="M317 136h7v1h-7zM326 145h2v1h-2zM859 21h2v1h-2zM866 43h6v1h-6zM861 51h7v1h-7zM861 95h9v1h-9zM857 110h8v1h-8zM865 134h7v1h-7zM856 167h2v1h-2zM1393 11h4v1h-4zM1389 14h3v1h-3zM1407 26h2v1h-2zM1385 78h5v1h-5zM1388 87h2v1h-2zM1397 99h8v1h-8zM1386 143h5v1h-5zM1389 156h7v1h-7zM1411 184h6v1h-6zM84 118h3v4h-3zM942 33h3v2h-3zM1158 72h3v2h-3z"/><path fill="#68ff00" d="M303 137h9v1h-9zM1380 42h3v1h-3zM1367 95h6v1h-6zM1262 10h2v5h-2z"/><path fill="#a8ff00" d="M309 158h6v1h-6zM844 79h4v1h-4zM1381 29h6v1h-6zM1382 52h7v1h-7zM1410 68h4v1h-4zM1414 172h2v1h-2zM342 18h3v2h-3zM344 26h3v2h-3zM344 178h4v2h-4zM942 51h3v5h-3z"/><path fill="#d7ff00" d="M334 161h3v1h-3zM322 188h7v1h-7zM853 0h4v1h-4zM848 11h9v1h-9zM859 15h5v1h-5zM853 93h5v1h-5zM853 165h6v1h-6zM858 171h2v1h-2zM1387 33h7v1h-7zM1403 79h6v1h-6zM1384 90h6v1h-6zM1387 122h6v1h-6zM1392 171h8v1h-8zM84 21h3v2h-3zM577 34h4v2h-4zM577 80h5v2h-5zM590 167h3v6h-3zM834 14h3v2h-3zM834 66h4v2h-4zM1324 4h4v2h-4z"/><path fill="#bfff00" d="M335 165h3v1h-3zM319 171h9v1h-9zM1368 143h6v1h-6zM1389 145h2v1h-2zM344 78h3v2h-3zM344 126h3v2h-3zM1324 8h3v2h-3zM1326 16h3v2h-3zM1324 42h4v2h-4zM1324 94h3v2h-3zM1324 142h3v2h-3z"/><path fill="#b8ff00" d="M315 166h4v1h-4zM858 56h3v1h-3zM849 96h5v1h-5zM1406 103h4v1h-4zM1398 109h9v1h-9zM1380 111h7v1h-7zM1405 132h3v1h-3zM1407 158h7v1h-7zM1381 166h7v1h-7zM344 150h3v2h-3zM344 186h3v2h-3zM724 54h3v3h-3zM1324 20h3v2h-3z"/><path fill="#90ff00" d="M333 168h7v1h-7zM313 177h7v1h-7zM841 127h8v1h-8zM1376 75h6v1h-6zM1412 124h3v1h-3zM1403 127h7v1h-7zM1151 180h2v4h-2z"/><path fill="#bdff00" d="M320 170h5v1h-5zM856 109h5v1h-5zM858 120h4v1h-4zM857 167h4v1h-4zM856 177h2v1h-2zM1420 1h6v1h-6zM1404 50h4v1h-4zM1402 82h5v1h-5zM1365 104h8v1h-8zM1385 152h2v1h-2zM1380 180h7v1h-7zM344 30h3v2h-3zM98 129h3v2h-3zM1326 72h4v2h-4zM1326 74h3v2h-3zM1324 136h4v2h-4zM1324 192h4v2h-4z"/><path fill="#9cff00" d="M305 177h5v1h-5zM850 163h6v1h-6zM1377 86h5v1h-5zM1377 149h2v1h-2zM1388 183h6v1h-6zM344 34h3v2h-3zM344 84h3v2h-3zM344 142h4v2h-4zM1039 94h2v3h-2z"/><path fill="#65ff00" d="M311 180h2v1h-2zM837 89h9v1h-9zM842 111h2v1h-2zM258 0h2v6h-2zM1151 141h2v5h-2z"/><path fill="#6dff00" d="M310 187h2v1h-2zM841 189h5v1h-5z"/><path fill="#96ff00" d="M312 188h3v1h-3zM845 128h4v1h-4zM1371 74h7v1h-7zM1404 122h5v1h-5zM1412 186h8v1h-8zM1151 97h2v5h-2z"/><path fill="#c7ff00" d="M321 191h3v1h-3zM844 17h7v1h-7zM868 156h8v1h-8zM847 183h2v1h-2zM1395 25h3v1h-3zM1367 86h9v1h-9zM1375 91h9v1h-9zM1416 157h3v1h-3zM344 44h3v2h-3zM342 68h4v2h-4zM344 102h3v2h-3zM98 174h3v2h-3zM147 12h2v2h-2zM147 88h2v3h-2zM590 20h3v3h-3zM984 193h3v5h-3z"/><path fill="#8aff00" d="M851 1h5v1h-5zM849 50h7v1h-7zM869 77h7v1h-7zM837 97h9v1h-9zM847 143h8v1h-8zM1381 12h5v1h-5zM724 19h3v2h-3zM1151 21h2v2h-2zM1262 136h2v6h-2zM1262 190h2v5h-2z"/><path fill="#77ff00" d="M871 8h6v1h-6zM839 58h8v1h-8zM844 99h6v1h-6zM1373 81h2v1h-2zM1151 103h2v3h-2z"/><path fill="#86ff00" d="M850 12h5v1h-5zM1377 5h4v1h-4zM147 109h2v5h-2zM147 157h2v5h-2zM703 80h2v3h-2zM703 116h2v5h-2z"/><path fill="#88ff00" d="M844 13h8v1h-8zM854 172h2v1h-2zM147 127h2v6h-2zM147 135h2v4h-2zM1262 184h2v5h-2z"/><path fill="#9aff00" d="M843 15h9v1h-9zM853 170h6v1h-6zM344 92h4v2h-4z"/><path fill="#f2ff00" d="M868 23h9v1h-9zM870 28h3v1h-3zM861 34h4v1h-4zM867 35h7v1h-7zM847 59h8v1h-8zM860 182h6v1h-6zM846 188h7v1h-7zM1412 6h7v1h-7zM1388 21h9v1h-9zM1403 75h3v1h-3zM1385 91h6v1h-6zM1400 185h2v1h-2zM98 149h3v6h-3zM577 66h4v2h-4zM984 88h3v6h-3zM1158 54h3v2h-3zM1158 90h3v2h-3zM1158 108h3v2h-3zM1158 132h3v2h-3z"/><path fill="#e3ff00" d="M847 25h6v1h-6zM851 64h4v1h-4zM867 151h4v1h-4zM856 184h6v1h-6zM1396 12h4v1h-4zM1398 20h6v1h-6zM1392 43h2v1h-2zM1410 150h7v1h-7zM1389 165h8v1h-8zM84 89h3v5h-3zM576 146h5v2h-5zM834 40h4v2h-4zM834 44h3v2h-3z"/><path fill="#66ff00" d="M837 36h3v1h-3zM873 109h4v1h-4zM844 148h2v1h-2zM845 179h2v1h-2zM258 89h2v5h-2zM1262 57h2v5h-2z"/><path fill="#62ff00" d="M842 78h5v1h-5zM258 80h2v6h-2z"/><path fill="#6eff00" d="M846 82h4v1h-4zM1262 91h2v3h-2z"/><path fill="#75ff00" d="M838 93h4v1h-4zM847 101h2v1h-2zM837 102h8v1h-8zM1421 8h6v1h-6zM1413 39h7v1h-7zM1262 47h2v3h-2z"/><path fill="#9dff00" d="M851 95h7v1h-7zM849 111h4v1h-4zM1418 4h3v1h-3zM1387 30h3v1h-3zM1384 35h3v1h-3zM1380 126h2v1h-2zM342 6h3v2h-3zM344 32h3v2h-3z"/><path fill="#93ff00" d="M844 119h6v1h-6zM788 10h2v2h-2zM1039 23h2v6h-2z"/><path fill="#7cff00" d="M845 121h8v1h-8zM852 136h3v1h-3zM839 180h8v1h-8zM1417 157h2v1h-2zM1370 171h5v1h-5zM703 89h2v2h-2zM1039 79h2v6h-2zM1151 38h2v5h-2z"/><path fill="#6bff00" d="M843 121h8v1h-8zM1367 136h5v1h-5zM1151 44h2v2h-2zM1151 124h2v6h-2z"/><path fill="#61ff00" d="M845 129h3v1h-3zM1409 90h5v1h-5z"/><path fill="#73ff00" d="M844 149h4v1h-4zM873 158h2v1h-2zM843 183h5v1h-5zM847 186h5v1h-5z"/><path fill="#82ff00" d="M1375 52h2v1h-2zM1408 90h4v1h-4z"/><path fill="#6fff00" d="M1374 129h5v1h-5zM342 0h7v1h-7zM342 4h7v1h-7zM342 10h7v1h-7zM342 12h7v1h-7zM342 14h7v1h-7zM342 16h7v1h-7zM342 20h7v1h-7zM342 22h7v1h-7zM342 28h7v1h-7zM342 32h7v1h-7zM342 40h7v1h-7zM342 42h7v1h-7zM342 44h7v1h-7zM342 48h7v1h-7zM342 50h7v1h-7zM342 56h7v1h-7zM342 58h7v1h-7zM342 60h7v1h-7zM342 62h7v1h-7zM342 66h7v1h-7zM342 68h7v1h-7zM342 72h7v1h-7zM342 74h7v1h-7zM342 78h7v1h-7zM342 80h7v1h-7zM342 84h7v1h-7zM342 88h7v1h-7zM342 94h7v1h-7zM342 100h7v1h-7zM342 102h7v1h-7zM342 104h7v1h-7zM342 106h7v1h-7zM342 114h7v1h-7zM342 120h7v1h-7zM342 130h7v1h-7zM342 132h7v1h-7zM342 136h7v1h-7zM342 146h7v1h-7zM342 148h7v1h-7zM342 152h7v1h-7zM342 154h7v1h-7zM342 156h7v1h-7zM342 158h7v1h-7zM342 168h7v1h-7zM342 170h7v1h-7zM342 176h7v1h-7zM342 178h7v1h-7zM342 180h7v1h-7zM342 182h7v1h-7zM342 184h7v1h-7zM342 188h7v1h-7zM342 192h7v1h-7zM258 171h2v2h-2zM575 4h8v1h-8zM575 6h8v1h-8zM575 16h8v1h-8zM575 18h8v1h-8zM575 22h8v1h-8zM575 24h8v1h-8zM575 26h8v1h-8zM575 28h8v1h-8zM575 30h8v1h-8zM575 42h8v1h-8zM575 44h8v1h-8zM575 52h8v1h-8zM575 56h8v1h-8zM575 58h8v1h-8zM575 60h8v1h-8zM575 62h8v1h-8zM575 66h8v1h-8zM575 68h8v1h-8zM575 70h8v1h-8zM575 80h8v1h-8zM575 84h8v1h-8zM575 90h8v1h-8zM575 92h8v1h-8zM575 98h8v1h-8zM575 100h8v1h-8zM575 106h8v1h-8zM575 108h8v1h-8zM575 114h8v1h-8zM575 120h8v1h-8zM575 122h8v1h-8zM575 124h8v1h-8zM575 126h8v1h-8zM575 128h8v1h-8zM575 130h8v1h-8zM575 134h8v1h-8zM575 136h8v1h-8zM575 140h8v1h-8zM575 148h8v1h-8zM575 150h8v1h-8zM575 152h8v1h-8zM575 154h8v1h-8zM575 166h8v1h-8zM575 172h8v1h-8zM575 174h8v1h-8zM575 176h8v1h-8zM575 178h8v1h-8zM575 180h8v1h-8zM575 182h8v1h-8zM575 188h8v1h-8zM817 0h8v1h-8zM817 2h8v1h-8zM817 4h8v1h-8zM817 6h8v1h-8zM817 8h8v1h-8zM817 10h8v1h-8zM817 14h8v1h-8zM817 20h8v1h-8zM817 24h8v1h-8zM817 26h8v1h-8zM817 32h8v1h-8zM817 34h8v1h-8zM817 38h8v1h-8zM817 42h8v1h-8zM817 46h8v1h-8zM817 48h8v1h-8zM817 50h8v1h-8zM817 54h8v1h-8zM817 60h8v1h-8zM817 70h8v1h-8zM817 74h8v1h-8zM817 82h8v1h-8zM817 90h8v1h-8zM817 92h8v1h-8zM817 94h8v1h-8zM817 96h8v1h-8zM817 102h8v1h-8zM817 108h8v1h-8zM817 112h8v1h-8zM817 118h8v1h-8zM817 124h8v1h-8zM817 126h8v1h-8zM817 130h8v1h-8zM817 132h8v1h-8zM817 134h8v1h-8zM817 138h8v1h-8zM817 140h8v1h-8zM817 146h8v1h-8zM817 158h8v1h-8zM817 160h8v1h-8zM817 166h8v1h-8zM817 170h8v1h-8zM817 172h8v1h-8zM817 176h8v1h-8zM817 178h8v1h-8zM817 180h8v1h-8zM817 184h8v1h-8zM817 186h8v1h-8zM817 188h8v1h-8zM832 0h7v1h-7zM832 4h7v1h-7zM832 6h7v1h-7zM832 12h7v1h-7zM832 16h7v1h-7zM832 20h7v1h-7zM832 26h7v1h-7zM832 32h7v1h-7zM832 34h7v1h-7zM832 46h7v1h-7zM832 50h7v1h-7zM832 52h7v1h-7zM832 54h7v1h-7zM832 56h7v1h-7zM832 58h7v1h-7zM832 60h7v1h-7zM832 66h7v1h-7zM832 72h7v1h-7zM832 76h7v1h-7zM832 80h7v1h-7zM832 86h7v1h-7zM832 88h7v1h-7zM832 90h7v1h-7zM832 94h7v1h-7zM832 96h7v1h-7zM832 102h7v1h-7zM832 108h7v1h-7zM832 110h7v1h-7zM832 116h7v1h-7zM832 128h7v1h-7zM832 132h7v1h-7zM832 140h7v1h-7zM832 144h7v1h-7zM832 150h7v1h-7zM832 152h7v1h-7zM832 162h7v1h-7zM832 166h7v1h-7zM832 170h7v1h-7zM832 172h7v1h-7zM832 174h7v1h-7zM832 176h7v1h-7zM832 182h7v1h-7zM832 184h7v1h-7zM832 192h7v1h-7zM1151 13h2v5h-2zM1156 6h7v1h-7zM1156 8h7v1h-7zM1156 10h7v1h-7zM1156 14h7v1h-7zM1156 16h7v1h-7zM1156 18h7v1h-7zM1156 22h7v1h-7zM1156 24h7v1h-7zM1156 32h7v1h-7zM1156 36h7v1h-7zM1156 38h7v1h-7zM1156 40h7v1h-7zM1156 42h7v1h-7zM1156 44h7v1h-7zM1156 52h7v1h-7zM1156 56h7v1h-7zM1156 60h7v1h-7zM1156 64h7v1h-7zM1156 66h7v1h-7zM1156 70h7v1h-7zM1156 72h7v1h-7zM1156 76h7v1h-7zM1156 82h7v1h-7zM1156 84h7v1h-7zM1156 88h7v1h-7zM1156 90h7v1h-7zM1156 94h7v1h-7zM1156 98h7v1h-7zM1156 100h7v1h-7zM1156 108h7v1h-7zM1156 110h7v1h-7zM1156 112h7v1h-7zM1156 114h7v1h-7zM1156 120h7v1h-7zM1156 130h7v1h-7zM1156 134h7v1h-7zM1156 136h7v1h-7zM1156 140h7v1h-7zM1156 144h7v1h-7zM1156 148h7v1h-7zM1156 158h7v1h-7zM1156 160h7v1h-7zM1156 162h7v1h-7zM1156 164h7v1h-7zM1156 166h7v1h-7zM1156 168h7v1h-7zM1156 170h7v1h-7zM1156 172h7v1h-7zM1156 174h7v1h-7zM1156 178h7v1h-7zM1156 182h7v1h-7zM1156 188h7v1h-7zM1156 190h7v1h-7zM1262 123h2v6h-2zM1308 4h8v1h-8zM1308 6h8v1h-8zM1308 12h8v1h-8zM1308 22h8v1h-8zM1308 26h8v1h-8zM1308 28h8v1h-8zM1308 42h8v1h-8zM1308 44h8v1h-8zM1308 46h8v1h-8zM1308 52h8v1h-8zM1308 62h8v1h-8zM1308 68h8v1h-8zM1308 72h8v1h-8zM1308 74h8v1h-8zM1308 78h8v1h-8zM1308 80h8v1h-8zM1308 84h8v1h-8zM1308 88h8v1h-8zM1308 90h8v1h-8zM1308 92h8v1h-8zM1308 94h8v1h-8zM1308 96h8v1h-8zM1308 102h8v1h-8zM1308 108h8v1h-8zM1308 118h8v1h-8zM1308 122h8v1h-8zM1308 124h8v1h-8zM1308 128h8v1h-8zM1308 132h8v1h-8zM1308 138h8v1h-8zM1308 140h8v1h-8zM1308 144h8v1h-8zM1308 146h8v1h-8zM1308 154h8v1h-8zM1308 158h8v1h-8zM1308 160h8v1h-8zM1308 166h8v1h-8zM1308 168h8v1h-8zM1308 170h8v1h-8zM1308 174h8v1h-8zM1308 176h8v1h-8zM1308 178h8v1h-8zM1308 180h8v1h-8zM1308 188h8v1h-8zM1308 192h8v1h-8zM1322 4h7v1h-7zM1322 6h7v1h-7zM1322 8h7v1h-7zM1322 10h7v1h-7zM1322 12h7v1h-7zM1322 14h7v1h-7zM1322 22h7v1h-7zM1322 26h7v1h-7zM1322 36h7v1h-7zM1322 54h7v1h-7zM1322 56h7v1h-7zM1322 58h7v1h-7zM1322 62h7v1h-7zM1322 66h7v1h-7zM1322 68h7v1h-7zM1322 70h7v1h-7zM1322 74h7v1h-7zM1322 86h7v1h-7zM1322 92h7v1h-7zM1322 98h7v1h-7zM1322 100h7v1h-7zM1322 108h7v1h-7zM1322 110h7v1h-7zM1322 116h7v1h-7zM1322 120h7v1h-7zM1322 122h7v1h-7zM1322 126h7v1h-7zM1322 130h7v1h-7zM1322 132h7v1h-7zM1322 136h7v1h-7zM1322 138h7v1h-7zM1322 140h7v1h-7zM1322 142h7v1h-7zM1322 144h7v1h-7zM1322 146h7v1h-7zM1322 150h7v1h-7zM1322 154h7v1h-7zM1322 162h7v1h-7zM1322 166h7v1h-7zM1322 168h7v1h-7zM1322 172h7v1h-7zM1322 174h7v1h-7zM1322 176h7v1h-7zM1322 178h7v1h-7zM1322 180h7v1h-7zM1322 182h7v1h-7zM1322 184h7v1h-7zM1322 192h7v1h-7z"/><path fill="#76ff00" d="M1416 182h7v1h-7z"/><path fill="#ffa000" d="M1410 0h4v6h-4zM820 92h2v2h-2zM820 188h2v2h-2z"/><path fill="#ffeb00" d="M84 71h3v3h-3z"/><path fill="#ffda00" d="M98 71h3v3h-3zM1311 56h2v2h-2zM1311 60h2v2h-2z"/><path fill="#fff900" d="M98 75h3v6h-3z"/><path fill="#ffdc00" d="M98 91h3v4h-3zM820 16h2v2h-2z"/><path fill="#fffe00" d="M98 112h3v2h-3z"/><path fill="#ffe600" d="M98 161h3v5h-3z"/><path fill="#ffb000" d="M98 26h5v3h-5zM98 45h5v3h-5zM98 64h5v3h-5zM98 83h5v3h-5zM98 102h5v3h-5zM98 121h5v3h-5zM98 140h5v3h-5zM98 159h5v3h-5zM98 178h5v3h-5zM820 82h2v2h-2zM820 94h2v2h-2z"/><path fill="#53ff00" d="M258 16h2v6h-2z"/><path fill="#4eff00" d="M258 26h2v2h-2z"/><path fill="#50ff00" d="M258 55h2v5h-2z"/><path fill="#5aff00" d="M258 131h2v6h-2z"/><path fill="#ffc000" d="M590 6h3v3h-3zM590 13h3v3h-3zM590 27h3v3h-3zM590 34h3v3h-3zM590 41h3v3h-3zM590 48h3v3h-3zM590 83h3v3h-3zM590 90h3v3h-3zM590 97h3v3h-3zM590 104h3v3h-3zM590 111h3v3h-3zM590 118h3v3h-3zM590 132h3v3h-3zM590 139h3v3h-3zM590 146h3v3h-3zM590 153h3v3h-3zM590 160h3v3h-3zM590 167h3v3h-3zM590 174h3v3h-3zM590 181h3v3h-3zM590 188h3v3h-3z"/><path fill="#ffb900" d="M820 0h2v2h-2zM1311 62h2v2h-2z"/><path fill="#ff9800" d="M820 2h2v2h-2zM820 138h2v2h-2z"/><path fill="#ff8700" d="M820 4h2v2h-2zM820 80h2v2h-2zM820 98h2v2h-2zM820 100h2v2h-2zM1311 114h2v2h-2z"/><path fill="#ffba00" d="M820 12h2v2h-2z"/><path fill="#ffdf00" d="M820 14h2v2h-2zM820 22h2v2h-2zM820 72h2v2h-2zM820 88h2v2h-2zM1311 138h2v2h-2zM1311 170h2v2h-2z"/><path fill="#ff8f00" d="M820 24h2v2h-2z"/><path fill="#ffde00" d="M820 26h2v2h-2zM820 170h2v2h-2z"/><path fill="#ffca00" d="M820 28h2v2h-2zM820 116h2v2h-2zM1311 0h2v2h-2zM1311 50h2v2h-2zM1311 140h2v2h-2z"/><path fill="#ff9400" d="M820 32h2v2h-2zM820 120h2v2h-2z"/><path fill="#ff9300" d="M820 34h2v2h-2zM820 78h2v2h-2z"/><path fill="#ffad00" d="M820 36h2v2h-2z"/><path fill="#ffc600" d="M820 40h2v2h-2zM1311 10h2v2h-2z"/><path fill="#ffb400" d="M820 42h2v2h-2zM1311 112h2v2h-2zM1311 144h2v2h-2z"/><path fill="#ff8e00" d="M820 44h2v2h-2zM1311 186h2v2h-2z"/><path fill="#ffa700" d="M820 48h2v2h-2zM820 150h2v2h-2zM1311 6h2v2h-2z"/><path fill="#ffa500" d="M820 50h2v2h-2zM820 172h2v2h-2z"/><path fill="#ff8b00" d="M820 52h2v2h-2zM820 148h2v2h-2zM1311 54h2v2h-2z"/><path fill="#ff9200" d="M820 54h2v2h-2zM1311 20h2v2h-2zM1311 134h2v2h-2z"/><path fill="#ffa900" d="M820 56h2v2h-2zM820 66h2v2h-2z"/><path fill="#ffaa00" d="M820 58h2v2h-2zM820 96h2v2h-2zM820 184h2v2h-2z"/><path fill="#ffa400" d="M820 62h2v2h-2zM1311 178h2v2h-2z"/><path fill="#ffac00" d="M820 68h2v2h-2zM820 156h2v2h-2zM1311 64h2v2h-2zM1311 68h2v2h-2zM1311 106h2v2h-2z"/><path fill="#ffcc00" d="M820 70h2v2h-2zM1311 146h2v2h-2z"/><path fill="#ffc500" d="M820 76h2v2h-2z"/><path fill="#ff9900" d="M820 84h2v2h-2z"/><path fill="#ffdb00" d="M820 86h2v2h-2zM1311 110h2v2h-2z"/><path fill="#ffd300" d="M820 104h2v2h-2zM1311 142h2v2h-2z"/><path fill="#ffd200" d="M820 108h2v2h-2zM820 112h2v2h-2z"/><path fill="#ffcd00" d="M820 110h2v2h-2zM1311 42h2v2h-2z"/><path fill="#ffc200" d="M820 114h2v2h-2zM820 190h2v2h-2z"/><path fill="#ffbe00" d="M820 122h2v2h-2zM1311 46h2v2h-2zM1311 132h2v2h-2z"/><path fill="#ffae00" d="M820 124h2v2h-2zM820 166h2v2h-2zM1311 40h2v2h-2zM1311 72h2v2h-2zM1311 118h2v2h-2z"/><path fill="#ffc700" d="M820 126h2v2h-2zM820 186h2v2h-2z"/><path fill="#ffdd00" d="M820 130h2v2h-2zM1311 14h2v2h-2z"/><path fill="#ffb600" d="M820 136h2v2h-2zM1311 32h2v2h-2zM1311 122h2v2h-2zM1311 152h2v2h-2z"/><path fill="#ffab00" d="M820 140h2v2h-2z"/><path fill="#ffd900" d="M820 144h2v2h-2zM1311 82h2v2h-2zM1311 108h2v2h-2zM1311 150h2v2h-2z"/><path fill="#ffb800" d="M820 146h2v2h-2zM1311 78h2v2h-2z"/><path fill="#ff8a00" d="M820 152h2v2h-2zM820 176h2v2h-2z"/><path fill="#ffb500" d="M820 154h2v2h-2zM820 162h2v2h-2z"/><path fill="#ff8800" d="M820 160h2v2h-2zM820 192h2v2h-2zM1311 4h2v2h-2zM1311 184h2v2h-2z"/><path fill="#ff9f00" d="M820 168h2v2h-2z"/><path fill="#ff9b00" d="M820 174h2v2h-2zM1311 26h2v2h-2zM1311 166h2v2h-2zM1311 174h2v2h-2z"/><path fill="#ffb700" d="M820 178h2v2h-2z"/><path fill="#ff9500" d="M820 180h2v2h-2z"/><path fill="#ffa300" d="M820 182h2v2h-2z"/><path fill="#ffa600" d="M1311 8h2v2h-2zM1311 16h2v2h-2z"/><path fill="#ffb100" d="M1311 22h2v2h-2zM1311 36h2v2h-2zM1311 52h2v2h-2zM1311 130h2v2h-2z"/><path fill="#ffc900" d="M1311 30h2v2h-2z"/><path fill="#ff9d00" d="M1311 38h2v2h-2zM1311 168h2v2h-2z"/><path fill="#ffd100" d="M1311 44h2v2h-2zM1311 180h2v2h-2z"/><path fill="#ff9000" d="M1311 48h2v2h-2zM1311 58h2v2h-2z"/><path fill="#ff9100" d="M1311 66h2v2h-2zM1311 160h2v2h-2z"/><path fill="#ffc400" d="M1311 70h2v2h-2z"/><path fill="#ffa800" d="M1311 74h2v2h-2zM1311 120h2v2h-2z"/><path fill="#ffe000" d="M1311 76h2v2h-2zM1311 116h2v2h-2zM1311 162h2v2h-2z"/><path fill="#ffd000" d="M1311 80h2v2h-2z"/><path fill="#ff9c00" d="M1311 84h2v2h-2z"/><path fill="#ffc100" d="M1311 88h2v2h-2zM1311 172h2v2h-2z"/><path fill="#ffd400" d="M1311 96h2v2h-2z"/><path fill="#ffd800" d="M1311 100h2v2h-2z"/><path fill="#ffd600" d="M1311 102h2v2h-2zM1311 158h2v2h-2z"/><path fill="#ff9e00" d="M1311 124h2v2h-2z"/><path fill="#ffbb00" d="M1311 128h2v2h-2z"/><path fill="#ffbc00" d="M1311 188h2v2h-2z"/><path fill="#ffce00" d="M1311 192h2v2h-2z"/></svg>
<svg class="a" style="left:0;top:0" width="1622" height="903"><rect x="27" y="540" width="1540" height="207" fill="#fff"/><rect x="611" y="540" width="956" height="207" fill="#effcef"/><rect x="797" y="540" width="19" height="207" fill="#f1e3da"/><line x1="27" x2="1567" y1="544.5" y2="544.5" stroke="#cfcfcf" stroke-width="1"/><line x1="27" x2="1567" y1="558.5" y2="558.5" stroke="#cfcfcf" stroke-width="1"/><line x1="27" x2="1567" y1="573.5" y2="573.5" stroke="#cfcfcf" stroke-width="1"/><line x1="27" x2="1567" y1="587.5" y2="587.5" stroke="#cfcfcf" stroke-width="1"/><line x1="27" x2="1567" y1="601.5" y2="601.5" stroke="#cfcfcf" stroke-width="1"/><line x1="27" x2="1567" y1="616.5" y2="616.5" stroke="#cfcfcf" stroke-width="1"/><line x1="27" x2="1567" y1="630.5" y2="630.5" stroke="#cfcfcf" stroke-width="1"/><line x1="27" x2="1567" y1="644.5" y2="644.5" stroke="#cfcfcf" stroke-width="1"/><line x1="27" x2="1567" y1="659.5" y2="659.5" stroke="#cfcfcf" stroke-width="1"/><line x1="27" x2="1567" y1="673.5" y2="673.5" stroke="#cfcfcf" stroke-width="1"/><line x1="27" x2="1567" y1="688.5" y2="688.5" stroke="#cfcfcf" stroke-width="1"/><line x1="27" x2="1567" y1="702.5" y2="702.5" stroke="#cfcfcf" stroke-width="1"/><line x1="27" x2="1567" y1="716.5" y2="716.5" stroke="#cfcfcf" stroke-width="1"/><line x1="27" x2="1567" y1="731.5" y2="731.5" stroke="#cfcfcf" stroke-width="1"/><line x1="27" x2="1567" y1="745.5" y2="745.5" stroke="#cfcfcf" stroke-width="1"/><line x1="49.5" x2="49.5" y1="540" y2="747" stroke="#c9c9c9" stroke-width="1"/><line x1="129.5" x2="129.5" y1="540" y2="747" stroke="#c9c9c9" stroke-width="1"/><line x1="210.5" x2="210.5" y1="540" y2="747" stroke="#c9c9c9" stroke-width="1"/><line x1="290.5" x2="290.5" y1="540" y2="747" stroke="#c9c9c9" stroke-width="1"/><line x1="370.5" x2="370.5" y1="540" y2="747" stroke="#c9c9c9" stroke-width="1"/><line x1="450.5" x2="450.5" y1="540" y2="747" stroke="#c9c9c9" stroke-width="1"/><line x1="531.5" x2="531.5" y1="540" y2="747" stroke="#c9c9c9" stroke-width="1"/><line x1="611.5" x2="611.5" y1="540" y2="747" stroke="#c9c9c9" stroke-width="1"/><line x1="691.5" x2="691.5" y1="540" y2="747" stroke="#c9c9c9" stroke-width="1"/><line x1="772.5" x2="772.5" y1="540" y2="747" stroke="#c9c9c9" stroke-width="1"/><line x1="852.5" x2="852.5" y1="540" y2="747" stroke="#c9c9c9" stroke-width="1"/><line x1="932.5" x2="932.5" y1="540" y2="747" stroke="#c9c9c9" stroke-width="1"/><line x1="1012.5" x2="1012.5" y1="540" y2="747" stroke="#c9c9c9" stroke-width="1"/><line x1="1093.5" x2="1093.5" y1="540" y2="747" stroke="#c9c9c9" stroke-width="1"/><line x1="1173.5" x2="1173.5" y1="540" y2="747" stroke="#c9c9c9" stroke-width="1"/><line x1="1253.5" x2="1253.5" y1="540" y2="747" stroke="#c9c9c9" stroke-width="1"/><line x1="1333.5" x2="1333.5" y1="540" y2="747" stroke="#c9c9c9" stroke-width="1"/><line x1="1414.5" x2="1414.5" y1="540" y2="747" stroke="#c9c9c9" stroke-width="1"/><line x1="1494.5" x2="1494.5" y1="540" y2="747" stroke="#c9c9c9" stroke-width="1"/><line x1="611.5" x2="611.5" y1="540" y2="747" stroke="#80e080" stroke-width="1"/><line x1="611" x2="1567" y1="540.5" y2="540.5" stroke="#a0e8a0" stroke-width="1"/><line x1="611" x2="1567" y1="746.5" y2="746.5" stroke="#a0e8a0" stroke-width="1"/><line x1="1566.5" x2="1566.5" y1="540" y2="747" stroke="#a0e8a0" stroke-width="1"/><line x1="796.5" x2="796.5" y1="540" y2="747" stroke="#f08a7a" stroke-width="2"/><line x1="27" x2="1567" y1="539.5" y2="539.5" stroke="#9a9a9a" stroke-width="1"/><g font-family="Liberation Mono" font-size="10" fill="#9c9c9c"><text x="53.0" y="551.5">13930</text><text x="133.0" y="551.5">13940</text><text x="214.0" y="551.5">13950</text><text x="294.0" y="551.5">13960</text><text x="374.0" y="551.5">13970</text><text x="454.0" y="551.5">13980</text><text x="535.0" y="551.5">13990</text><text x="615.0" y="551.5">14000</text><text x="695.0" y="551.5">14010</text><text x="776.0" y="551.5">14020</text><text x="856.0" y="551.5">14030</text><text x="936.0" y="551.5">14040</text><text x="1016.0" y="551.5">14050</text><text x="1097.0" y="551.5">14060</text><text x="1177.0" y="551.5">14070</text><text x="1257.0" y="551.5">14080</text><text x="1337.0" y="551.5">14090</text><text x="1418.0" y="551.5">14100</text><text x="1498.0" y="551.5">14110</text><text x="28.5" y="556.9">40 dB</text><text x="28.5" y="571.2">30 dB</text><text x="28.5" y="585.6">20 dB</text><text x="28.5" y="599.9">10 dB</text><text x="28.5" y="614.3">0 dB</text><text x="28.5" y="628.6">-10 dB</text><text x="28.5" y="643.0">-20 dB</text><text x="28.5" y="657.4">-30 dB</text><text x="28.5" y="671.7">-40 dB</text><text x="28.5" y="686.1">-50 dB</text><text x="28.5" y="700.4">-60 dB</text><text x="28.5" y="714.8">-70 dB</text><text x="28.5" y="729.1">-80 dB</text><text x="28.5" y="743.5">-90 dB</text></g><polyline points="27,716.2 28,714.5 29,712.9 30,713.1 31,713.3 32,712.2 33,711.7 34,712.2 35,713.1 36,715.4 37,716.7 38,715.5 39,713.2 40,710.7 41,708.7 42,707.0 43,705.8 44,705.9 45,705.9 46,704.8 47,704.0 48,704.2 49,705.0 50,705.8 51,706.4 52,706.9 53,706.9 54,706.9 55,706.9 56,705.9 57,704.9 58,705.4 59,706.2 60,707.5 61,708.9 62,708.4 63,707.4 64,706.8 65,706.0 66,705.1 67,704.6 68,705.7 69,707.6 70,709.1 71,710.4 72,710.5 73,709.9 74,709.0 75,708.0 76,708.0 77,708.4 78,709.0 79,710.4 80,711.4 81,712.1 82,713.0 83,712.8 84,711.6 85,710.0 86,708.9 87,708.5 88,708.1 89,707.5 90,706.9 91,706.3 92,706.6 93,707.3 94,707.8 95,708.5 96,709.4 97,709.9 98,710.5 99,710.9 100,710.2 101,709.5 102,709.0 103,708.1 104,707.2 105,706.1 106,705.1 107,704.8 108,705.1 109,706.1 110,706.8 111,706.9 112,705.8 113,702.8 114,698.1 115,694.7 116,696.1 117,699.8 118,703.9 119,707.5 120,708.2 121,708.3 122,709.9 123,710.6 124,708.2 125,705.6 126,704.6 127,704.3 128,705.4 129,706.8 130,706.5 131,706.0 132,706.5 133,706.4 134,706.5 135,706.5 136,705.0 137,704.0 138,704.8 139,706.1 140,707.9 141,709.5 142,708.0 143,706.5 144,708.3 145,710.3 146,711.3 147,711.9 148,710.9 149,709.8 150,709.5 151,709.3 152,709.8 153,709.8 154,708.6 155,707.0 156,706.3 157,706.3 158,704.7 159,702.8 160,702.9 161,703.1 162,703.4 163,704.5 164,705.6 165,707.0 166,707.9 167,708.0 168,708.2 169,707.9 170,706.6 171,705.6 172,704.5 173,703.8 174,703.2 175,702.7 176,703.6 177,704.5 178,704.8 179,705.7 180,707.0 181,708.2 182,708.7 183,708.3 184,706.4 185,704.2 186,703.0 187,702.7 188,704.1 189,706.3 190,707.1 191,707.5 192,707.8 193,707.6 194,707.8 195,708.1 196,709.1 197,710.0 198,710.4 199,710.5 200,709.2 201,708.1 202,706.5 203,705.0 204,705.1 205,705.2 206,704.2 207,703.6 208,704.5 209,705.7 210,706.0 211,706.2 212,706.1 213,706.3 214,707.2 215,708.4 216,710.5 217,711.9 218,710.2 219,707.9 220,707.4 221,707.1 222,706.4 223,706.3 224,708.1 225,710.0 226,710.9 227,711.4 228,710.7 229,709.4 230,708.7 231,708.1 232,707.4 233,706.9 234,706.2 235,705.5 236,706.4 237,707.2 238,708.2 239,709.1 240,707.9 241,706.7 242,707.5 243,708.1 244,706.9 245,705.7 246,706.7 247,707.7 248,708.1 249,708.6 250,708.3 251,707.9 252,706.8 253,705.9 254,707.2 255,708.6 256,708.5 257,708.1 258,709.2 259,710.3 260,710.3 261,710.2 262,710.1 263,709.5 264,708.8 265,707.9 266,706.3 267,705.3 268,705.5 269,705.4 270,705.3 271,705.3 272,704.9 273,704.8 274,705.7 275,706.7 276,706.3 277,705.8 278,706.6 279,707.3 280,705.4 281,703.6 282,703.9 283,704.0 284,703.5 285,702.8 286,701.3 287,700.2 288,701.6 289,703.8 290,705.0 291,706.0 292,706.7 293,706.6 294,706.0 295,705.3 296,705.2 297,705.3 298,706.2 299,708.2 300,709.7 301,710.8 302,711.9 303,711.9 304,709.2 305,706.1 306,705.0 307,704.8 308,704.4 309,703.7 310,703.8 311,704.0 312,703.6 313,703.8 314,704.6 315,705.7 316,707.3 317,708.2 318,708.0 319,707.6 320,706.7 321,705.8 322,707.0 323,708.6 324,708.5 325,708.6 326,709.6 327,710.2 328,710.2 329,710.0 330,709.9 331,710.0 332,708.8 333,708.2 334,709.0 335,710.1 336,711.1 337,711.4 338,711.0 339,709.5 340,707.9 341,704.6 342,701.6 343,699.6 344,697.9 345,696.5 346,696.7 347,696.5 348,696.8 349,696.8 350,697.0 351,697.3 352,696.9 353,696.7 354,696.5 355,696.3 356,696.8 357,697.3 358,696.8 359,695.8 360,693.7 361,691.8 362,692.6 363,694.3 364,695.0 365,696.1 366,698.3 367,699.6 368,698.2 369,695.9 370,694.2 371,692.9 372,691.7 373,691.6 374,693.5 375,695.7 376,697.6 377,701.1 378,703.5 379,705.9 380,708.9 381,709.4 382,708.9 383,708.4 384,708.7 385,709.1 386,709.0 387,708.9 388,708.3 389,706.9 390,705.5 391,704.4 392,703.2 393,703.1 394,705.7 395,708.6 396,709.9 397,710.2 398,708.1 399,705.5 400,704.4 401,703.5 402,704.4 403,705.9 404,706.7 405,707.6 406,707.7 407,707.3 408,708.8 409,709.8 410,707.8 411,705.9 412,706.3 413,707.5 414,709.3 415,711.4 416,712.0 417,711.6 418,710.6 419,708.6 420,707.0 421,705.9 422,705.0 423,704.8 424,705.8 425,706.9 426,706.0 427,705.0 428,706.4 429,707.9 430,709.0 431,710.0 432,708.9 433,707.2 434,705.9 435,704.4 436,703.7 437,703.7 438,703.7 439,704.1 440,704.4 441,704.6 442,704.6 443,704.4 444,706.2 445,708.0 446,706.8 447,705.5 448,706.1 449,706.9 450,707.6 451,708.1 452,708.3 453,708.3 454,707.7 455,707.0 456,705.9 457,705.1 458,706.3 459,708.4 460,710.2 461,711.7 462,711.3 463,710.4 464,711.4 465,712.5 466,711.3 467,710.1 468,710.9 469,711.4 470,710.2 471,709.1 472,709.0 473,708.7 474,708.8 475,708.6 476,706.7 477,705.4 478,706.4 479,707.8 480,708.6 481,709.3 482,708.4 483,707.7 484,709.2 485,711.0 486,712.6 487,713.6 488,712.7 489,711.6 490,711.6 491,711.7 492,712.0 493,712.1 494,711.3 495,710.3 496,710.0 497,710.1 498,708.7 499,706.9 500,707.3 501,707.8 502,706.8 503,706.6 504,707.2 505,708.1 506,708.7 507,708.5 508,709.5 509,710.4 510,709.7 511,709.0 512,708.6 513,708.1 514,708.4 515,708.7 516,708.2 517,708.0 518,708.0 519,707.8 520,706.6 521,705.4 522,705.4 523,705.2 524,704.2 525,703.1 526,702.9 527,703.3 528,704.0 529,704.5 530,704.3 531,704.1 532,704.2 533,704.3 534,703.0 535,701.8 536,702.7 537,703.5 538,703.5 539,704.1 540,705.7 541,707.0 542,707.6 543,707.8 544,707.8 545,707.8 546,706.6 547,705.4 548,706.7 549,707.7 550,706.0 551,704.5 552,704.9 553,705.5 554,704.6 555,703.8 556,705.2 557,706.3 558,706.8 559,707.8 560,710.0 561,711.9 562,710.4 563,707.9 564,707.0 565,705.6 566,703.4 567,702.2 568,702.3 569,702.7 570,704.7 571,706.6 572,706.1 573,705.3 574,705.0 575,704.5 576,703.9 577,703.6 578,704.2 579,706.0 580,708.6 581,710.7 582,711.0 583,709.8 584,709.4 585,708.6 586,707.0 587,706.3 588,706.3 589,707.0 590,709.5 591,711.7 592,711.3 593,710.3 594,709.4 595,708.3 596,708.6 597,709.1 598,708.9 599,708.1 600,705.9 601,704.0 602,704.5 603,705.7 604,706.7 605,707.9 606,708.2 607,708.0 608,708.4 609,708.7 610,708.5 611,708.4 612,707.0 613,705.7 614,707.0 615,708.3 616,707.8 617,707.2 618,706.9 619,706.5 620,707.0 621,707.4 622,706.9 623,706.6 624,707.2 625,708.0 626,707.9 627,707.6 628,707.3 629,706.9 630,707.6 631,708.3 632,708.0 633,707.3 634,706.6 635,705.6 636,704.4 637,703.7 638,704.6 639,706.1 640,707.2 641,708.0 642,708.9 643,709.2 644,707.3 645,705.3 646,704.7 647,704.8 648,704.0 649,703.1 650,702.0 651,701.1 652,702.3 653,703.9 654,704.1 655,704.4 656,705.2 657,705.6 658,705.9 659,706.0 660,704.5 661,703.0 662,703.1 663,703.3 664,703.4 665,703.5 666,703.8 667,704.1 668,705.5 669,706.9 670,705.2 671,703.7 672,703.7 673,704.3 674,705.1 675,706.2 676,707.8 677,708.7 678,708.5 679,708.4 680,709.3 681,710.2 682,709.2 683,707.8 684,707.6 685,707.0 686,705.3 687,704.3 688,704.9 689,706.3 690,707.7 691,708.7 692,709.8 693,710.1 694,708.7 695,707.2 696,706.8 697,707.0 698,706.4 699,705.6 700,704.7 701,703.9 702,703.6 703,703.3 704,703.9 705,704.5 706,703.3 707,702.3 708,703.6 709,705.4 710,705.2 711,704.7 712,706.5 713,707.7 714,707.3 715,706.7 716,706.2 717,706.0 718,706.4 719,706.9 720,706.2 721,705.4 722,706.0 723,707.2 724,709.4 725,712.1 726,714.2 727,715.1 728,714.1 729,712.2 730,710.7 731,709.5 732,708.8 733,708.4 734,708.2 735,707.8 736,706.2 737,705.1 738,704.1 739,702.7 740,703.7 741,704.8 742,704.2 743,704.1 744,703.6 745,703.2 746,704.5 747,705.5 748,706.0 749,706.4 750,706.5 751,706.5 752,705.3 753,704.3 754,705.1 755,705.9 756,704.7 757,703.6 758,704.0 759,703.7 760,702.5 761,701.5 762,700.1 763,699.7 764,701.2 765,703.0 766,706.4 767,708.7 768,707.9 769,706.6 770,706.1 771,705.9 772,704.3 773,703.8 774,705.8 775,708.3 776,711.9 777,714.0 778,712.3 779,709.6 780,706.8 781,704.4 782,704.6 783,705.8 784,706.9 785,708.3 786,708.9 787,709.1 788,707.5 789,705.7 790,706.6 791,707.6 792,706.2 793,704.7 794,706.2 795,707.4 796,704.9 797,702.7 798,703.3 799,704.3 800,705.5 801,706.6 802,706.5 803,706.1 804,706.5 805,706.8 806,705.5 807,704.4 808,704.9 809,705.5 810,705.5 811,705.5 812,705.5 813,705.6 814,705.0 815,704.5 816,706.2 817,707.8 818,706.0 819,703.4 820,701.8 821,700.4 822,700.3 823,701.5 824,703.9 825,706.9 826,707.7 827,707.0 828,708.0 829,708.6 830,708.7 831,708.9 832,708.2 833,707.6 834,707.1 835,706.5 836,706.4 837,706.6 838,706.7 839,707.4 840,707.8 841,707.9 842,708.3 843,707.8 844,706.9 845,705.6 846,702.5 847,699.6 848,697.3 849,692.6 850,689.7 851,692.4 852,695.7 853,698.4 854,701.9 855,705.0 856,704.8 857,703.5 858,704.4 859,704.8 860,704.1 861,703.2 862,702.6 863,702.5 864,702.1 865,701.7 866,702.7 867,703.3 868,702.1 869,700.6 870,699.6 871,699.2 872,699.2 873,699.5 874,700.1 875,700.7 876,700.2 877,699.5 878,699.7 879,699.7 880,698.9 881,698.2 882,698.8 883,699.8 884,699.9 885,700.2 886,700.1 887,699.6 888,700.5 889,701.6 890,701.9 891,701.9 892,702.9 893,703.5 894,703.0 895,702.3 896,702.4 897,702.7 898,702.9 899,703.7 900,704.3 901,704.7 902,705.5 903,705.7 904,705.0 905,704.0 906,703.3 907,703.1 908,703.0 909,702.9 910,702.6 911,702.2 912,701.5 913,700.7 914,700.5 915,700.3 916,701.1 917,702.0 918,702.8 919,703.7 920,703.7 921,703.7 922,703.0 923,702.1 924,702.1 925,702.1 926,701.4 927,701.1 928,700.1 929,698.6 930,698.1 931,697.8 932,696.9 933,696.4 934,697.6 935,698.7 936,699.8 937,700.8 938,699.6 939,698.0 940,696.8 941,695.7 942,696.3 943,697.6 944,699.0 945,700.7 946,700.7 947,700.2 948,701.1 949,702.2 950,702.2 951,702.2 952,702.0 953,701.9 954,702.1 955,702.5 956,703.6 957,704.6 958,705.2 959,706.0 960,703.9 961,701.8 962,703.5 963,704.7 964,704.2 965,703.5 966,701.3 967,699.8 968,699.9 969,699.2 970,698.5 971,697.9 972,697.7 973,698.3 974,699.2 975,700.2 976,700.4 977,700.0 978,701.0 979,702.2 980,703.1 981,703.9 982,704.3 983,704.0 984,701.7 985,699.1 986,699.4 987,700.5 988,699.7 989,699.1 990,700.9 991,702.6 992,701.2 993,699.7 994,699.7 995,699.7 996,700.7 997,701.6 998,703.0 999,705.5 1000,707.4 1001,708.7 1002,709.9 1003,710.0 1004,708.4 1005,706.7 1006,706.3 1007,706.3 1008,706.3 1009,705.5 1010,704.3 1011,703.4 1012,703.7 1013,704.5 1014,704.2 1015,703.9 1016,703.8 1017,703.5 1018,703.7 1019,704.2 1020,704.1 1021,703.8 1022,705.2 1023,706.5 1024,705.6 1025,704.8 1026,704.9 1027,704.9 1028,706.6 1029,708.3 1030,706.5 1031,704.8 1032,705.5 1033,705.8 1034,704.6 1035,703.2 1036,701.9 1037,701.2 1038,701.3 1039,701.4 1040,702.1 1041,702.7 1042,703.4 1043,704.7 1044,705.8 1045,707.4 1046,708.1 1047,707.9 1048,708.5 1049,708.5 1050,706.6 1051,704.9 1052,704.3 1053,704.3 1054,705.0 1055,705.8 1056,707.2 1057,708.2 1058,706.6 1059,704.6 1060,704.2 1061,704.0 1062,704.3 1063,705.0 1064,705.4 1065,705.9 1066,704.9 1067,703.8 1068,704.5 1069,705.3 1070,705.2 1071,705.2 1072,705.8 1073,706.2 1074,705.9 1075,705.4 1076,705.2 1077,705.1 1078,705.2 1079,705.8 1080,706.7 1081,707.4 1082,708.1 1083,708.4 1084,708.4 1085,708.4 1086,708.3 1087,708.3 1088,707.8 1089,706.9 1090,705.7 1091,704.6 1092,704.5 1093,704.7 1094,704.4 1095,704.2 1096,706.0 1097,707.7 1098,707.0 1099,706.8 1100,708.4 1101,709.7 1102,710.0 1103,709.2 1104,707.6 1105,705.6 1106,703.5 1107,702.5 1108,702.7 1109,703.5 1110,705.6 1111,707.5 1112,706.2 1113,704.6 1114,706.0 1115,707.3 1116,707.3 1117,707.1 1118,707.3 1119,707.7 1120,708.7 1121,709.6 1122,708.9 1123,708.2 1124,708.4 1125,708.6 1126,708.2 1127,707.8 1128,707.7 1129,706.8 1130,704.7 1131,703.0 1132,703.0 1133,704.0 1134,705.4 1135,707.0 1136,707.4 1137,707.1 1138,706.4 1139,705.1 1140,705.3 1141,705.7 1142,704.9 1143,704.7 1144,705.7 1145,706.9 1146,707.6 1147,707.8 1148,707.6 1149,707.2 1150,705.5 1151,703.6 1152,704.1 1153,704.9 1154,704.8 1155,704.8 1156,705.1 1157,705.2 1158,704.4 1159,703.0 1160,702.4 1161,702.0 1162,700.4 1163,699.4 1164,699.9 1165,700.5 1166,699.6 1167,698.4 1168,699.5 1169,700.8 1170,699.7 1171,698.8 1172,699.9 1173,700.8 1174,700.6 1175,700.4 1176,701.1 1177,701.9 1178,701.7 1179,701.7 1180,702.3 1181,702.8 1182,702.7 1183,702.4 1184,700.5 1185,697.6 1186,696.7 1187,697.0 1188,697.5 1189,698.4 1190,698.4 1191,697.8 1192,697.0 1193,696.9 1194,696.9 1195,697.1 1196,698.7 1197,700.0 1198,699.7 1199,698.8 1200,697.6 1201,696.6 1202,695.0 1203,694.3 1204,696.5 1205,699.0 1206,700.6 1207,701.2 1208,701.3 1209,701.8 1210,702.0 1211,702.0 1212,702.3 1213,702.0 1214,700.8 1215,699.4 1216,698.9 1217,699.1 1218,699.3 1219,699.9 1220,701.4 1221,702.7 1222,703.4 1223,704.1 1224,706.1 1225,708.2 1226,706.7 1227,704.8 1228,705.2 1229,705.0 1230,703.6 1231,702.5 1232,701.4 1233,700.9 1234,700.9 1235,701.0 1236,701.6 1237,702.0 1238,702.8 1239,703.5 1240,703.5 1241,703.5 1242,703.2 1243,702.4 1244,702.1 1245,701.6 1246,700.1 1247,699.3 1248,699.0 1249,698.4 1250,697.3 1251,696.1 1252,694.9 1253,694.1 1254,694.9 1255,695.9 1256,696.8 1257,697.6 1258,698.6 1259,699.5 1260,698.4 1261,697.3 1262,697.3 1263,697.7 1264,698.5 1265,699.6 1266,702.0 1267,703.8 1268,701.9 1269,698.8 1270,697.9 1271,697.5 1272,695.9 1273,695.0 1274,696.3 1275,697.7 1276,697.2 1277,696.6 1278,697.6 1279,698.6 1280,698.1 1281,697.6 1282,697.6 1283,697.9 1284,699.5 1285,701.5 1286,702.6 1287,703.0 1288,703.2 1289,703.2 1290,702.5 1291,701.9 1292,702.1 1293,702.4 1294,702.9 1295,703.4 1296,703.0 1297,702.5 1298,703.2 1299,703.9 1300,702.5 1301,701.2 1302,702.5 1303,703.8 1304,702.4 1305,700.9 1306,702.1 1307,703.3 1308,702.4 1309,701.4 1310,702.0 1311,702.6 1312,701.6 1313,700.9 1314,701.7 1315,702.7 1316,703.8 1317,704.5 1318,703.5 1319,702.5 1320,702.1 1321,701.9 1322,702.2 1323,702.8 1324,703.5 1325,704.3 1326,705.0 1327,705.5 1328,705.6 1329,705.5 1330,704.1 1331,702.8 1332,701.5 1333,700.4 1334,702.5 1335,704.2 1336,703.2 1337,701.0 1338,697.1 1339,694.7 1340,696.7 1341,700.2 1342,702.8 1343,704.7 1344,705.8 1345,706.7 1346,709.0 1347,710.4 1348,709.9 1349,709.3 1350,710.0 1351,710.8 1352,710.4 1353,709.9 1354,708.9 1355,707.8 1356,707.9 1357,708.4 1358,707.4 1359,705.3 1360,703.0 1361,701.2 1362,700.0 1363,700.2 1364,701.8 1365,703.8 1366,706.3 1367,707.8 1368,707.4 1369,707.3 1370,708.3 1371,709.2 1372,709.3 1373,709.1 1374,707.4 1375,705.6 1376,705.3 1377,705.3 1378,705.3 1379,704.5 1380,703.5 1381,702.8 1382,701.2 1383,700.5 1384,701.4 1385,702.6 1386,703.1 1387,703.2 1388,704.4 1389,706.8 1390,710.1 1391,713.0 1392,713.2 1393,712.0 1394,708.9 1395,705.3 1396,704.0 1397,703.9 1398,704.6 1399,704.8 1400,703.4 1401,702.3 1402,700.5 1403,699.5 1404,701.3 1405,703.2 1406,703.9 1407,704.1 1408,705.0 1409,706.4 1410,707.1 1411,707.6 1412,707.9 1413,707.7 1414,706.5 1415,705.2 1416,705.6 1417,706.4 1418,705.7 1419,704.5 1420,703.6 1421,702.9 1422,702.8 1423,702.7 1424,701.4 1425,700.0 1426,698.9 1427,698.3 1428,698.9 1429,700.4 1430,702.8 1431,704.8 1432,706.7 1433,707.5 1434,704.9 1435,702.0 1436,700.7 1437,700.3 1438,701.2 1439,703.2 1440,705.3 1441,707.0 1442,707.5 1443,707.4 1444,708.0 1445,708.7 1446,708.6 1447,708.5 1448,707.4 1449,705.9 1450,706.5 1451,707.3 1452,705.9 1453,704.5 1454,705.2 1455,705.7 1456,704.7 1457,703.8 1458,704.4 1459,705.0 1460,704.3 1461,703.6 1462,704.2 1463,704.9 1464,704.7 1465,704.5 1466,704.9 1467,705.5 1468,705.3 1469,704.9 1470,703.4 1471,702.0 1472,702.9 1473,703.9 1474,702.9 1475,701.8 1476,702.6 1477,703.4 1478,702.6 1479,701.8 1480,702.1 1481,702.3 1482,702.0 1483,702.4 1484,704.7 1485,707.3 1486,709.1 1487,710.0 1488,710.7 1489,711.4 1490,710.2 1491,708.9 1492,709.5 1493,709.6 1494,709.1 1495,708.4 1496,707.7 1497,707.6 1498,707.7 1499,707.9 1500,708.0 1501,708.1 1502,708.0 1503,707.5 1504,707.7 1505,707.7 1506,706.4 1507,705.3 1508,705.0 1509,704.9 1510,704.7 1511,704.5 1512,704.8 1513,705.2 1514,706.4 1515,707.7 1516,709.0 1517,709.9 1518,709.5 1519,709.0 1520,708.8 1521,708.8 1522,709.1 1523,709.5 1524,709.2 1525,708.9 1526,709.2 1527,709.6 1528,709.1 1529,708.6 1530,708.4 1531,708.2 1532,708.6 1533,709.1 1534,708.5 1535,708.0 1536,709.3 1537,710.4 1538,710.1 1539,709.1 1540,707.4 1541,705.9 1542,706.4 1543,707.7 1544,708.4 1545,709.4 1546,710.4 1547,710.8 1548,711.5 1549,711.3 1550,708.9 1551,706.8 1552,706.1 1553,706.4 1554,708.8 1555,711.5 1556,713.8 1557,715.3 1558,714.6 1559,713.9 1560,715.0 1561,716.2 1562,716.1 1563,716.1 1564,716.8 1565,717.5 1566,717.9 1567,718.3" fill="none" stroke="#3c3c3c" stroke-width="1"/><rect x="26" y="758" width="1559" height="116" fill="#fff"/><rect x="71" y="758" width="5" height="116" fill="#e2fbe2"/><rect x="114" y="758" width="12.5" height="116" fill="#e2fbe2"/><rect x="160" y="758" width="2.5" height="116" fill="#e2fbe2"/><rect x="203" y="758" width="7" height="116" fill="#e2fbe2"/><rect x="281" y="758" width="2" height="116" fill="#e2fbe2"/><rect x="381" y="758" width="8" height="116" fill="#e2fbe2"/><rect x="484" y="758" width="2" height="116" fill="#e2fbe2"/><rect x="558" y="758" width="12" height="116" fill="#e2fbe2"/><rect x="659" y="758" width="2" height="116" fill="#e2fbe2"/><rect x="736" y="758" width="43" height="116" fill="#e2fbe2"/><rect x="1294" y="758" width="101" height="116" fill="#e2fbe2"/><line x1="26" x2="1585" y1="781.5" y2="781.5" stroke="#cdcdcd" stroke-width="1"/><line x1="26" x2="1585" y1="804.5" y2="804.5" stroke="#cdcdcd" stroke-width="1"/><line x1="26" x2="1585" y1="828.5" y2="828.5" stroke="#cdcdcd" stroke-width="1"/><line x1="26" x2="1585" y1="851.5" y2="851.5" stroke="#cdcdcd" stroke-width="1"/><line x1="152.5" x2="152.5" y1="758" y2="874" stroke="#cdcdcd" stroke-width="1"/><line x1="279.5" x2="279.5" y1="758" y2="874" stroke="#cdcdcd" stroke-width="1"/><line x1="406.5" x2="406.5" y1="758" y2="874" stroke="#cdcdcd" stroke-width="1"/><line x1="533.5" x2="533.5" y1="758" y2="874" stroke="#cdcdcd" stroke-width="1"/><line x1="660.5" x2="660.5" y1="758" y2="874" stroke="#cdcdcd" stroke-width="1"/><line x1="787.5" x2="787.5" y1="758" y2="874" stroke="#cdcdcd" stroke-width="1"/><line x1="914.5" x2="914.5" y1="758" y2="874" stroke="#cdcdcd" stroke-width="1"/><line x1="1040.5" x2="1040.5" y1="758" y2="874" stroke="#cdcdcd" stroke-width="1"/><line x1="1167.5" x2="1167.5" y1="758" y2="874" stroke="#cdcdcd" stroke-width="1"/><line x1="1294.5" x2="1294.5" y1="758" y2="874" stroke="#cdcdcd" stroke-width="1"/><line x1="1421.5" x2="1421.5" y1="758" y2="874" stroke="#cdcdcd" stroke-width="1"/><line x1="1548.5" x2="1548.5" y1="758" y2="874" stroke="#cdcdcd" stroke-width="1"/><line x1="381" x2="381" y1="758" y2="874" stroke="#f09080" stroke-width="1.5"/><g font-family="Liberation Mono" font-size="10" fill="#a0a0a0"><text x="29.0" y="770">0</text><text x="155.0" y="770">5</text><text x="282.0" y="770">10</text><text x="409.0" y="770">15</text><text x="536.0" y="770">20</text><text x="663.0" y="770">25</text><text x="790.0" y="770">30</text><text x="917.0" y="770">35</text><text x="1043.0" y="770">40</text><text x="1170.0" y="770">45</text><text x="1297.0" y="770">50</text><text x="1424.0" y="770">55</text><text x="1551.0" y="770">60</text><text x="29" y="794.0">10 dB</text><text x="29" y="817.3">0 dB</text><text x="29" y="840.6">-10 dB</text><text x="29" y="863.9">-20 dB</text></g><defs><clipPath id="bclip"><rect x="26" y="758" width="1559" height="116"/></clipPath></defs><polyline clip-path="url(#bclip)" points="26,800.0 27,814.5 28,829.0 29,827.5 30,826.0 31,824.0 32,822.0 33,820.0 34,817.3 35,814.7 36,812.0 37,807.5 38,803.0 39,801.0 40,799.0 41,797.0 42,795.3 43,793.7 44,792.0 45,788.0 46,784.0 47,780.0 48,786.0 49,785.0 50,784.0 51,786.0 52,788.0 53,774.0 54,760.0 55,740.0 56,740.0 57,740.0 58,755.0 59,768.5 60,782.0 61,785.9 62,789.7 63,793.8 64,798.2 65,802.2 66,803.8 67,805.3 68,806.8 69,808.4 70,810.0 71,811.1 72,812.3 73,811.9 74,811.3 75,813.6 76,815.9 77,816.5 78,817.0 79,818.1 80,819.2 81,820.9 82,822.8 83,821.1 84,819.2 85,821.1 86,823.1 87,823.3 88,823.2 89,823.6 90,824.1 91,825.3 92,826.7 93,827.1 94,827.5 95,827.1 96,826.7 97,828.1 98,829.3 99,829.3 100,829.4 101,828.9 102,828.9 103,828.4 104,828.0 105,831.6 106,835.0 107,833.3 108,831.2 109,830.1 110,829.1 111,828.8 112,829.3 113,831.0 114,833.1 115,840.3 116,846.9 117,844.0 118,839.7 119,835.9 120,832.4 121,831.4 122,831.4 123,833.2 124,835.3 125,836.1 126,836.5 127,838.5 128,841.0 129,835.8 130,830.3 131,833.8 132,837.2 133,836.8 134,836.5 135,839.2 136,841.8 137,837.7 138,833.3 139,834.8 140,836.5 141,832.6 142,828.5 143,839.9 144,851.3 145,842.9 146,835.0 147,835.1 148,835.2 149,843.5 150,852.0 151,841.4 152,830.9 153,826.6 154,822.2 155,835.3 156,848.2 157,848.5 158,849.1 159,848.5 160,847.8 161,846.8 162,845.9 163,849.3 164,853.0 165,844.6 166,835.7 167,831.4 168,825.9 169,829.6 170,833.7 171,839.1 172,845.6 173,843.8 174,842.1 175,841.0 176,839.2 177,841.3 178,842.8 179,844.1 180,845.5 181,842.2 182,839.2 183,839.2 184,839.3 185,841.4 186,843.6 187,841.5 188,840.1 189,839.4 190,838.3 191,838.1 192,837.2 193,839.1 194,840.9 195,840.6 196,840.6 197,844.7 198,849.1 199,848.9 200,848.6 201,846.6 202,844.1 203,843.3 204,842.3 205,845.3 206,848.9 207,846.2 208,843.2 209,844.6 210,846.1 211,841.3 212,837.3 213,841.8 214,846.7 215,846.2 216,844.7 217,841.3 218,836.4 219,830.6 220,825.4 221,830.7 222,837.6 223,841.7 224,846.2 225,848.2 226,849.3 227,846.0 228,842.4 229,841.0 230,839.6 231,835.5 232,831.8 233,837.0 234,842.4 235,840.5 236,838.0 237,838.5 238,839.3 239,838.3 240,837.2 241,839.5 242,841.3 243,840.6 244,839.6 245,835.0 246,831.1 247,837.0 248,843.2 249,843.1 250,842.8 251,846.8 252,850.6 253,850.1 254,849.7 255,847.0 256,844.2 257,848.0 258,851.4 259,844.6 260,837.9 261,832.8 262,828.2 263,835.0 264,841.9 265,841.2 266,840.3 267,838.5 268,837.4 269,837.7 270,837.8 271,847.6 272,856.4 273,846.7 274,836.6 275,837.0 276,838.4 277,838.6 278,838.8 279,841.5 280,844.2 281,844.5 282,845.0 283,848.1 284,851.4 285,842.5 286,833.2 287,837.6 288,842.4 289,841.5 290,840.4 291,844.7 292,848.5 293,844.4 294,840.1 295,840.8 296,842.0 297,847.1 298,851.8 299,845.4 300,839.1 301,838.8 302,839.1 303,844.9 304,850.9 305,852.6 306,853.7 307,842.1 308,829.6 309,832.5 310,835.7 311,830.9 312,827.5 313,837.2 314,847.4 315,845.6 316,842.5 317,841.5 318,839.3 319,841.8 320,844.7 321,846.3 322,849.3 323,848.2 324,847.5 325,842.4 326,836.2 327,839.5 328,842.4 329,838.6 330,835.0 331,847.1 332,859.2 333,850.8 334,842.3 335,837.8 336,833.7 337,839.5 338,846.2 339,854.3 340,862.1 341,853.2 342,843.9 343,841.6 344,839.3 345,844.3 346,849.2 347,850.7 348,852.3 349,853.1 350,853.8 351,858.4 352,862.6 353,850.4 354,837.9 355,843.7 356,850.0 357,845.5 358,840.0 359,834.6 360,829.6 361,834.0 362,839.6 363,843.6 364,847.9 365,848.8 366,849.0 367,846.6 368,843.7 369,844.3 370,837.1 371,812.9 372,794.7 373,803.5 374,820.2 375,825.7 376,827.9 377,832.8 378,837.2 379,836.1 380,833.5 381,838.1 382,842.9 383,844.1 384,845.6 385,849.6 386,853.0 387,850.5 388,848.4 389,844.5 390,840.5 391,847.7 392,854.7 393,853.2 394,851.8 395,852.1 396,852.3 397,847.7 398,843.2 399,845.0 400,846.9 401,847.0 402,847.3 403,846.3 404,845.4 405,848.3 406,850.9 407,845.1 408,837.7 409,835.0 410,833.0 411,839.0 412,846.9 413,842.4 414,838.5 415,851.1 416,862.1 417,855.7 418,848.9 419,845.6 420,842.4 421,847.5 422,853.0 423,847.0 424,841.1 425,848.6 426,855.8 427,847.9 428,838.7 429,843.8 430,849.2 431,842.9 432,837.8 433,838.1 434,838.7 435,847.2 436,855.0 437,854.2 438,853.2 439,847.8 440,842.4 441,843.2 442,844.4 443,842.0 444,839.9 445,844.1 446,847.8 447,850.0 448,851.0 449,845.3 450,840.0 451,839.3 452,840.1 453,838.1 454,836.5 455,845.5 456,853.3 457,849.0 458,844.8 459,849.8 460,854.8 461,856.7 462,858.9 463,854.2 464,849.7 465,849.2 466,848.3 467,848.9 468,848.0 469,845.5 470,843.6 471,839.6 472,837.5 473,841.6 474,846.3 475,842.8 476,837.7 477,845.8 478,852.6 479,846.7 480,841.4 481,846.9 482,853.8 483,849.0 484,844.6 485,848.8 486,851.9 487,852.0 488,851.5 489,849.5 490,847.8 491,851.6 492,856.1 493,851.9 494,847.8 495,848.6 496,849.1 497,851.1 498,854.3 499,855.4 500,856.1 501,859.3 502,859.9 503,850.1 504,839.2 505,839.6 506,842.9 507,836.0 508,830.1 509,836.5 510,842.6 511,841.3 512,839.4 513,840.5 514,841.6 515,843.8 516,845.8 517,846.1 518,846.6 519,847.8 520,848.8 521,843.6 522,837.8 523,846.1 524,854.2 525,847.2 526,841.2 527,840.8 528,841.4 529,842.4 530,843.1 531,848.5 532,853.3 533,846.5 534,839.7 535,843.0 536,846.2 537,847.9 538,849.4 539,846.3 540,843.2 541,842.0 542,840.8 543,840.1 544,839.2 545,844.6 546,850.0 547,848.2 548,846.1 549,848.7 550,851.3 551,850.9 552,851.0 553,853.2 554,855.5 555,847.0 556,838.0 557,845.2 558,852.3 559,846.3 560,840.4 561,840.2 562,840.2 563,840.5 564,840.8 565,843.0 566,845.2 567,850.2 568,855.7 569,855.0 570,854.1 571,854.7 572,854.4 573,845.6 574,836.4 575,846.6 576,857.7 577,853.2 578,849.9 579,854.9 580,859.4 581,857.6 582,854.4 583,852.1 584,849.4 585,843.1 586,837.7 587,842.2 588,847.9 589,841.0 590,833.6 591,842.4 592,849.4 593,843.6 594,837.2 595,839.6 596,843.7 597,844.6 598,845.8 599,844.4 600,842.7 601,844.4 602,846.2 603,845.2 604,844.5 605,851.1 606,857.3 607,849.8 608,842.9 609,849.0 610,854.8 611,847.6 612,839.6 613,845.9 614,852.0 615,849.8 616,848.4 617,846.9 618,845.1 619,846.3 620,847.5 621,848.5 622,849.7 623,847.0 624,844.4 625,846.2 626,847.9 627,852.8 628,857.9 629,858.5 630,858.9 631,858.2 632,857.1 633,850.4 634,843.7 635,849.1 636,854.6 637,851.6 638,847.9 639,844.8 640,842.0 641,842.6 642,843.3 643,845.8 644,848.1 645,843.5 646,839.3 647,838.4 648,839.0 649,842.8 650,845.9 651,849.9 652,852.2 653,846.6 654,840.6 655,840.0 656,840.4 657,841.9 658,843.1 659,842.5 660,842.1 661,835.0 662,828.2 663,833.3 664,838.6 665,842.2 666,845.4 667,848.2 668,852.0 669,851.7 670,851.0 671,849.5 672,847.1 673,844.7 674,842.1 675,844.3 676,847.0 677,848.6 678,850.1 679,851.0 680,851.9 681,850.7 682,850.1 683,845.7 684,841.6 685,847.4 686,852.3 687,856.2 688,859.5 689,855.7 690,852.1 691,849.8 692,846.9 693,844.5 694,841.5 695,837.8 696,835.4 697,837.5 698,840.4 699,843.7 700,846.7 701,841.4 702,836.0 703,838.9 704,842.1 705,844.4 706,846.1 707,843.3 708,841.2 709,845.0 710,848.6 711,849.5 712,849.1 713,848.1 714,846.5 715,846.2 716,847.3 717,847.0 718,846.6 719,844.9 720,843.3 721,845.3 722,847.0 723,841.8 724,836.4 725,840.4 726,844.9 727,840.8 728,837.9 729,848.0 730,857.7 731,851.6 732,844.4 733,845.6 734,846.5 735,844.4 736,842.9 737,843.3 738,843.2 739,842.0 740,841.0 741,838.9 742,837.6 743,839.2 744,841.1 745,846.5 746,851.2 747,851.7 748,851.9 749,846.9 750,842.0 751,846.6 752,852.0 753,849.0 754,846.3 755,848.0 756,848.7 757,846.0 758,842.4 759,844.8 760,847.5 761,852.9 762,859.0 763,849.0 764,839.2 765,843.5 766,847.4 767,851.1 768,855.4 769,850.7 770,845.7 771,849.5 772,852.4 773,856.4 774,860.0 775,850.3 776,841.5 777,847.2 778,854.2 779,859.8 780,864.8 781,863.6 782,860.9 783,850.2 784,839.1 785,842.4 786,846.7 787,847.5 788,848.4 789,847.4 790,846.5 791,845.3 792,844.2 793,846.4 794,848.7 795,847.9 796,846.9 797,846.8 798,846.2 799,845.9 800,845.7 801,844.0 802,842.8 803,844.0 804,845.4 805,853.0 806,860.4 807,857.0 808,854.1 809,852.7 810,851.2 811,846.7 812,841.4 813,842.6 814,843.6 815,846.7 816,850.7 817,846.6 818,843.6 819,847.1 820,850.1 821,851.1 822,851.0 823,849.2 824,847.2 825,849.1 826,851.5 827,852.5 828,853.7 829,847.3 830,840.9 831,845.1 832,849.0 833,847.4 834,845.6 835,841.8 836,838.4 837,836.7 838,835.1 839,844.1 840,853.0 841,846.6 842,840.3 843,843.7 844,847.3 845,849.4 846,851.3 847,855.4 848,859.3 849,859.2 850,859.3 851,855.4 852,851.5 853,843.6 854,835.6 855,831.1 856,826.8 857,838.8 858,850.6 859,844.7 860,838.8 861,840.6 862,843.1 863,842.8 864,842.8 865,844.9 866,846.2 867,854.9 868,862.4 869,848.8 870,835.7 871,842.2 872,849.8 873,849.2 874,848.9 875,848.5 876,847.6 877,849.7 878,851.2 879,843.7 880,836.5 881,839.9 882,844.3 883,841.7 884,839.4 885,847.6 886,854.8 887,856.0 888,857.4 889,850.5 890,843.6 891,847.5 892,851.2 893,854.9 894,858.6 895,854.6 896,850.6 897,849.6 898,848.5 899,845.5 900,842.4 901,853.8 902,864.8 903,861.7 904,858.4 905,845.0 906,832.3 907,844.3 908,857.3 909,857.2 910,856.7 911,853.5 912,849.5 913,847.1 914,844.6 915,845.2 916,846.1 917,848.2 918,850.3 919,848.3 920,846.4 921,849.6 922,852.6 923,852.8 924,852.8 925,844.3 926,836.5 927,848.2 928,860.2 929,850.3 930,840.3 931,846.8 932,852.7 933,851.1 934,849.2 935,846.0 936,843.5 937,837.8 938,832.9 939,845.5 940,857.8 941,849.7 942,841.5 943,850.3 944,859.2 945,857.4 946,855.1 947,844.3 948,832.8 949,843.0 950,853.5 951,852.4 952,851.6 953,852.0 954,852.3 955,848.2 956,844.1 957,848.4 958,852.8 959,856.2 960,859.4 961,855.7 962,852.0 963,855.9 964,859.9 965,857.8 966,855.3 967,848.2 968,841.4 969,846.5 970,851.5 971,849.7 972,846.9 973,843.7 974,840.1 975,840.1 976,841.2 977,842.6 978,844.3 979,851.3 980,858.2 981,858.8 982,859.1 983,848.8 984,838.5 985,838.1 986,837.6 987,842.2 988,846.5 989,850.7 990,854.9 991,849.9 992,845.4 993,845.0 994,844.9 995,849.9 996,854.2 997,858.1 998,861.1 999,855.7 1000,850.7 1001,851.6 1002,853.6 1003,850.7 1004,848.1 1005,851.5 1006,854.2 1007,845.2 1008,835.7 1009,844.5 1010,853.4 1011,851.1 1012,848.8 1013,842.8 1014,836.7 1015,839.4 1016,842.4 1017,845.6 1018,849.2 1019,850.7 1020,852.2 1021,848.8 1022,845.1 1023,846.2 1024,847.3 1025,845.2 1026,843.4 1027,838.9 1028,834.8 1029,845.8 1030,856.7 1031,850.9 1032,844.9 1033,848.0 1034,851.1 1035,845.2 1036,839.3 1037,845.3 1038,852.6 1039,857.5 1040,861.9 1041,861.3 1042,858.9 1043,858.7 1044,857.9 1045,853.2 1046,849.9 1047,844.6 1048,839.2 1049,844.2 1050,849.2 1051,848.1 1052,847.7 1053,846.8 1054,846.2 1055,845.9 1056,844.7 1057,846.0 1058,846.8 1059,846.3 1060,846.1 1061,848.6 1062,851.4 1063,854.3 1064,857.1 1065,852.0 1066,847.1 1067,850.6 1068,854.4 1069,851.3 1070,848.1 1071,846.9 1072,846.2 1073,849.5 1074,853.1 1075,852.0 1076,849.9 1077,855.6 1078,861.3 1079,853.2 1080,845.2 1081,848.9 1082,852.2 1083,844.9 1084,837.3 1085,849.3 1086,861.8 1087,854.1 1088,845.8 1089,849.1 1090,852.5 1091,855.3 1092,858.7 1093,855.7 1094,852.8 1095,853.4 1096,853.5 1097,853.3 1098,852.1 1099,845.7 1100,839.7 1101,842.1 1102,845.7 1103,844.4 1104,843.6 1105,848.1 1106,851.7 1107,850.8 1108,848.5 1109,849.8 1110,851.7 1111,841.7 1112,833.3 1113,843.6 1114,854.3 1115,851.8 1116,847.9 1117,849.0 1118,849.6 1119,845.1 1120,840.8 1121,845.1 1122,849.7 1123,849.9 1124,850.1 1125,844.1 1126,838.4 1127,841.1 1128,844.2 1129,850.0 1130,855.7 1131,853.8 1132,851.6 1133,849.6 1134,847.5 1135,848.2 1136,849.2 1137,852.1 1138,855.9 1139,855.8 1140,855.4 1141,860.3 1142,863.8 1143,855.7 1144,847.1 1145,843.6 1146,841.5 1147,847.6 1148,854.1 1149,854.7 1150,855.0 1151,850.8 1152,846.1 1153,852.2 1154,858.2 1155,854.2 1156,850.4 1157,845.9 1158,841.4 1159,838.1 1160,834.9 1161,844.1 1162,854.0 1163,844.8 1164,835.9 1165,845.8 1166,854.5 1167,851.3 1168,847.5 1169,850.9 1170,854.5 1171,852.2 1172,850.7 1173,848.8 1174,847.1 1175,851.6 1176,855.5 1177,851.1 1178,845.5 1179,846.1 1180,847.2 1181,844.7 1182,843.2 1183,843.3 1184,843.5 1185,845.0 1186,845.9 1187,847.7 1188,849.8 1189,843.3 1190,836.7 1191,839.1 1192,841.0 1193,845.3 1194,849.3 1195,844.3 1196,840.0 1197,847.4 1198,856.2 1199,850.4 1200,844.1 1201,843.3 1202,841.7 1203,850.4 1204,859.0 1205,857.9 1206,856.8 1207,856.5 1208,855.7 1209,855.3 1210,855.0 1211,850.7 1212,846.1 1213,849.4 1214,852.3 1215,853.5 1216,855.5 1217,850.6 1218,846.5 1219,850.4 1220,853.9 1221,851.4 1222,848.4 1223,852.8 1224,857.3 1225,853.7 1226,850.0 1227,850.1 1228,850.0 1229,854.5 1230,859.2 1231,853.6 1232,848.4 1233,849.8 1234,851.4 1235,856.0 1236,860.3 1237,856.9 1238,852.5 1239,849.2 1240,846.2 1241,845.3 1242,845.7 1243,850.3 1244,855.3 1245,847.8 1246,839.3 1247,841.8 1248,844.5 1249,845.8 1250,846.9 1251,850.5 1252,853.8 1253,859.0 1254,864.2 1255,860.9 1256,857.7 1257,857.5 1258,856.8 1259,855.6 1260,854.5 1261,850.0 1262,845.7 1263,845.6 1264,845.4 1265,849.9 1266,854.4 1267,854.2 1268,853.3 1269,856.6 1270,860.1 1271,856.7 1272,853.8 1273,853.7 1274,853.6 1275,849.7 1276,845.7 1277,845.7 1278,846.4 1279,840.9 1280,835.2 1281,843.5 1282,851.7 1283,851.4 1284,851.2 1285,854.1 1286,856.7 1287,859.8 1288,863.3 1289,860.3 1290,857.2 1291,853.6 1292,849.5 1293,854.0 1294,858.3 1295,856.2 1296,854.5 1297,845.9 1298,836.2 1299,838.5 1300,841.2 1301,845.5 1302,850.9 1303,849.8 1304,849.0 1305,850.0 1306,850.5 1307,851.2 1308,851.7 1309,846.7 1310,841.9 1311,849.5 1312,857.6 1313,852.8 1314,848.1 1315,851.1 1316,853.6 1317,852.9 1318,852.1 1319,851.2 1320,850.3 1321,849.0 1322,848.1 1323,859.2 1324,870.5 1325,861.3 1326,851.4 1327,854.0 1328,855.8 1329,851.9 1330,848.3 1331,846.3 1332,844.7 1333,845.4 1334,846.2 1335,846.6 1336,847.1 1337,845.8 1338,845.1 1339,853.9 1340,862.5 1341,858.0 1342,853.0 1343,848.8 1344,844.4 1345,847.8 1346,851.6 1347,849.1 1348,846.0 1349,847.5 1350,849.4 1351,850.4 1352,852.2 1353,850.4 1354,848.8 1355,855.3 1356,861.0 1357,857.7 1358,854.4 1359,854.2 1360,854.0 1361,850.9 1362,847.9 1363,852.5 1364,857.2 1365,850.5 1366,843.7 1367,851.0 1368,857.6 1369,854.9 1370,852.5 1371,855.3 1372,858.2 1373,850.3 1374,842.2 1375,844.9 1376,848.1 1377,850.6 1378,853.6 1379,850.6 1380,847.5 1381,843.3 1382,839.5 1383,846.7 1384,854.4 1385,859.2 1386,862.8 1387,862.6 1388,861.6 1389,859.3 1390,857.4 1391,854.3 1392,851.9 1393,848.7 1394,845.6 1395,850.2 1396,854.8 1397,859.0 1398,863.0 1399,859.7 1400,856.4 1401,855.4 1402,854.5 1403,856.5 1404,858.5 1405,859.1 1406,859.8 1407,857.9 1408,855.9 1409,850.8 1410,845.8 1411,845.8 1412,845.9 1413,844.2 1414,842.6 1415,848.2 1416,853.8 1417,855.5 1418,856.9 1419,853.0 1420,849.2 1421,849.4 1422,850.3 1423,854.2 1424,858.4 1425,857.9 1426,856.4 1427,854.2 1428,850.7 1429,847.7 1430,845.1 1431,846.4 1432,848.8 1433,849.8 1434,851.0 1435,846.9 1436,842.3 1437,841.5 1438,840.6 1439,848.4 1440,856.1 1441,856.4 1442,856.0 1443,843.5 1444,830.4 1445,836.2 1446,843.3 1447,841.8 1448,841.6 1449,841.5 1450,840.8 1451,845.9 1452,849.9 1453,848.5 1454,847.0 1455,844.6 1456,842.4 1457,847.3 1458,852.2 1459,853.3 1460,854.4 1461,857.4 1462,860.5 1463,848.0 1464,835.6 1465,842.5 1466,849.1 1467,849.3 1468,850.2 1469,850.9 1470,851.3 1471,850.1 1472,848.1 1473,852.9 1474,857.6 1475,847.2 1476,837.5 1477,838.5 1478,839.9 1479,845.1 1480,850.2 1481,855.1 1482,859.0 1483,843.8 1484,828.1 1485,838.4 1486,850.1 1487,846.9 1488,844.6 1489,842.5 1490,840.0 1491,850.0 1492,859.6 1493,857.4 1494,855.3 1495,851.8 1496,848.2 1497,853.3 1498,858.6 1499,853.9 1500,849.1 1501,856.1 1502,862.7 1503,858.9 1504,854.9 1505,851.7 1506,849.1 1507,843.3 1508,837.4 1509,840.0 1510,842.7 1511,844.2 1512,845.9 1513,848.6 1514,851.5 1515,853.3 1516,854.9 1517,852.5 1518,851.1 1519,856.4 1520,861.4 1521,860.3 1522,858.0 1523,859.9 1524,861.5 1525,857.8 1526,854.9 1527,848.6 1528,841.4 1529,842.5 1530,843.9 1531,844.2 1532,845.4 1533,848.3 1534,851.5 1535,850.4 1536,848.8 1537,852.4 1538,856.5 1539,848.7 1540,840.7 1541,841.1 1542,840.9 1543,848.6 1544,856.2 1545,855.0 1546,854.1 1547,843.8 1548,833.8 1549,840.2 1550,846.6 1551,842.8 1552,837.9 1553,840.6 1554,842.8 1555,842.6 1556,843.8 1557,844.9 1558,847.1 1559,847.7 1560,847.9 1561,852.4 1562,856.2 1563,852.9 1564,849.6 1565,855.5 1566,861.4 1567,849.7 1568,838.4 1569,842.5 1570,846.6 1571,849.6 1572,852.4 1573,853.0 1574,853.5 1575,857.3 1576,861.3 1577,851.8 1578,840.8 1579,839.5 1580,838.8 1581,833.2 1582,829.7 1583,834.4 1584,806.0 1585,806.0" fill="none" stroke="#505050" stroke-width="1"/></svg>
<div class="hud" style="left:65px;top:-2px;width:606px;height:290px">
<div class="tb" style="background:#2e353e"></div>
<div class="cls" style="left:3.700000000000003px;top:2.0px"></div>
<div class="ttl" style="top:3px;color:#c3c6ca">Main Receiver</div>
<div class="track" style="left:19px;top:45px;width:296px"></div>
<div class="tick" style="left:19.0px;top:38px;width:3px;height:7px"></div>
<div class="tick" style="left:56.6px;top:41px;width:1px;height:4px"></div>
<div class="tick" style="left:92.2px;top:38px;width:3px;height:7px"></div>
<div class="tick" style="left:129.9px;top:41px;width:1px;height:4px"></div>
<div class="tick" style="left:165.5px;top:38px;width:3px;height:7px"></div>
<div class="tick" style="left:203.1px;top:41px;width:1px;height:4px"></div>
<div class="tick" style="left:238.8px;top:38px;width:3px;height:7px"></div>
<div class="tick" style="left:276.4px;top:41px;width:1px;height:4px"></div>
<div class="tick" style="left:312.0px;top:38px;width:3px;height:7px"></div>
<div class="freq" style="left:19px;top:62px;width:296px;height:52px"></div>
<div class="a" style="left:113px;top:65px;width:108px;height:37px;background:#d4d4d4"></div>
<div class="a" style="left:112px;top:71.5px;width:110px;height:37px;font-family:'Liberation Mono', monospace;font-weight:bold;font-size:25px;line-height:37px;color:#fff;text-align:center;letter-spacing:-1.4px">14023000</div>
<div class="chk" style="left:364px;top:38px"></div>
<div class="ctext" style="left:382px;top:37px">Preamp</div>
<div class="ctext" style="left:322px;top:67px">Mode</div>
<div class="pop" style="left:364px;top:64px;width:65px;height:20px"><div class="a" style="left:6px;top:1.5px;line-height:15px">USB</div><svg class="a" style="right:8px;top:3.0px" width="6" height="12"><path d="M3 0.8 L5.6 4.3 L0.4 4.3 Z M3 11.2 L5.6 7.7 L0.4 7.7 Z" fill="#fff"/></svg></div>
<div class="ctext" style="left:322px;top:92px">AGC</div>
<div class="pop" style="left:364px;top:89px;width:65px;height:20px"><div class="a" style="left:6px;top:1.5px;line-height:15px">SLOW</div><svg class="a" style="right:8px;top:3.0px" width="6" height="12"><path d="M3 0.8 L5.6 4.3 L0.4 4.3 Z M3 11.2 L5.6 7.7 L0.4 7.7 Z" fill="#fff"/></svg></div>
<div class="lbl" style="left:26.5px;top:116px">Filter</div>
<div class="lbl" style="left:226.5px;top:116px">Bandstack Registers</div>
<div class="lbl" style="left:426px;top:116px">Audio Processing</div>
<div class="grp" style="left:19px;top:129px;width:192px;height:134px"></div>
<div class="grp" style="left:219px;top:129px;width:192px;height:134px"></div>
<div class="grp" style="left:419px;top:129px;width:158px;height:95px"></div>
<div class="btn" style="left:36px;top:138px">5.0k</div>
<div class="btn" style="left:92px;top:138px">4.4k</div>
<div class="btn" style="left:148px;top:138px">3.8k</div>
<div class="btn" style="left:36px;top:168px">3.3k</div>
<div class="btn" style="left:92px;top:168px">2.9k</div>
<div class="btn" style="left:148px;top:168px">2.7k</div>
<div class="btn" style="left:36px;top:198px">2.4k</div>
<div class="btn" style="left:92px;top:198px">2.1k</div>
<div class="btn" style="left:148px;top:198px">1.8k</div>
<div class="btn" style="left:36px;top:228px">1.0k</div>
<div class="btn" style="left:92px;top:228px">750</div>
<div class="btn" style="left:148px;top:228px">500</div>
<div class="btn" style="left:236px;top:138px">160m</div>
<div class="btn" style="left:292px;top:138px">80m</div>
<div class="btn" style="left:348px;top:138px">60m</div>
<div class="btn" style="left:236px;top:168px">40m</div>
<div class="btn" style="left:292px;top:168px">30m</div>
<div class="btn" style="left:348px;top:168px">20m</div>
<div class="btn" style="left:236px;top:198px">17m</div>
<div class="btn" style="left:292px;top:198px">15m</div>
<div class="btn" style="left:348px;top:198px">12m</div>
<div class="btn" style="left:236px;top:228px">10m</div>
<div class="btn" style="left:292px;top:228px">6m</div>
<div class="btn" style="left:348px;top:228px">GEN</div>
<div class="chk" style="left:435px;top:140px"></div>
<div class="ctext" style="left:453px;top:139px">Noise Reduction</div>
<div class="chk" style="left:435px;top:160px"></div>
<div class="ctext" style="left:453px;top:159px">Auto Notch Filter</div>
<div class="chk" style="left:435px;top:180px"></div>
<div class="ctext" style="left:453px;top:179px">Noise Blanker</div>
<div class="chk" style="left:435px;top:200px"></div>
<div class="ctext" style="left:453px;top:199px">Binaural</div>
<div class="ctext" style="left:434px;top:230px">AF Gain</div>
<div class="strk" style="left:490px;top:237px;width:96px"></div>
<div class="stick" style="left:496.3px;top:229px"></div>
<div class="stick" style="left:504.6px;top:229px"></div>
<div class="stick" style="left:512.9px;top:229px"></div>
<div class="stick" style="left:521.2px;top:229px"></div>
<div class="stick" style="left:529.5px;top:229px"></div>
<div class="stick" style="left:537.8px;top:229px"></div>
<div class="stick" style="left:546.1px;top:229px"></div>
<div class="stick" style="left:554.4px;top:229px"></div>
<div class="stick" style="left:562.7px;top:229px"></div>
<div class="stick" style="left:571.0px;top:229px"></div>
<div class="stick" style="left:579.3px;top:229px"></div>
<svg class="a" style="left:509px;top:232px" width="12" height="15"><path d="M1 13 L1 5 L6 1 L11 5 L11 13 Q11 14 10 14 L2 14 Q1 14 1 13 Z" fill="#3a3e44" stroke="#8a8e94" stroke-width="1"/></svg>
<div class="ctext" style="left:434px;top:255px">Pan</div>
<div class="strk" style="left:490px;top:256px;width:96px"></div>
<div class="stick" style="left:496.3px;top:268px"></div>
<div class="stick" style="left:504.6px;top:268px"></div>
<div class="stick" style="left:512.9px;top:268px"></div>
<div class="stick" style="left:521.2px;top:268px"></div>
<div class="stick" style="left:529.5px;top:268px"></div>
<div class="stick" style="left:537.8px;top:268px"></div>
<div class="stick" style="left:546.1px;top:268px"></div>
<div class="stick" style="left:554.4px;top:268px"></div>
<div class="stick" style="left:562.7px;top:268px"></div>
<div class="stick" style="left:571.0px;top:268px"></div>
<div class="stick" style="left:579.3px;top:268px"></div>
<svg class="a" style="left:529px;top:254px" width="12" height="15"><path d="M1 1 L11 1 L11 9 L6 13 L1 9 Z" fill="#3a3e44" stroke="#8a8e94" stroke-width="1"/></svg>
<div class="bstrip"></div>
</div>
<div class="hud" style="left:997px;top:0px;width:448px;height:289px">
<div class="tb" style="background:linear-gradient(#5b6169,#3f454d)"></div>
<div class="cls" style="left:3.7999999999999545px;top:1.8000000000000007px"></div>
<div class="ttl" style="top:3px;color:#f0f0f0">Subreceiver</div>
<div class="track" style="left:19px;top:40px;width:296px"></div>
<div class="tick" style="left:19.0px;top:33px;width:3px;height:7px"></div>
<div class="tick" style="left:56.6px;top:36px;width:1px;height:4px"></div>
<div class="tick" style="left:92.2px;top:33px;width:3px;height:7px"></div>
<div class="tick" style="left:129.9px;top:36px;width:1px;height:4px"></div>
<div class="tick" style="left:165.5px;top:33px;width:3px;height:7px"></div>
<div class="tick" style="left:203.1px;top:36px;width:1px;height:4px"></div>
<div class="tick" style="left:238.8px;top:33px;width:3px;height:7px"></div>
<div class="tick" style="left:276.4px;top:36px;width:1px;height:4px"></div>
<div class="tick" style="left:312.0px;top:33px;width:3px;height:7px"></div>
<div class="freq" style="left:19px;top:57px;width:296px;height:51px"></div>
<div class="a" style="left:113px;top:60px;width:108px;height:37px;background:#6e6e6e"></div>
<div class="a" style="left:112px;top:66.5px;width:110px;height:37px;font-family:'Liberation Mono', monospace;font-weight:bold;font-size:25px;line-height:37px;color:#fff;text-align:center;letter-spacing:-1.4px">13927000</div>
<div class="chk" style="left:364px;top:38px"></div>
<div class="ctext" style="left:382px;top:37px">Enable</div>
<div class="ctext" style="left:322px;top:63px">Mode</div>
<div class="pop" style="left:364px;top:60px;width:65px;height:20px"><div class="a" style="left:6px;top:1.5px;line-height:15px">LSB</div><svg class="a" style="right:8px;top:3.0px" width="6" height="12"><path d="M3 0.8 L5.6 4.3 L0.4 4.3 Z M3 11.2 L5.6 7.7 L0.4 7.7 Z" fill="#fff"/></svg></div>
<div class="ctext" style="left:322px;top:88px">AGC</div>
<div class="pop" style="left:364px;top:85px;width:65px;height:20px"><div class="a" style="left:6px;top:1.5px;line-height:15px">SLOW</div><svg class="a" style="right:8px;top:3.0px" width="6" height="12"><path d="M3 0.8 L5.6 4.3 L0.4 4.3 Z M3 11.2 L5.6 7.7 L0.4 7.7 Z" fill="#fff"/></svg></div>
<div class="lbl" style="left:27px;top:112.4px">Filter</div>
<div class="lbl" style="left:226.4000000000001px;top:112.4px">Audio Processing</div>
<div class="grp" style="left:20px;top:126px;width:191px;height:133px"></div>
<div class="grp" style="left:220px;top:126px;width:156px;height:96px"></div>
<div class="btn" style="left:36px;top:138px">5.0k</div>
<div class="btn" style="left:92px;top:138px">4.4k</div>
<div class="btn" style="left:148px;top:138px">3.8k</div>
<div class="btn" style="left:36px;top:168px">3.3k</div>
<div class="btn" style="left:92px;top:168px">2.9k</div>
<div class="btn" style="left:148px;top:168px">2.7k</div>
<div class="btn" style="left:36px;top:198px">2.4k</div>
<div class="btn" style="left:92px;top:198px">2.1k</div>
<div class="btn" style="left:148px;top:198px">1.8k</div>
<div class="btn" style="left:36px;top:228px">1.0k</div>
<div class="btn" style="left:92px;top:228px">750</div>
<div class="btn" style="left:148px;top:228px">500</div>
<div class="chk" style="left:235px;top:137px"></div>
<div class="ctext" style="left:253px;top:136px">Noise Reduction</div>
<div class="chk" style="left:235px;top:157px"></div>
<div class="ctext" style="left:253px;top:156px">Auto Notch Filter</div>
<div class="chk" style="left:235px;top:177px"></div>
<div class="ctext" style="left:253px;top:176px">Noise Blanker</div>
<div class="chk" style="left:235px;top:197px"></div>
<div class="ctext" style="left:253px;top:196px">Binaural</div>
<div class="ctext" style="left:234px;top:229.6px">AF Gain</div>
<div class="strk" style="left:290px;top:238px;width:96px"></div>
<div class="stick" style="left:296.4px;top:229px"></div>
<div class="stick" style="left:304.7px;top:229px"></div>
<div class="stick" style="left:313.0px;top:229px"></div>
<div class="stick" style="left:321.3px;top:229px"></div>
<div class="stick" style="left:329.6px;top:229px"></div>
<div class="stick" style="left:337.9px;top:229px"></div>
<div class="stick" style="left:346.2px;top:229px"></div>
<div class="stick" style="left:354.5px;top:229px"></div>
<div class="stick" style="left:362.8px;top:229px"></div>
<div class="stick" style="left:371.1px;top:229px"></div>
<div class="stick" style="left:379.4px;top:229px"></div>
<svg class="a" style="left:342px;top:233px" width="12" height="15"><path d="M1 13 L1 5 L6 1 L11 5 L11 13 Q11 14 10 14 L2 14 Q1 14 1 13 Z" fill="#3a3e44" stroke="#8a8e94" stroke-width="1"/></svg>
<div class="ctext" style="left:234px;top:254.8px">Pan</div>
<div class="strk" style="left:290px;top:256px;width:96px"></div>
<div class="stick" style="left:296.4px;top:267.4px"></div>
<div class="stick" style="left:304.7px;top:267.4px"></div>
<div class="stick" style="left:313.0px;top:267.4px"></div>
<div class="stick" style="left:321.3px;top:267.4px"></div>
<div class="stick" style="left:329.6px;top:267.4px"></div>
<div class="stick" style="left:337.9px;top:267.4px"></div>
<div class="stick" style="left:346.2px;top:267.4px"></div>
<div class="stick" style="left:354.5px;top:267.4px"></div>
<div class="stick" style="left:362.8px;top:267.4px"></div>
<div class="stick" style="left:371.1px;top:267.4px"></div>
<div class="stick" style="left:379.4px;top:267.4px"></div>
<svg class="a" style="left:332px;top:254px" width="12" height="15"><path d="M1 1 L11 1 L11 9 L6 13 L1 9 Z" fill="#3a3e44" stroke="#8a8e94" stroke-width="1"/></svg>
<div class="bstrip"></div>
</div>
<svg class="a" style="left:1560px;top:-24px" width="46" height="46"><defs><linearGradient id="hga" x1="0" x2="0" y1="0" y2="1"><stop offset="0" stop-color="#e6e6e8"/><stop offset=".6" stop-color="#c4c4c8"/><stop offset="1" stop-color="#b0b0b4"/></linearGradient><linearGradient id="hgaf" x1="0" x2="1" y1="0" y2="0"><stop offset="0" stop-color="#9a9a9e"/><stop offset=".4" stop-color="#6a6a70"/><stop offset="1" stop-color="#8c8c90"/></linearGradient></defs><path d="M5.5 2 L40.6 2 L43.5 37.5 L2 37.5 Z" fill="url(#hga)" stroke="#8e8e92" stroke-width=".5"/><rect x="2" y="37.5" width="41.5" height="5.7" fill="url(#hgaf)"/><rect x="2" y="37.3" width="41.5" height="1" fill="#e0e0e2"/><rect x="21" y="38.5" width="11" height="4" fill="#38383c"/><path d="M23.5 38.5v4M26 38.5v4M28.5 38.5v4" stroke="#6a6a6e" stroke-width=".6"/><circle cx="36.5" cy="41.2" r="1" fill="#e8e800"/><rect x="11" y="5" width="18" height="3.2" fill="#1c1c1e"/><rect x="10" y="9" width="20" height="1" fill="#f0f0f0"/><path d="M6.8 23 A16 12 0 0 0 38.8 23" fill="none" stroke="#f6f6f6" stroke-width="1.1"/><path d="M17.8 24 A5 3.5 0 0 0 27.8 24" fill="none" stroke="#f8f8f8" stroke-width="1.2"/><g fill="#555"><circle cx="5.8" cy="3.6" r=".8"/><circle cx="40.3" cy="3.6" r=".8"/><circle cx="3.6" cy="35.8" r=".8"/><circle cx="41.8" cy="35.8" r=".8"/><circle cx="4.6" cy="19" r=".7"/><circle cx="41.2" cy="19" r=".7"/></g></svg>
<svg class="a" style="left:1564px;top:54px" width="46" height="46"><defs><linearGradient id="hgb" x1="0" x2="0" y1="0" y2="1"><stop offset="0" stop-color="#e6e6e8"/><stop offset=".6" stop-color="#c4c4c8"/><stop offset="1" stop-color="#b0b0b4"/></linearGradient><linearGradient id="hgbf" x1="0" x2="1" y1="0" y2="0"><stop offset="0" stop-color="#9a9a9e"/><stop offset=".4" stop-color="#6a6a70"/><stop offset="1" stop-color="#8c8c90"/></linearGradient></defs><path d="M5.5 2 L40.6 2 L43.5 37.5 L2 37.5 Z" fill="url(#hgb)" stroke="#8e8e92" stroke-width=".5"/><rect x="2" y="37.5" width="41.5" height="5.7" fill="url(#hgbf)"/><rect x="2" y="37.3" width="41.5" height="1" fill="#e0e0e2"/><rect x="21" y="38.5" width="11" height="4" fill="#38383c"/><path d="M23.5 38.5v4M26 38.5v4M28.5 38.5v4" stroke="#6a6a6e" stroke-width=".6"/><circle cx="36.5" cy="41.2" r="1" fill="#e8e800"/><rect x="11" y="5" width="18" height="3.2" fill="#1c1c1e"/><rect x="10" y="9" width="20" height="1" fill="#f0f0f0"/><path d="M6.8 23 A16 12 0 0 0 38.8 23" fill="none" stroke="#f6f6f6" stroke-width="1.1"/><path d="M17.8 24 A5 3.5 0 0 0 27.8 24" fill="none" stroke="#f8f8f8" stroke-width="1.2"/><g fill="#555"><circle cx="5.8" cy="3.6" r=".8"/><circle cx="40.3" cy="3.6" r=".8"/><circle cx="3.6" cy="35.8" r=".8"/><circle cx="41.8" cy="35.8" r=".8"/><circle cx="4.6" cy="19" r=".7"/><circle cx="41.2" cy="19" r=".7"/></g></svg>
<div class="a" style="left:1540px;top:29px;font-size:13px;font-weight:bold;color:#fff;text-shadow:0 1px 2px #000;white-space:nowrap">Macintosh HD</div>
<div class="a" style="left:1551px;top:106px;font-size:13px;font-weight:bold;color:#fff;text-shadow:0 1px 2px #000;white-space:nowrap">BOOTCAMP</div>
<svg class="a" style="left:1563px;top:153px" width="48" height="38"><defs><linearGradient id="fg" x1="0" x2="0" y1="0" y2="1"><stop offset="0" stop-color="#b4d8ee"/><stop offset="1" stop-color="#6fb4d8"/></linearGradient></defs><path d="M4 2 L18 2 L21 6 L45 6 L45 10 L4 10 Z" fill="#8cc4e4"/><rect x="1" y="7" width="46" height="29" rx="2" fill="url(#fg)"/><rect x="1" y="34" width="46" height="2" fill="#5a9cc4"/></svg>
<div class="a" style="left:1520px;top:200px;font-size:13px;font-weight:bold;color:#fff;text-shadow:0 1px 2px #000;white-space:nowrap">LV2009_Mf2Dev.</div>
<div class="a" style="left:1564px;top:215px;font-size:12.5px;font-weight:bold;color:#fff;text-shadow:0 1px 2px #000;white-space:nowrap">TEPatch</div>
<svg class="a" style="left:1562px;top:250px" width="36" height="26"><path d="M1 1 L24 1 L34 11 L34 26 L1 26 Z" fill="#f0f0f0"/><path d="M24 1 L24 11 L34 11 Z" fill="#d8d8d8"/></svg>
</body></html>
